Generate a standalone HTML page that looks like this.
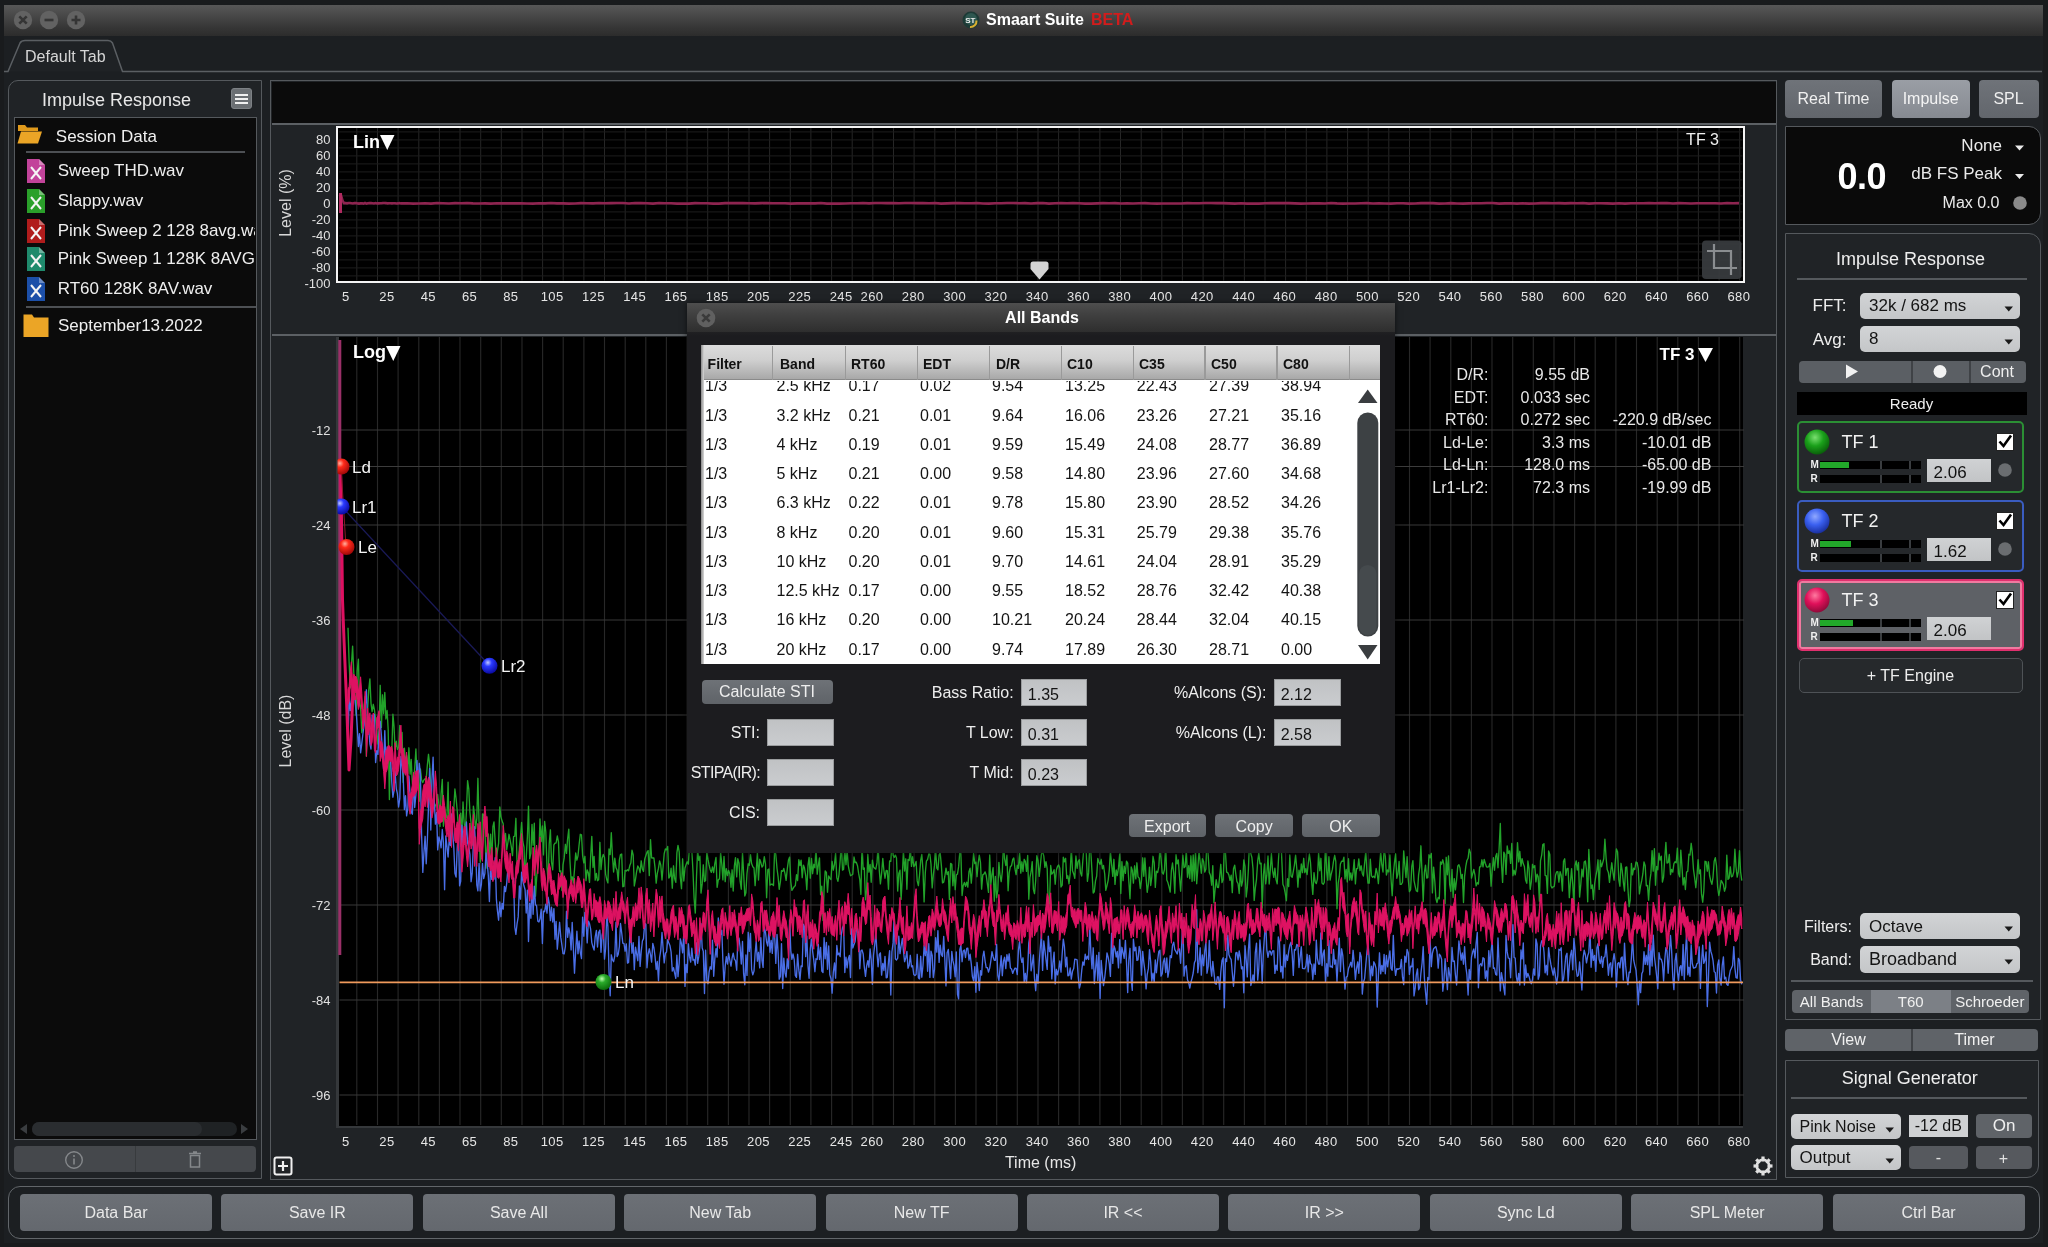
<!DOCTYPE html><html><head><meta charset="utf-8"><style>
html,body{margin:0;padding:0;width:2048px;height:1247px;overflow:hidden;background:#191b1d;font-family:"Liberation Sans",sans-serif;}
div{box-sizing:border-box;}
</style></head><body><div style="position:relative;width:2048px;height:1247px;overflow:hidden;will-change:transform;">
<div style="position:absolute;left:4px;top:35px;width:2039px;height:1208px;background:#1c1f22;"></div>
<div style="position:absolute;left:4px;top:5px;width:2039px;height:31px;background:linear-gradient(#575757 0%,#4a4a4a 30%,#353535 75%,#2c2c2c 100%);"></div>
<svg style="position:absolute;left:12.600000000000001px;top:10px" width="20" height="20" viewBox="0 0 20 20"><circle cx="10" cy="10" r="9.2" fill="#626262"/><path d="M6.3 6.3L13.7 13.7M13.7 6.3L6.3 13.7" stroke="#353535" stroke-width="2.6"/></svg>
<svg style="position:absolute;left:39.4px;top:10px" width="20" height="20" viewBox="0 0 20 20"><circle cx="10" cy="10" r="9.2" fill="#626262"/><path d="M5.5 10H14.5" stroke="#353535" stroke-width="2.6"/></svg>
<svg style="position:absolute;left:66px;top:10px" width="20" height="20" viewBox="0 0 20 20"><circle cx="10" cy="10" r="9.2" fill="#626262"/><path d="M5.5 10H14.5M10 5.5V14.5" stroke="#353535" stroke-width="2.6"/></svg>
<svg style="position:absolute;left:962px;top:11px" width="18" height="18" viewBox="0 0 18 18"><circle cx="9" cy="9" r="8.5" fill="#1d3a36"/><circle cx="9" cy="8" r="6" fill="#3a6a62" opacity="0.6"/><path d="M14.5 9.5 A6 6 0 0 1 8 16" stroke="#d8b030" stroke-width="2" fill="none"/><text x="3.2" y="11.5" font-size="8" font-weight="bold" fill="#eee" font-family="Liberation Sans">ST</text></svg>
<div style="position:absolute;left:986.0px;top:12.0px;font-size:16px;line-height:16px;color:#ffffff;font-weight:bold;white-space:pre;">Smaart Suite</div>
<div style="position:absolute;left:1091.0px;top:12.0px;font-size:16px;line-height:16px;color:#d21c1c;font-weight:bold;white-space:pre;">BETA</div>
<div style="position:absolute;left:4px;top:36px;width:2039px;height:36px;background:#1c1f22;"></div>
<svg style="position:absolute;left:0;top:36px" width="2048" height="40" viewBox="0 36 2048 40"><path d="M4 71.5 L8 71.5 L20 43 Q21.5 40.5 25 40.5 L108 40.5 Q111 40.5 112.5 43 L122.5 71.5 L2042 71.5" fill="#1f2225" stroke="#5b5f63" stroke-width="1.5"/></svg>
<div style="position:absolute;left:25.0px;top:48.7px;font-size:16px;line-height:16px;color:#d6d6d6;font-weight:normal;white-space:pre;">Default Tab</div>
<div style="position:absolute;left:7.5px;top:1186px;width:2032px;height:53px;border:1.5px solid #62666a;border-radius:12px;background:#1c1f22;"></div>
<div style="position:absolute;left:20.0px;top:1194px;width:192px;height:37px;background:linear-gradient(#6c7076,#64686e);border-radius:4px;"></div>
<div style="position:absolute;left:-484.0px;width:1200px;text-align:center;top:1204.5px;font-size:16px;line-height:16px;color:#e8e8e8;font-weight:normal;white-space:pre;">Data Bar</div>
<div style="position:absolute;left:221.4px;top:1194px;width:192px;height:37px;background:linear-gradient(#6c7076,#64686e);border-radius:4px;"></div>
<div style="position:absolute;left:-282.6px;width:1200px;text-align:center;top:1204.5px;font-size:16px;line-height:16px;color:#e8e8e8;font-weight:normal;white-space:pre;">Save IR</div>
<div style="position:absolute;left:422.8px;top:1194px;width:192px;height:37px;background:linear-gradient(#6c7076,#64686e);border-radius:4px;"></div>
<div style="position:absolute;left:-81.2px;width:1200px;text-align:center;top:1204.5px;font-size:16px;line-height:16px;color:#e8e8e8;font-weight:normal;white-space:pre;">Save All</div>
<div style="position:absolute;left:624.2px;top:1194px;width:192px;height:37px;background:linear-gradient(#6c7076,#64686e);border-radius:4px;"></div>
<div style="position:absolute;left:120.2px;width:1200px;text-align:center;top:1204.5px;font-size:16px;line-height:16px;color:#e8e8e8;font-weight:normal;white-space:pre;">New Tab</div>
<div style="position:absolute;left:825.6px;top:1194px;width:192px;height:37px;background:linear-gradient(#6c7076,#64686e);border-radius:4px;"></div>
<div style="position:absolute;left:321.6px;width:1200px;text-align:center;top:1204.5px;font-size:16px;line-height:16px;color:#e8e8e8;font-weight:normal;white-space:pre;">New TF</div>
<div style="position:absolute;left:1027.0px;top:1194px;width:192px;height:37px;background:linear-gradient(#6c7076,#64686e);border-radius:4px;"></div>
<div style="position:absolute;left:523.0px;width:1200px;text-align:center;top:1204.5px;font-size:16px;line-height:16px;color:#e8e8e8;font-weight:normal;white-space:pre;">IR &lt;&lt;</div>
<div style="position:absolute;left:1228.4px;top:1194px;width:192px;height:37px;background:linear-gradient(#6c7076,#64686e);border-radius:4px;"></div>
<div style="position:absolute;left:724.4px;width:1200px;text-align:center;top:1204.5px;font-size:16px;line-height:16px;color:#e8e8e8;font-weight:normal;white-space:pre;">IR &gt;&gt;</div>
<div style="position:absolute;left:1429.8px;top:1194px;width:192px;height:37px;background:linear-gradient(#6c7076,#64686e);border-radius:4px;"></div>
<div style="position:absolute;left:925.8px;width:1200px;text-align:center;top:1204.5px;font-size:16px;line-height:16px;color:#e8e8e8;font-weight:normal;white-space:pre;">Sync Ld</div>
<div style="position:absolute;left:1631.2px;top:1194px;width:192px;height:37px;background:linear-gradient(#6c7076,#64686e);border-radius:4px;"></div>
<div style="position:absolute;left:1127.2px;width:1200px;text-align:center;top:1204.5px;font-size:16px;line-height:16px;color:#e8e8e8;font-weight:normal;white-space:pre;">SPL Meter</div>
<div style="position:absolute;left:1832.6px;top:1194px;width:192px;height:37px;background:linear-gradient(#6c7076,#64686e);border-radius:4px;"></div>
<div style="position:absolute;left:1328.6px;width:1200px;text-align:center;top:1204.5px;font-size:16px;line-height:16px;color:#e8e8e8;font-weight:normal;white-space:pre;">Ctrl Bar</div>
<div style="position:absolute;left:8px;top:80px;width:254px;height:1099px;border:1.5px solid #55595d;border-radius:10px 0 0 10px;background:#202326;"></div>
<div style="position:absolute;left:42.0px;top:90.8px;font-size:18px;line-height:18px;color:#e8e8e8;font-weight:normal;white-space:pre;">Impulse Response</div>
<div style="position:absolute;left:231px;top:88px;width:21px;height:21px;background:#6b6f73;border-radius:3px;border:1px solid #7d8185;"></div>
<div style="position:absolute;left:235px;top:94.2px;width:13px;height:1.6px;background:#f0f0f0;"></div>
<div style="position:absolute;left:235px;top:98.2px;width:13px;height:1.6px;background:#f0f0f0;"></div>
<div style="position:absolute;left:235px;top:102.2px;width:13px;height:1.6px;background:#f0f0f0;"></div>
<div style="position:absolute;left:13.5px;top:117px;width:243px;height:1022.5px;border:1.5px solid #55595d;background:#0b0b0b;"></div>
<svg style="position:absolute;left:16px;top:122px" width="28" height="24" viewBox="0 0 28 24"><path d="M2 3 H9 L11 5.5 H22 V9 H2 Z" fill="#e09a1c"/><path d="M5 9.5 H26 L22 21.5 H1.5 Z" fill="#eba526"/></svg>
<div style="position:absolute;left:55.8px;top:128.4px;font-size:17px;line-height:17px;color:#f0f0f0;font-weight:normal;white-space:pre;">Session Data</div>
<div style="position:absolute;left:26px;top:151px;width:219px;height:2.2px;background:#4d5054;"></div>
<div style="position:absolute;left:15px;top:150px;width:240px;height:160px;overflow:hidden;">
<svg style="position:absolute;left:11px;top:8.9px" width="20" height="24" viewBox="0 0 20 24"><path d="M1 0 H13 L19 6 V24 H1 Z" fill="#c2439a"/><path d="M13 0 L19 6 H13 Z" fill="#ffffff" opacity="0.35"/><path d="M5 8 L15 20 M15 8 L5 20" stroke="#f4f4f4" stroke-width="2.0"/></svg>
<div style="position:absolute;left:42.7px;top:12.0px;font-size:17px;line-height:17px;color:#eeeeee;font-weight:normal;white-space:pre;">Sweep THD.wav</div>
<svg style="position:absolute;left:11px;top:38.5px" width="20" height="24" viewBox="0 0 20 24"><path d="M1 0 H13 L19 6 V24 H1 Z" fill="#2aa02a"/><path d="M13 0 L19 6 H13 Z" fill="#ffffff" opacity="0.35"/><path d="M5 8 L15 20 M15 8 L5 20" stroke="#f4f4f4" stroke-width="2.0"/></svg>
<div style="position:absolute;left:42.7px;top:41.6px;font-size:17px;line-height:17px;color:#eeeeee;font-weight:normal;white-space:pre;">Slappy.wav</div>
<svg style="position:absolute;left:11px;top:68.5px" width="20" height="24" viewBox="0 0 20 24"><path d="M1 0 H13 L19 6 V24 H1 Z" fill="#b01c1c"/><path d="M13 0 L19 6 H13 Z" fill="#ffffff" opacity="0.35"/><path d="M5 8 L15 20 M15 8 L5 20" stroke="#f4f4f4" stroke-width="2.0"/></svg>
<div style="position:absolute;left:42.7px;top:71.6px;font-size:17px;line-height:17px;color:#eeeeee;font-weight:normal;white-space:pre;">Pink Sweep 2 128 8avg.wav</div>
<svg style="position:absolute;left:11px;top:97.3px" width="20" height="24" viewBox="0 0 20 24"><path d="M1 0 H13 L19 6 V24 H1 Z" fill="#1f8a6c"/><path d="M13 0 L19 6 H13 Z" fill="#ffffff" opacity="0.35"/><path d="M5 8 L15 20 M15 8 L5 20" stroke="#f4f4f4" stroke-width="2.0"/></svg>
<div style="position:absolute;left:42.7px;top:100.4px;font-size:17px;line-height:17px;color:#eeeeee;font-weight:normal;white-space:pre;">Pink Sweep 1 128K 8AVG.wav</div>
<svg style="position:absolute;left:11px;top:127.1px" width="20" height="24" viewBox="0 0 20 24"><path d="M1 0 H13 L19 6 V24 H1 Z" fill="#1c4fa8"/><path d="M13 0 L19 6 H13 Z" fill="#ffffff" opacity="0.35"/><path d="M5 8 L15 20 M15 8 L5 20" stroke="#f4f4f4" stroke-width="2.0"/></svg>
<div style="position:absolute;left:42.7px;top:130.2px;font-size:17px;line-height:17px;color:#eeeeee;font-weight:normal;white-space:pre;">RT60 128K 8AV.wav</div>
</div>
<div style="position:absolute;left:26px;top:305.5px;width:230px;height:2.2px;background:#4d5054;"></div>
<svg style="position:absolute;left:22px;top:313px" width="28" height="25" viewBox="0 0 28 25"><path d="M1.5 1.5 H10 L12 4.5 H26.5 V24 H1.5 Z" fill="#eba526"/></svg>
<div style="position:absolute;left:58.0px;top:316.6px;font-size:17px;line-height:17px;color:#eeeeee;font-weight:normal;white-space:pre;">September13.2022</div>
<div style="position:absolute;left:32px;top:1122px;width:205px;height:14px;background:#1f2224;border-radius:7px;"></div>
<div style="position:absolute;left:32px;top:1122px;width:170px;height:14px;background:#2a2d30;border-radius:7px;"></div>
<svg style="position:absolute;left:16px;top:1122px" width="236" height="14"><path d="M4 7 L11 2 V12 Z" fill="#3a3d40"/><path d="M232 7 L225 2 V12 Z" fill="#3a3d40"/></svg>
<div style="position:absolute;left:14px;top:1146px;width:242px;height:26px;background:#45484c;border-radius:4px;"></div>
<div style="position:absolute;left:134.5px;top:1146px;width:1.5px;height:26px;background:#383b3e;"></div>
<svg style="position:absolute;left:64px;top:1150px" width="20" height="20" viewBox="0 0 20 20"><circle cx="10" cy="10" r="8.3" fill="none" stroke="#85888b" stroke-width="1.4"/><rect x="9.2" y="8.5" width="1.6" height="6" fill="#85888b"/><circle cx="10" cy="6" r="1" fill="#85888b"/></svg>
<svg style="position:absolute;left:186px;top:1150px" width="18" height="20" viewBox="0 0 18 20"><path d="M3 3.5 H15 M7 2 H11" stroke="#85888b" stroke-width="1.5"/><rect x="4.5" y="5.5" width="9" height="11.5" fill="none" stroke="#85888b" stroke-width="1.5"/></svg>
<div style="position:absolute;left:270px;top:80px;width:1507px;height:1100px;border:1.5px solid #55595d;background:#202326;"></div>
<div style="position:absolute;left:271.5px;top:81.5px;width:1504px;height:41.5px;background:#0b0b0b;"></div>
<div style="position:absolute;left:271.5px;top:123px;width:1504px;height:2.2px;background:#5c6064;"></div>
<div style="position:absolute;left:271.5px;top:333.8px;width:1504px;height:2.4px;background:#5c6064;"></div>
<div style="position:absolute;left:336px;top:125.5px;width:1409px;height:157.5px;background:#000;border:2.5px solid #f4f4f4;"></div>
<svg style="position:absolute;left:0;top:0" width="2048" height="1247"><line x1="356.8" y1="128" x2="356.8" y2="280.5" stroke="#262626" stroke-width="1"/><line x1="377.5" y1="128" x2="377.5" y2="280.5" stroke="#262626" stroke-width="1"/><line x1="398.1" y1="128" x2="398.1" y2="280.5" stroke="#262626" stroke-width="1"/><line x1="418.8" y1="128" x2="418.8" y2="280.5" stroke="#262626" stroke-width="1"/><line x1="439.4" y1="128" x2="439.4" y2="280.5" stroke="#262626" stroke-width="1"/><line x1="460.0" y1="128" x2="460.0" y2="280.5" stroke="#262626" stroke-width="1"/><line x1="480.7" y1="128" x2="480.7" y2="280.5" stroke="#262626" stroke-width="1"/><line x1="501.3" y1="128" x2="501.3" y2="280.5" stroke="#262626" stroke-width="1"/><line x1="522.0" y1="128" x2="522.0" y2="280.5" stroke="#262626" stroke-width="1"/><line x1="542.6" y1="128" x2="542.6" y2="280.5" stroke="#262626" stroke-width="1"/><line x1="563.2" y1="128" x2="563.2" y2="280.5" stroke="#262626" stroke-width="1"/><line x1="583.9" y1="128" x2="583.9" y2="280.5" stroke="#262626" stroke-width="1"/><line x1="604.5" y1="128" x2="604.5" y2="280.5" stroke="#262626" stroke-width="1"/><line x1="625.2" y1="128" x2="625.2" y2="280.5" stroke="#262626" stroke-width="1"/><line x1="645.8" y1="128" x2="645.8" y2="280.5" stroke="#262626" stroke-width="1"/><line x1="666.4" y1="128" x2="666.4" y2="280.5" stroke="#262626" stroke-width="1"/><line x1="687.1" y1="128" x2="687.1" y2="280.5" stroke="#262626" stroke-width="1"/><line x1="707.7" y1="128" x2="707.7" y2="280.5" stroke="#262626" stroke-width="1"/><line x1="728.4" y1="128" x2="728.4" y2="280.5" stroke="#262626" stroke-width="1"/><line x1="749.0" y1="128" x2="749.0" y2="280.5" stroke="#262626" stroke-width="1"/><line x1="769.6" y1="128" x2="769.6" y2="280.5" stroke="#262626" stroke-width="1"/><line x1="790.3" y1="128" x2="790.3" y2="280.5" stroke="#262626" stroke-width="1"/><line x1="810.9" y1="128" x2="810.9" y2="280.5" stroke="#262626" stroke-width="1"/><line x1="831.6" y1="128" x2="831.6" y2="280.5" stroke="#262626" stroke-width="1"/><line x1="852.2" y1="128" x2="852.2" y2="280.5" stroke="#262626" stroke-width="1"/><line x1="872.8" y1="128" x2="872.8" y2="280.5" stroke="#262626" stroke-width="1"/><line x1="893.5" y1="128" x2="893.5" y2="280.5" stroke="#262626" stroke-width="1"/><line x1="914.1" y1="128" x2="914.1" y2="280.5" stroke="#262626" stroke-width="1"/><line x1="934.8" y1="128" x2="934.8" y2="280.5" stroke="#262626" stroke-width="1"/><line x1="955.4" y1="128" x2="955.4" y2="280.5" stroke="#262626" stroke-width="1"/><line x1="976.0" y1="128" x2="976.0" y2="280.5" stroke="#262626" stroke-width="1"/><line x1="996.7" y1="128" x2="996.7" y2="280.5" stroke="#262626" stroke-width="1"/><line x1="1017.3" y1="128" x2="1017.3" y2="280.5" stroke="#262626" stroke-width="1"/><line x1="1038.0" y1="128" x2="1038.0" y2="280.5" stroke="#262626" stroke-width="1"/><line x1="1058.6" y1="128" x2="1058.6" y2="280.5" stroke="#262626" stroke-width="1"/><line x1="1079.2" y1="128" x2="1079.2" y2="280.5" stroke="#262626" stroke-width="1"/><line x1="1099.9" y1="128" x2="1099.9" y2="280.5" stroke="#262626" stroke-width="1"/><line x1="1120.5" y1="128" x2="1120.5" y2="280.5" stroke="#262626" stroke-width="1"/><line x1="1141.2" y1="128" x2="1141.2" y2="280.5" stroke="#262626" stroke-width="1"/><line x1="1161.8" y1="128" x2="1161.8" y2="280.5" stroke="#262626" stroke-width="1"/><line x1="1182.4" y1="128" x2="1182.4" y2="280.5" stroke="#262626" stroke-width="1"/><line x1="1203.1" y1="128" x2="1203.1" y2="280.5" stroke="#262626" stroke-width="1"/><line x1="1223.7" y1="128" x2="1223.7" y2="280.5" stroke="#262626" stroke-width="1"/><line x1="1244.4" y1="128" x2="1244.4" y2="280.5" stroke="#262626" stroke-width="1"/><line x1="1265.0" y1="128" x2="1265.0" y2="280.5" stroke="#262626" stroke-width="1"/><line x1="1285.6" y1="128" x2="1285.6" y2="280.5" stroke="#262626" stroke-width="1"/><line x1="1306.3" y1="128" x2="1306.3" y2="280.5" stroke="#262626" stroke-width="1"/><line x1="1326.9" y1="128" x2="1326.9" y2="280.5" stroke="#262626" stroke-width="1"/><line x1="1347.6" y1="128" x2="1347.6" y2="280.5" stroke="#262626" stroke-width="1"/><line x1="1368.2" y1="128" x2="1368.2" y2="280.5" stroke="#262626" stroke-width="1"/><line x1="1388.8" y1="128" x2="1388.8" y2="280.5" stroke="#262626" stroke-width="1"/><line x1="1409.5" y1="128" x2="1409.5" y2="280.5" stroke="#262626" stroke-width="1"/><line x1="1430.1" y1="128" x2="1430.1" y2="280.5" stroke="#262626" stroke-width="1"/><line x1="1450.8" y1="128" x2="1450.8" y2="280.5" stroke="#262626" stroke-width="1"/><line x1="1471.4" y1="128" x2="1471.4" y2="280.5" stroke="#262626" stroke-width="1"/><line x1="1492.0" y1="128" x2="1492.0" y2="280.5" stroke="#262626" stroke-width="1"/><line x1="1512.7" y1="128" x2="1512.7" y2="280.5" stroke="#262626" stroke-width="1"/><line x1="1533.3" y1="128" x2="1533.3" y2="280.5" stroke="#262626" stroke-width="1"/><line x1="1554.0" y1="128" x2="1554.0" y2="280.5" stroke="#262626" stroke-width="1"/><line x1="1574.6" y1="128" x2="1574.6" y2="280.5" stroke="#262626" stroke-width="1"/><line x1="1595.2" y1="128" x2="1595.2" y2="280.5" stroke="#262626" stroke-width="1"/><line x1="1615.9" y1="128" x2="1615.9" y2="280.5" stroke="#262626" stroke-width="1"/><line x1="1636.5" y1="128" x2="1636.5" y2="280.5" stroke="#262626" stroke-width="1"/><line x1="1657.2" y1="128" x2="1657.2" y2="280.5" stroke="#262626" stroke-width="1"/><line x1="1677.8" y1="128" x2="1677.8" y2="280.5" stroke="#262626" stroke-width="1"/><line x1="1698.4" y1="128" x2="1698.4" y2="280.5" stroke="#262626" stroke-width="1"/><line x1="1719.1" y1="128" x2="1719.1" y2="280.5" stroke="#262626" stroke-width="1"/><line x1="1739.7" y1="128" x2="1739.7" y2="280.5" stroke="#262626" stroke-width="1"/><line x1="339" y1="131.9" x2="1742.5" y2="131.9" stroke="#1c1c1c" stroke-width="1"/><line x1="339" y1="139.9" x2="1742.5" y2="139.9" stroke="#1c1c1c" stroke-width="1"/><line x1="339" y1="147.9" x2="1742.5" y2="147.9" stroke="#1c1c1c" stroke-width="1"/><line x1="339" y1="155.9" x2="1742.5" y2="155.9" stroke="#1c1c1c" stroke-width="1"/><line x1="339" y1="163.9" x2="1742.5" y2="163.9" stroke="#1c1c1c" stroke-width="1"/><line x1="339" y1="171.9" x2="1742.5" y2="171.9" stroke="#1c1c1c" stroke-width="1"/><line x1="339" y1="179.9" x2="1742.5" y2="179.9" stroke="#1c1c1c" stroke-width="1"/><line x1="339" y1="187.9" x2="1742.5" y2="187.9" stroke="#1c1c1c" stroke-width="1"/><line x1="339" y1="195.9" x2="1742.5" y2="195.9" stroke="#1c1c1c" stroke-width="1"/><line x1="339" y1="203.9" x2="1742.5" y2="203.9" stroke="#1c1c1c" stroke-width="1"/><line x1="339" y1="211.9" x2="1742.5" y2="211.9" stroke="#1c1c1c" stroke-width="1"/><line x1="339" y1="219.9" x2="1742.5" y2="219.9" stroke="#1c1c1c" stroke-width="1"/><line x1="339" y1="227.9" x2="1742.5" y2="227.9" stroke="#1c1c1c" stroke-width="1"/><line x1="339" y1="235.9" x2="1742.5" y2="235.9" stroke="#1c1c1c" stroke-width="1"/><line x1="339" y1="243.9" x2="1742.5" y2="243.9" stroke="#1c1c1c" stroke-width="1"/><line x1="339" y1="251.9" x2="1742.5" y2="251.9" stroke="#1c1c1c" stroke-width="1"/><line x1="339" y1="259.9" x2="1742.5" y2="259.9" stroke="#1c1c1c" stroke-width="1"/><line x1="339" y1="267.9" x2="1742.5" y2="267.9" stroke="#1c1c1c" stroke-width="1"/><line x1="339" y1="275.9" x2="1742.5" y2="275.9" stroke="#1c1c1c" stroke-width="1"/><polyline points="339.5,196.7 341.0,195.3 342.5,200.6 344.0,203.1 345.5,203.0 347.0,203.3 348.5,203.0 350.0,203.0 351.5,203.2 353.0,203.5 354.5,203.0 356.0,203.1 357.5,203.4 359.0,203.6 360.5,203.4 362.0,203.2 363.5,203.6 365.0,203.0 366.5,203.6 368.0,203.2 369.5,203.1 371.0,203.0 372.5,203.2 374.0,203.5 375.5,203.1 377.0,203.4 378.5,203.4 380.0,203.2 381.5,203.3 383.0,203.0 384.5,203.0 386.0,203.1 387.5,203.4 389.0,203.2 390.5,203.2 392.0,203.4 393.5,203.3 395.0,203.2 396.5,203.5 398.0,203.4 399.5,203.1 401.0,203.4 407.0,203.3 413.0,203.6 419.0,203.5 425.0,203.2 431.0,203.6 437.0,203.0 443.0,203.2 449.0,203.5 455.0,203.1 461.0,203.3 467.0,203.0 473.0,203.4 479.0,203.5 485.0,203.4 491.0,203.6 497.0,203.2 503.0,203.4 509.0,203.4 515.0,203.4 521.0,203.3 527.0,203.5 533.0,203.6 539.0,203.3 545.0,203.4 551.0,203.0 557.0,203.4 563.0,203.4 569.0,203.6 575.0,203.5 581.0,203.1 587.0,203.2 593.0,203.4 599.0,203.0 605.0,203.3 611.0,203.1 617.0,203.0 623.0,203.0 629.0,203.5 635.0,203.0 641.0,203.1 647.0,203.2 653.0,203.6 659.0,203.0 665.0,203.3 671.0,203.3 677.0,203.6 683.0,203.5 689.0,203.6 695.0,203.1 701.0,203.2 707.0,203.2 713.0,203.6 719.0,203.6 725.0,203.1 731.0,203.1 737.0,203.1 743.0,203.1 749.0,203.3 755.0,203.4 761.0,203.1 767.0,203.0 773.0,203.2 779.0,203.2 785.0,203.3 791.0,203.6 797.0,203.4 803.0,203.3 809.0,203.4 815.0,203.4 821.0,203.0 827.0,203.6 833.0,203.5 839.0,203.6 845.0,203.5 851.0,203.2 857.0,203.2 863.0,203.0 869.0,203.4 875.0,203.0 881.0,203.0 887.0,203.1 893.0,203.1 899.0,203.2 905.0,203.0 911.0,203.0 917.0,203.1 923.0,203.0 929.0,203.2 935.0,203.0 941.0,203.6 947.0,203.4 953.0,203.1 959.0,203.1 965.0,203.2 971.0,203.2 977.0,203.0 983.0,203.5 989.0,203.6 995.0,203.3 1001.0,203.3 1007.0,203.0 1013.0,203.0 1019.0,203.2 1025.0,203.1 1031.0,203.5 1037.0,203.1 1043.0,203.0 1049.0,203.6 1055.0,203.3 1061.0,203.1 1067.0,203.3 1073.0,203.0 1079.0,203.3 1085.0,203.6 1091.0,203.6 1097.0,203.4 1103.0,203.1 1109.0,203.2 1115.0,203.1 1121.0,203.5 1127.0,203.3 1133.0,203.5 1139.0,203.2 1145.0,203.1 1151.0,203.5 1157.0,203.6 1163.0,203.5 1169.0,203.5 1175.0,203.5 1181.0,203.5 1187.0,203.1 1193.0,203.3 1199.0,203.2 1205.0,203.0 1211.0,203.0 1217.0,203.1 1223.0,203.1 1229.0,203.4 1235.0,203.6 1241.0,203.3 1247.0,203.6 1253.0,203.6 1259.0,203.6 1265.0,203.2 1271.0,203.1 1277.0,203.1 1283.0,203.1 1289.0,203.1 1295.0,203.4 1301.0,203.6 1307.0,203.5 1313.0,203.3 1319.0,203.4 1325.0,203.5 1331.0,203.0 1337.0,203.4 1343.0,203.6 1349.0,203.5 1355.0,203.5 1361.0,203.3 1367.0,203.1 1373.0,203.5 1379.0,203.2 1385.0,203.5 1391.0,203.6 1397.0,203.2 1403.0,203.2 1409.0,203.6 1415.0,203.5 1421.0,203.1 1427.0,203.0 1433.0,203.1 1439.0,203.6 1445.0,203.5 1451.0,203.1 1457.0,203.5 1463.0,203.6 1469.0,203.4 1475.0,203.2 1481.0,203.3 1487.0,203.0 1493.0,203.0 1499.0,203.6 1505.0,203.4 1511.0,203.3 1517.0,203.6 1523.0,203.3 1529.0,203.6 1535.0,203.5 1541.0,203.1 1547.0,203.1 1553.0,203.2 1559.0,203.1 1565.0,203.4 1571.0,203.1 1577.0,203.2 1583.0,203.0 1589.0,203.6 1595.0,203.2 1601.0,203.3 1607.0,203.4 1613.0,203.6 1619.0,203.2 1625.0,203.6 1631.0,203.3 1637.0,203.3 1643.0,203.3 1649.0,203.0 1655.0,203.3 1661.0,203.1 1667.0,203.0 1673.0,203.5 1679.0,203.1 1685.0,203.3 1691.0,203.5 1697.0,203.3 1703.0,203.2 1709.0,203.3 1715.0,203.3 1721.0,203.5 1727.0,203.0 1733.0,203.3 1739.0,203.1" fill="none" stroke="#8e2450" stroke-width="2.6"/><rect x="339" y="193" width="3" height="20" fill="#b02a60"/><path d="M1030.5 264 Q1030.5 261.5 1033 261.5 H1046 Q1048.5 261.5 1048.5 264 V269 L1039.5 279.5 L1030.5 269 Z" fill="#d4d4d4"/><rect x="1702" y="240.5" width="39.5" height="38.5" rx="4" fill="#3a3d40" opacity="0.9"/><path d="M1714 244 V268 H1737 M1707 251 H1731 V275" fill="none" stroke="#8a8d90" stroke-width="2.2"/></svg>
<div style="position:absolute;left:353.0px;top:132.8px;font-size:18px;line-height:18px;color:#ffffff;font-weight:bold;white-space:pre;">Lin</div>
<svg style="position:absolute;left:379px;top:134px" width="17" height="17"><path d="M1 1 H15.5 L8.25 16 Z" fill="#fff"/></svg>
<div style="position:absolute;left:519.0px;width:1200px;text-align:right;top:132.0px;font-size:16px;line-height:16px;color:#f0f0f0;font-weight:normal;white-space:pre;">TF 3</div>
<div style="position:absolute;left:-869.5px;width:1200px;text-align:right;top:132.8px;font-size:13px;line-height:13px;color:#e0e0e0;font-weight:normal;white-space:pre;">80</div>
<div style="position:absolute;left:-869.5px;width:1200px;text-align:right;top:148.8px;font-size:13px;line-height:13px;color:#e0e0e0;font-weight:normal;white-space:pre;">60</div>
<div style="position:absolute;left:-869.5px;width:1200px;text-align:right;top:164.7px;font-size:13px;line-height:13px;color:#e0e0e0;font-weight:normal;white-space:pre;">40</div>
<div style="position:absolute;left:-869.5px;width:1200px;text-align:right;top:180.7px;font-size:13px;line-height:13px;color:#e0e0e0;font-weight:normal;white-space:pre;">20</div>
<div style="position:absolute;left:-869.5px;width:1200px;text-align:right;top:196.7px;font-size:13px;line-height:13px;color:#e0e0e0;font-weight:normal;white-space:pre;">0</div>
<div style="position:absolute;left:-869.5px;width:1200px;text-align:right;top:212.6px;font-size:13px;line-height:13px;color:#e0e0e0;font-weight:normal;white-space:pre;">-20</div>
<div style="position:absolute;left:-869.5px;width:1200px;text-align:right;top:228.6px;font-size:13px;line-height:13px;color:#e0e0e0;font-weight:normal;white-space:pre;">-40</div>
<div style="position:absolute;left:-869.5px;width:1200px;text-align:right;top:244.6px;font-size:13px;line-height:13px;color:#e0e0e0;font-weight:normal;white-space:pre;">-60</div>
<div style="position:absolute;left:-869.5px;width:1200px;text-align:right;top:260.6px;font-size:13px;line-height:13px;color:#e0e0e0;font-weight:normal;white-space:pre;">-80</div>
<div style="position:absolute;left:-869.5px;width:1200px;text-align:right;top:276.5px;font-size:13px;line-height:13px;color:#e0e0e0;font-weight:normal;white-space:pre;">-100</div>
<div style="position:absolute;left:236px;top:194px;width:100px;height:18px;transform:rotate(-90deg);transform-origin:50px 9px;text-align:center;font-size:16px;line-height:18px;color:#d8d8d8;">Level (%)</div>
<div style="position:absolute;left:-254.3px;width:1200px;text-align:center;top:290.0px;font-size:13px;line-height:13px;color:#e6e6e6;font-weight:normal;white-space:pre;letter-spacing:0.4px;">5</div>
<div style="position:absolute;left:-213.0px;width:1200px;text-align:center;top:290.0px;font-size:13px;line-height:13px;color:#e6e6e6;font-weight:normal;white-space:pre;letter-spacing:0.4px;">25</div>
<div style="position:absolute;left:-171.7px;width:1200px;text-align:center;top:290.0px;font-size:13px;line-height:13px;color:#e6e6e6;font-weight:normal;white-space:pre;letter-spacing:0.4px;">45</div>
<div style="position:absolute;left:-130.4px;width:1200px;text-align:center;top:290.0px;font-size:13px;line-height:13px;color:#e6e6e6;font-weight:normal;white-space:pre;letter-spacing:0.4px;">65</div>
<div style="position:absolute;left:-89.2px;width:1200px;text-align:center;top:290.0px;font-size:13px;line-height:13px;color:#e6e6e6;font-weight:normal;white-space:pre;letter-spacing:0.4px;">85</div>
<div style="position:absolute;left:-47.9px;width:1200px;text-align:center;top:290.0px;font-size:13px;line-height:13px;color:#e6e6e6;font-weight:normal;white-space:pre;letter-spacing:0.4px;">105</div>
<div style="position:absolute;left:-6.6px;width:1200px;text-align:center;top:290.0px;font-size:13px;line-height:13px;color:#e6e6e6;font-weight:normal;white-space:pre;letter-spacing:0.4px;">125</div>
<div style="position:absolute;left:34.7px;width:1200px;text-align:center;top:290.0px;font-size:13px;line-height:13px;color:#e6e6e6;font-weight:normal;white-space:pre;letter-spacing:0.4px;">145</div>
<div style="position:absolute;left:76.0px;width:1200px;text-align:center;top:290.0px;font-size:13px;line-height:13px;color:#e6e6e6;font-weight:normal;white-space:pre;letter-spacing:0.4px;">165</div>
<div style="position:absolute;left:117.2px;width:1200px;text-align:center;top:290.0px;font-size:13px;line-height:13px;color:#e6e6e6;font-weight:normal;white-space:pre;letter-spacing:0.4px;">185</div>
<div style="position:absolute;left:158.5px;width:1200px;text-align:center;top:290.0px;font-size:13px;line-height:13px;color:#e6e6e6;font-weight:normal;white-space:pre;letter-spacing:0.4px;">205</div>
<div style="position:absolute;left:199.8px;width:1200px;text-align:center;top:290.0px;font-size:13px;line-height:13px;color:#e6e6e6;font-weight:normal;white-space:pre;letter-spacing:0.4px;">225</div>
<div style="position:absolute;left:241.1px;width:1200px;text-align:center;top:290.0px;font-size:13px;line-height:13px;color:#e6e6e6;font-weight:normal;white-space:pre;letter-spacing:0.4px;">245</div>
<div style="position:absolute;left:272.0px;width:1200px;text-align:center;top:290.0px;font-size:13px;line-height:13px;color:#e6e6e6;font-weight:normal;white-space:pre;letter-spacing:0.4px;">260</div>
<div style="position:absolute;left:313.3px;width:1200px;text-align:center;top:290.0px;font-size:13px;line-height:13px;color:#e6e6e6;font-weight:normal;white-space:pre;letter-spacing:0.4px;">280</div>
<div style="position:absolute;left:354.6px;width:1200px;text-align:center;top:290.0px;font-size:13px;line-height:13px;color:#e6e6e6;font-weight:normal;white-space:pre;letter-spacing:0.4px;">300</div>
<div style="position:absolute;left:395.9px;width:1200px;text-align:center;top:290.0px;font-size:13px;line-height:13px;color:#e6e6e6;font-weight:normal;white-space:pre;letter-spacing:0.4px;">320</div>
<div style="position:absolute;left:437.2px;width:1200px;text-align:center;top:290.0px;font-size:13px;line-height:13px;color:#e6e6e6;font-weight:normal;white-space:pre;letter-spacing:0.4px;">340</div>
<div style="position:absolute;left:478.4px;width:1200px;text-align:center;top:290.0px;font-size:13px;line-height:13px;color:#e6e6e6;font-weight:normal;white-space:pre;letter-spacing:0.4px;">360</div>
<div style="position:absolute;left:519.7px;width:1200px;text-align:center;top:290.0px;font-size:13px;line-height:13px;color:#e6e6e6;font-weight:normal;white-space:pre;letter-spacing:0.4px;">380</div>
<div style="position:absolute;left:561.0px;width:1200px;text-align:center;top:290.0px;font-size:13px;line-height:13px;color:#e6e6e6;font-weight:normal;white-space:pre;letter-spacing:0.4px;">400</div>
<div style="position:absolute;left:602.3px;width:1200px;text-align:center;top:290.0px;font-size:13px;line-height:13px;color:#e6e6e6;font-weight:normal;white-space:pre;letter-spacing:0.4px;">420</div>
<div style="position:absolute;left:643.6px;width:1200px;text-align:center;top:290.0px;font-size:13px;line-height:13px;color:#e6e6e6;font-weight:normal;white-space:pre;letter-spacing:0.4px;">440</div>
<div style="position:absolute;left:684.8px;width:1200px;text-align:center;top:290.0px;font-size:13px;line-height:13px;color:#e6e6e6;font-weight:normal;white-space:pre;letter-spacing:0.4px;">460</div>
<div style="position:absolute;left:726.1px;width:1200px;text-align:center;top:290.0px;font-size:13px;line-height:13px;color:#e6e6e6;font-weight:normal;white-space:pre;letter-spacing:0.4px;">480</div>
<div style="position:absolute;left:767.4px;width:1200px;text-align:center;top:290.0px;font-size:13px;line-height:13px;color:#e6e6e6;font-weight:normal;white-space:pre;letter-spacing:0.4px;">500</div>
<div style="position:absolute;left:808.7px;width:1200px;text-align:center;top:290.0px;font-size:13px;line-height:13px;color:#e6e6e6;font-weight:normal;white-space:pre;letter-spacing:0.4px;">520</div>
<div style="position:absolute;left:850.0px;width:1200px;text-align:center;top:290.0px;font-size:13px;line-height:13px;color:#e6e6e6;font-weight:normal;white-space:pre;letter-spacing:0.4px;">540</div>
<div style="position:absolute;left:891.2px;width:1200px;text-align:center;top:290.0px;font-size:13px;line-height:13px;color:#e6e6e6;font-weight:normal;white-space:pre;letter-spacing:0.4px;">560</div>
<div style="position:absolute;left:932.5px;width:1200px;text-align:center;top:290.0px;font-size:13px;line-height:13px;color:#e6e6e6;font-weight:normal;white-space:pre;letter-spacing:0.4px;">580</div>
<div style="position:absolute;left:973.8px;width:1200px;text-align:center;top:290.0px;font-size:13px;line-height:13px;color:#e6e6e6;font-weight:normal;white-space:pre;letter-spacing:0.4px;">600</div>
<div style="position:absolute;left:1015.1px;width:1200px;text-align:center;top:290.0px;font-size:13px;line-height:13px;color:#e6e6e6;font-weight:normal;white-space:pre;letter-spacing:0.4px;">620</div>
<div style="position:absolute;left:1056.4px;width:1200px;text-align:center;top:290.0px;font-size:13px;line-height:13px;color:#e6e6e6;font-weight:normal;white-space:pre;letter-spacing:0.4px;">640</div>
<div style="position:absolute;left:1097.6px;width:1200px;text-align:center;top:290.0px;font-size:13px;line-height:13px;color:#e6e6e6;font-weight:normal;white-space:pre;letter-spacing:0.4px;">660</div>
<div style="position:absolute;left:1138.9px;width:1200px;text-align:center;top:290.0px;font-size:13px;line-height:13px;color:#e6e6e6;font-weight:normal;white-space:pre;letter-spacing:0.4px;">680</div>
<div style="position:absolute;left:336px;top:337px;width:1406.8px;height:790.5px;background:#000;border-left:3.5px solid #35383b;border-bottom:2.5px solid #35383b;"></div>
<svg style="position:absolute;left:0;top:0" width="2048" height="1247"><defs><radialGradient id="gr" cx="40%" cy="30%" r="70%"><stop offset="0" stop-color="#ffb0a0"/><stop offset="0.35" stop-color="#ff2a1a"/><stop offset="1" stop-color="#a00808"/></radialGradient><radialGradient id="gb" cx="40%" cy="30%" r="70%"><stop offset="0" stop-color="#c0c8ff"/><stop offset="0.35" stop-color="#2a3aff"/><stop offset="1" stop-color="#0a0aa0"/></radialGradient><radialGradient id="gg" cx="40%" cy="30%" r="70%"><stop offset="0" stop-color="#c0ffb0"/><stop offset="0.35" stop-color="#2aaa2a"/><stop offset="1" stop-color="#0a6a0a"/></radialGradient><clipPath id="plotclip"><rect x="337.5" y="337" width="1410" height="790"/></clipPath></defs><line x1="356.8" y1="337" x2="356.8" y2="1125" stroke="#282828" stroke-width="1.1"/><line x1="377.5" y1="337" x2="377.5" y2="1125" stroke="#282828" stroke-width="1.1"/><line x1="398.1" y1="337" x2="398.1" y2="1125" stroke="#282828" stroke-width="1.1"/><line x1="418.8" y1="337" x2="418.8" y2="1125" stroke="#282828" stroke-width="1.1"/><line x1="439.4" y1="337" x2="439.4" y2="1125" stroke="#282828" stroke-width="1.1"/><line x1="460.0" y1="337" x2="460.0" y2="1125" stroke="#282828" stroke-width="1.1"/><line x1="480.7" y1="337" x2="480.7" y2="1125" stroke="#282828" stroke-width="1.1"/><line x1="501.3" y1="337" x2="501.3" y2="1125" stroke="#282828" stroke-width="1.1"/><line x1="522.0" y1="337" x2="522.0" y2="1125" stroke="#282828" stroke-width="1.1"/><line x1="542.6" y1="337" x2="542.6" y2="1125" stroke="#282828" stroke-width="1.1"/><line x1="563.2" y1="337" x2="563.2" y2="1125" stroke="#282828" stroke-width="1.1"/><line x1="583.9" y1="337" x2="583.9" y2="1125" stroke="#282828" stroke-width="1.1"/><line x1="604.5" y1="337" x2="604.5" y2="1125" stroke="#282828" stroke-width="1.1"/><line x1="625.2" y1="337" x2="625.2" y2="1125" stroke="#282828" stroke-width="1.1"/><line x1="645.8" y1="337" x2="645.8" y2="1125" stroke="#282828" stroke-width="1.1"/><line x1="666.4" y1="337" x2="666.4" y2="1125" stroke="#282828" stroke-width="1.1"/><line x1="687.1" y1="337" x2="687.1" y2="1125" stroke="#282828" stroke-width="1.1"/><line x1="707.7" y1="337" x2="707.7" y2="1125" stroke="#282828" stroke-width="1.1"/><line x1="728.4" y1="337" x2="728.4" y2="1125" stroke="#282828" stroke-width="1.1"/><line x1="749.0" y1="337" x2="749.0" y2="1125" stroke="#282828" stroke-width="1.1"/><line x1="769.6" y1="337" x2="769.6" y2="1125" stroke="#282828" stroke-width="1.1"/><line x1="790.3" y1="337" x2="790.3" y2="1125" stroke="#282828" stroke-width="1.1"/><line x1="810.9" y1="337" x2="810.9" y2="1125" stroke="#282828" stroke-width="1.1"/><line x1="831.6" y1="337" x2="831.6" y2="1125" stroke="#282828" stroke-width="1.1"/><line x1="852.2" y1="337" x2="852.2" y2="1125" stroke="#282828" stroke-width="1.1"/><line x1="872.8" y1="337" x2="872.8" y2="1125" stroke="#282828" stroke-width="1.1"/><line x1="893.5" y1="337" x2="893.5" y2="1125" stroke="#282828" stroke-width="1.1"/><line x1="914.1" y1="337" x2="914.1" y2="1125" stroke="#282828" stroke-width="1.1"/><line x1="934.8" y1="337" x2="934.8" y2="1125" stroke="#282828" stroke-width="1.1"/><line x1="955.4" y1="337" x2="955.4" y2="1125" stroke="#282828" stroke-width="1.1"/><line x1="976.0" y1="337" x2="976.0" y2="1125" stroke="#282828" stroke-width="1.1"/><line x1="996.7" y1="337" x2="996.7" y2="1125" stroke="#282828" stroke-width="1.1"/><line x1="1017.3" y1="337" x2="1017.3" y2="1125" stroke="#282828" stroke-width="1.1"/><line x1="1038.0" y1="337" x2="1038.0" y2="1125" stroke="#282828" stroke-width="1.1"/><line x1="1058.6" y1="337" x2="1058.6" y2="1125" stroke="#282828" stroke-width="1.1"/><line x1="1079.2" y1="337" x2="1079.2" y2="1125" stroke="#282828" stroke-width="1.1"/><line x1="1099.9" y1="337" x2="1099.9" y2="1125" stroke="#282828" stroke-width="1.1"/><line x1="1120.5" y1="337" x2="1120.5" y2="1125" stroke="#282828" stroke-width="1.1"/><line x1="1141.2" y1="337" x2="1141.2" y2="1125" stroke="#282828" stroke-width="1.1"/><line x1="1161.8" y1="337" x2="1161.8" y2="1125" stroke="#282828" stroke-width="1.1"/><line x1="1182.4" y1="337" x2="1182.4" y2="1125" stroke="#282828" stroke-width="1.1"/><line x1="1203.1" y1="337" x2="1203.1" y2="1125" stroke="#282828" stroke-width="1.1"/><line x1="1223.7" y1="337" x2="1223.7" y2="1125" stroke="#282828" stroke-width="1.1"/><line x1="1244.4" y1="337" x2="1244.4" y2="1125" stroke="#282828" stroke-width="1.1"/><line x1="1265.0" y1="337" x2="1265.0" y2="1125" stroke="#282828" stroke-width="1.1"/><line x1="1285.6" y1="337" x2="1285.6" y2="1125" stroke="#282828" stroke-width="1.1"/><line x1="1306.3" y1="337" x2="1306.3" y2="1125" stroke="#282828" stroke-width="1.1"/><line x1="1326.9" y1="337" x2="1326.9" y2="1125" stroke="#282828" stroke-width="1.1"/><line x1="1347.6" y1="337" x2="1347.6" y2="1125" stroke="#282828" stroke-width="1.1"/><line x1="1368.2" y1="337" x2="1368.2" y2="1125" stroke="#282828" stroke-width="1.1"/><line x1="1388.8" y1="337" x2="1388.8" y2="1125" stroke="#282828" stroke-width="1.1"/><line x1="1409.5" y1="337" x2="1409.5" y2="1125" stroke="#282828" stroke-width="1.1"/><line x1="1430.1" y1="337" x2="1430.1" y2="1125" stroke="#282828" stroke-width="1.1"/><line x1="1450.8" y1="337" x2="1450.8" y2="1125" stroke="#282828" stroke-width="1.1"/><line x1="1471.4" y1="337" x2="1471.4" y2="1125" stroke="#282828" stroke-width="1.1"/><line x1="1492.0" y1="337" x2="1492.0" y2="1125" stroke="#282828" stroke-width="1.1"/><line x1="1512.7" y1="337" x2="1512.7" y2="1125" stroke="#282828" stroke-width="1.1"/><line x1="1533.3" y1="337" x2="1533.3" y2="1125" stroke="#282828" stroke-width="1.1"/><line x1="1554.0" y1="337" x2="1554.0" y2="1125" stroke="#282828" stroke-width="1.1"/><line x1="1574.6" y1="337" x2="1574.6" y2="1125" stroke="#282828" stroke-width="1.1"/><line x1="1595.2" y1="337" x2="1595.2" y2="1125" stroke="#282828" stroke-width="1.1"/><line x1="1615.9" y1="337" x2="1615.9" y2="1125" stroke="#282828" stroke-width="1.1"/><line x1="1636.5" y1="337" x2="1636.5" y2="1125" stroke="#282828" stroke-width="1.1"/><line x1="1657.2" y1="337" x2="1657.2" y2="1125" stroke="#282828" stroke-width="1.1"/><line x1="1677.8" y1="337" x2="1677.8" y2="1125" stroke="#282828" stroke-width="1.1"/><line x1="1698.4" y1="337" x2="1698.4" y2="1125" stroke="#282828" stroke-width="1.1"/><line x1="1719.1" y1="337" x2="1719.1" y2="1125" stroke="#282828" stroke-width="1.1"/><line x1="1739.7" y1="337" x2="1739.7" y2="1125" stroke="#282828" stroke-width="1.1"/><line x1="339.5" y1="430.0" x2="1744" y2="430.0" stroke="#383838" stroke-width="1.2"/><line x1="339.5" y1="525.0" x2="1744" y2="525.0" stroke="#383838" stroke-width="1.2"/><line x1="339.5" y1="620.0" x2="1744" y2="620.0" stroke="#383838" stroke-width="1.2"/><line x1="339.5" y1="715.0" x2="1744" y2="715.0" stroke="#383838" stroke-width="1.2"/><line x1="339.5" y1="810.0" x2="1744" y2="810.0" stroke="#383838" stroke-width="1.2"/><line x1="339.5" y1="905.0" x2="1744" y2="905.0" stroke="#383838" stroke-width="1.2"/><line x1="339.5" y1="1000.0" x2="1744" y2="1000.0" stroke="#383838" stroke-width="1.2"/><line x1="339.5" y1="1095.0" x2="1744" y2="1095.0" stroke="#383838" stroke-width="1.2"/><line x1="339.5" y1="466.5" x2="1744" y2="466.5" stroke="#3c3c3c" stroke-width="1.2"/><polyline points="348.0,627.8 349.1,661.8 350.3,687.9 351.4,665.4 352.6,646.1 353.8,673.0 354.9,695.7 356.1,715.3 357.2,670.8 358.4,659.2 359.5,700.7 360.6,707.2 361.8,732.7 362.9,728.2 364.1,704.9 365.2,696.4 366.4,756.3 367.6,711.2 368.7,690.4 369.9,678.9 371.0,703.3 372.1,711.6 373.3,704.3 374.4,709.6 375.6,719.1 376.8,731.4 377.9,744.0 379.1,729.6 380.2,685.3 381.4,727.4 382.5,694.8 383.6,713.7 384.8,692.5 385.9,719.0 387.1,710.5 388.2,730.0 389.4,799.5 390.6,749.0 391.7,755.7 392.9,714.2 394.0,726.1 395.1,749.5 396.3,741.1 397.4,749.5 398.6,747.2 399.8,725.4 400.9,752.5 402.1,732.5 403.2,782.4 404.4,748.1 405.5,764.4 406.6,755.7 407.8,773.4 408.9,747.8 410.1,774.2 411.2,759.4 412.4,784.1 413.6,778.6 414.7,768.6 415.9,749.0 417.0,775.4 418.1,777.0 419.3,801.3 420.4,768.9 421.6,779.9 422.8,782.6 423.9,779.9 425.1,778.7 426.2,778.9 427.4,764.8 428.5,754.3 429.6,764.5 430.8,786.9 431.9,810.9 433.1,807.7 434.2,809.2 435.4,805.3 436.6,803.7 437.7,794.5 438.9,804.3 440.0,826.4 441.1,793.5 442.3,779.4 443.4,826.3 444.6,807.0 445.8,816.6 446.9,818.1 448.1,782.2 449.2,840.1 450.4,843.1 451.5,815.0 452.6,819.1 453.8,809.3 454.9,789.0 456.1,798.6 457.2,810.5 458.4,827.4 459.6,824.9 460.7,813.1 461.9,834.0 463.0,801.9 464.1,822.3 465.3,833.7 466.4,812.0 467.6,780.6 468.8,789.2 469.9,812.1 471.1,823.6 472.2,845.0 473.4,806.1 474.5,814.6 475.6,828.7 476.8,818.7 477.9,778.3 479.1,824.1 480.2,862.1 481.4,849.5 482.5,813.9 483.7,814.3 484.9,825.9 486.0,868.1 487.1,847.2 488.3,834.0 489.4,855.9 490.6,834.1 491.8,862.1 492.9,826.7 494.0,822.0 495.2,841.5 496.4,858.7 497.5,850.7 498.6,843.4 499.8,806.9 500.9,816.6 502.1,821.1 503.2,823.8 504.4,843.3 505.5,833.4 506.7,849.6 507.9,842.5 509.0,834.3 510.1,839.9 511.3,846.7 512.5,855.6 513.6,836.6 514.8,836.2 515.9,818.3 517.0,861.7 518.2,870.4 519.4,846.9 520.5,836.7 521.6,822.5 522.8,841.5 524.0,847.2 525.1,879.9 526.2,858.1 527.4,836.9 528.5,806.1 529.7,858.7 530.9,853.2 532.0,824.4 533.1,845.2 534.3,823.2 535.5,896.2 536.6,878.5 537.8,866.0 538.9,851.9 540.0,818.9 541.2,841.6 542.4,826.0 543.5,854.9 544.6,821.4 545.8,831.9 547.0,866.6 548.1,881.9 549.2,844.1 550.4,829.8 551.5,862.0 552.7,869.8 553.9,844.9 555.0,843.2 556.1,843.0 557.3,836.0 558.5,841.9 559.6,871.5 560.8,870.9 561.9,890.5 563.0,864.8 564.2,857.9 565.4,844.3 566.5,853.4 567.6,839.0 568.8,829.1 570.0,861.7 571.1,880.4 572.2,876.8 573.4,883.0 574.5,869.6 575.7,853.0 576.9,860.2 578.0,855.8 579.1,844.8 580.3,834.3 581.5,834.8 582.6,855.3 583.8,862.8 584.9,856.3 586.0,880.6 587.2,870.0 588.4,873.0 589.5,882.4 590.6,857.7 591.8,836.4 593.0,867.5 594.1,856.4 595.2,880.1 596.4,873.4 597.5,880.7 598.7,879.5 599.9,842.3 601.0,869.5 602.1,858.2 603.3,854.4 604.5,857.6 605.6,874.1 606.8,879.8 607.9,882.9 609.0,849.0 610.2,854.5 611.3,832.7 612.5,856.8 613.6,872.0 614.8,858.1 616.0,867.8 617.1,870.1 618.2,880.8 619.4,859.8 620.5,854.5 621.7,854.0 622.8,886.7 624.0,886.3 625.1,870.4 626.3,871.0 627.5,869.8 628.6,870.7 629.8,865.6 630.9,862.7 632.0,850.1 633.2,854.9 634.3,886.0 635.5,879.3 636.6,871.6 637.8,866.0 639.0,868.3 640.1,872.7 641.2,860.8 642.4,868.9 643.5,871.5 644.7,859.3 645.8,855.8 647.0,852.2 648.1,850.6 649.3,875.6 650.5,839.6 651.6,857.9 652.8,858.0 653.9,858.0 655.0,867.3 656.2,883.1 657.3,873.4 658.5,868.2 659.6,860.9 660.8,865.3 662.0,880.0 663.1,866.8 664.2,853.7 665.4,849.0 666.5,849.9 667.7,846.4 668.8,878.0 670.0,876.3 671.1,868.2 672.3,888.2 673.5,865.8 674.6,878.5 675.8,882.4 676.9,852.9 678.0,845.4 679.2,851.8 680.3,877.3 681.5,888.7 682.6,858.8 683.8,881.0 685.0,868.0 686.1,864.6 687.2,861.8 688.4,864.1 689.5,845.2 690.7,851.2 691.8,849.7 693.0,871.8 694.1,898.2 695.3,913.1 696.5,877.0 697.6,850.1 698.8,860.4 699.9,856.2 701.0,893.1 702.2,883.9 703.3,864.8 704.5,881.6 705.6,880.6 706.8,852.3 708.0,859.4 709.1,865.0 710.2,869.7 711.4,872.4 712.5,866.9 713.7,872.5 714.8,863.7 716.0,857.5 717.1,887.3 718.3,879.8 719.5,878.9 720.6,852.2 721.8,864.1 722.9,879.9 724.0,856.4 725.2,881.6 726.3,868.6 727.5,875.6 728.6,870.4 729.8,873.7 731.0,887.3 732.1,869.8 733.2,891.0 734.4,865.8 735.5,857.6 736.7,876.9 737.8,858.6 739.0,863.1 740.1,880.8 741.3,889.2 742.5,852.5 743.6,872.9 744.8,896.0 745.9,892.8 747.0,873.3 748.2,863.8 749.3,865.3 750.5,854.6 751.6,863.5 752.8,866.7 754.0,868.0 755.1,885.6 756.2,871.7 757.4,852.2 758.5,880.0 759.7,859.3 760.8,862.3 762.0,867.1 763.1,865.5 764.3,856.6 765.5,864.2 766.6,897.7 767.8,869.8 768.9,868.9 770.0,885.1 771.2,884.2 772.3,884.2 773.5,885.5 774.6,849.0 775.8,854.3 777.0,868.5 778.1,876.9 779.2,889.3 780.4,881.7 781.5,870.6 782.7,871.4 783.8,868.4 785.0,873.6 786.1,880.4 787.3,868.9 788.5,859.9 789.6,857.1 790.8,881.8 791.9,890.4 793.0,888.7 794.2,886.6 795.3,885.7 796.5,874.7 797.6,880.5 798.8,859.7 800.0,865.5 801.1,860.1 802.2,877.7 803.4,865.1 804.5,868.1 805.7,875.5 806.8,889.7 808.0,865.4 809.1,857.4 810.3,878.2 811.5,858.4 812.6,873.7 813.8,864.3 814.9,867.9 816.0,846.6 817.2,874.2 818.3,865.3 819.5,857.9 820.6,894.7 821.8,886.2 823.0,920.4 824.1,888.7 825.2,870.9 826.4,872.4 827.5,892.2 828.7,876.0 829.8,878.1 831.0,879.5 832.1,861.3 833.3,870.2 834.5,864.3 835.6,853.1 836.8,877.9 837.9,881.4 839.0,874.6 840.2,860.1 841.3,842.2 842.5,870.1 843.6,869.5 844.8,848.7 846.0,864.7 847.1,849.6 848.2,865.3 849.4,871.4 850.5,875.7 851.7,875.0 852.8,874.2 854.0,857.0 855.1,862.5 856.3,862.2 857.5,865.7 858.6,873.2 859.8,879.6 860.9,894.4 862.0,843.5 863.2,869.3 864.3,868.0 865.5,899.8 866.6,890.3 867.8,854.3 868.9,872.1 870.1,864.5 871.2,882.3 872.4,860.1 873.5,867.0 874.7,868.3 875.8,869.1 877.0,862.9 878.1,845.1 879.3,870.5 880.4,883.9 881.6,873.3 882.8,858.4 883.9,870.5 885.0,878.2 886.2,870.5 887.3,870.7 888.5,889.2 889.6,861.0 890.8,861.3 891.9,843.8 893.1,855.1 894.2,857.4 895.4,855.1 896.5,858.0 897.7,891.1 898.8,873.5 900.0,870.1 901.1,899.4 902.3,877.3 903.4,850.0 904.6,871.0 905.8,858.8 906.9,889.3 908.0,859.4 909.2,860.5 910.3,847.5 911.5,866.4 912.6,856.6 913.8,866.6 914.9,865.0 916.1,861.5 917.2,880.9 918.4,885.6 919.5,875.5 920.7,860.4 921.8,854.4 923.0,870.4 924.1,901.9 925.3,872.8 926.4,861.2 927.6,859.5 928.8,853.9 929.9,854.1 931.0,864.1 932.2,887.9 933.3,875.2 934.5,865.4 935.6,848.6 936.8,868.2 937.9,869.9 939.1,854.8 940.2,852.8 941.4,865.9 942.5,882.9 943.7,882.1 944.8,876.5 946.0,868.2 947.1,874.5 948.3,871.7 949.4,899.4 950.6,863.4 951.8,864.3 952.9,885.8 954.0,871.2 955.2,889.6 956.3,875.1 957.5,873.9 958.6,866.9 959.8,852.0 960.9,853.6 962.1,895.5 963.2,885.5 964.4,882.5 965.5,886.3 966.7,882.2 967.8,887.1 969.0,871.6 970.1,868.2 971.3,883.1 972.4,869.4 973.6,853.3 974.8,863.6 975.9,862.1 977.0,876.7 978.2,863.1 979.3,855.2 980.5,862.7 981.6,889.1 982.8,874.9 983.9,874.1 985.1,871.9 986.2,875.1 987.4,884.1 988.5,892.4 989.7,855.0 990.8,884.7 992.0,874.4 993.1,867.7 994.3,901.3 995.4,876.4 996.6,897.6 997.8,890.2 998.9,862.4 1000.0,875.2 1001.2,881.6 1002.3,872.0 1003.5,841.0 1004.6,859.0 1005.8,865.5 1006.9,855.2 1008.1,890.8 1009.2,872.8 1010.4,866.3 1011.5,865.9 1012.7,859.5 1013.8,858.0 1015.0,869.0 1016.1,874.6 1017.3,865.3 1018.4,868.4 1019.6,852.3 1020.8,873.1 1021.9,861.8 1023.0,871.5 1024.2,859.3 1025.3,861.4 1026.5,871.4 1027.7,855.4 1028.8,899.2 1029.9,877.6 1031.1,871.7 1032.2,861.6 1033.4,889.4 1034.5,893.6 1035.7,880.5 1036.8,855.6 1038.0,860.6 1039.2,876.4 1040.3,865.7 1041.4,854.3 1042.6,851.4 1043.8,856.1 1044.9,867.4 1046.0,861.7 1047.2,868.9 1048.3,906.8 1049.5,903.0 1050.7,865.5 1051.8,874.1 1052.9,872.9 1054.1,869.7 1055.2,884.2 1056.4,870.0 1057.5,866.5 1058.7,865.0 1059.8,868.2 1061.0,887.0 1062.2,885.1 1063.3,857.1 1064.4,861.8 1065.6,858.3 1066.8,878.4 1067.9,875.8 1069.0,883.8 1070.2,873.4 1071.3,846.8 1072.5,870.8 1073.7,873.9 1074.8,878.3 1075.9,855.9 1077.1,868.3 1078.2,861.4 1079.4,859.7 1080.5,872.8 1081.7,876.0 1082.8,860.7 1084.0,846.2 1085.2,832.6 1086.3,853.9 1087.4,881.3 1088.6,872.9 1089.8,842.2 1090.9,852.6 1092.0,871.9 1093.2,893.0 1094.3,891.7 1095.5,880.9 1096.7,876.0 1097.8,858.5 1098.9,862.0 1100.1,864.4 1101.2,859.3 1102.4,868.9 1103.5,865.4 1104.7,874.0 1105.8,890.4 1107.0,885.5 1108.2,880.1 1109.3,870.1 1110.4,851.0 1111.6,864.5 1112.8,876.4 1113.9,859.3 1115.0,884.4 1116.2,870.0 1117.3,875.6 1118.5,867.9 1119.7,853.9 1120.8,893.6 1121.9,861.6 1123.1,880.6 1124.2,866.2 1125.4,873.4 1126.5,861.1 1127.7,863.1 1128.8,881.0 1130.0,898.8 1131.2,866.9 1132.3,870.1 1133.4,883.1 1134.6,865.8 1135.8,878.9 1136.9,862.8 1138.0,876.8 1139.2,878.1 1140.3,888.5 1141.5,880.1 1142.7,857.8 1143.8,876.3 1144.9,858.0 1146.1,877.5 1147.2,892.3 1148.4,884.1 1149.5,867.1 1150.7,885.5 1151.8,876.8 1153.0,856.3 1154.2,862.7 1155.3,887.4 1156.4,871.1 1157.6,872.6 1158.8,866.9 1159.9,848.1 1161.0,858.6 1162.2,872.5 1163.3,874.1 1164.5,869.5 1165.7,842.9 1166.8,879.9 1167.9,882.6 1169.1,887.2 1170.2,892.0 1171.4,870.5 1172.5,863.0 1173.7,873.1 1174.8,893.3 1176.0,854.7 1177.2,863.9 1178.3,859.9 1179.4,875.5 1180.6,891.2 1181.8,872.2 1182.9,855.2 1184.0,867.7 1185.2,866.5 1186.3,849.8 1187.5,877.2 1188.7,865.7 1189.8,878.6 1190.9,855.8 1192.1,881.4 1193.2,854.9 1194.4,880.7 1195.5,849.9 1196.7,883.7 1197.8,869.3 1199.0,850.3 1200.2,862.8 1201.3,873.3 1202.4,858.7 1203.6,861.5 1204.8,872.1 1205.9,869.1 1207.0,830.7 1208.2,855.3 1209.3,872.6 1210.5,875.3 1211.7,885.2 1212.8,865.6 1213.9,902.8 1215.1,889.4 1216.2,879.6 1217.4,887.3 1218.5,887.5 1219.7,876.4 1220.8,864.3 1222.0,882.6 1223.2,879.4 1224.3,848.5 1225.4,851.0 1226.6,872.1 1227.8,872.7 1228.9,875.1 1230.0,880.4 1231.2,875.2 1232.3,892.6 1233.5,868.7 1234.7,865.2 1235.8,873.8 1236.9,881.4 1238.1,883.8 1239.2,893.5 1240.4,870.4 1241.5,886.0 1242.7,880.8 1243.8,859.9 1245.0,866.4 1246.2,897.0 1247.3,887.7 1248.4,869.1 1249.6,839.3 1250.8,853.5 1251.9,857.5 1253.0,868.6 1254.2,900.4 1255.3,888.1 1256.5,879.3 1257.7,860.9 1258.8,853.1 1259.9,863.8 1261.1,863.1 1262.2,908.1 1263.4,875.0 1264.5,864.0 1265.7,883.9 1266.8,875.2 1268.0,856.0 1269.2,884.0 1270.3,870.2 1271.4,853.5 1272.6,870.8 1273.8,877.3 1274.9,868.2 1276.0,879.4 1277.2,883.8 1278.3,862.7 1279.5,842.2 1280.7,832.7 1281.8,859.8 1282.9,884.2 1284.1,887.3 1285.2,893.2 1286.4,900.7 1287.5,878.6 1288.7,886.6 1289.8,855.0 1291.0,876.0 1292.2,877.3 1293.3,871.4 1294.4,865.3 1295.6,855.1 1296.8,868.8 1297.9,887.1 1299.0,870.2 1300.2,877.7 1301.3,864.0 1302.5,872.6 1303.7,858.3 1304.8,872.7 1305.9,868.6 1307.1,874.5 1308.2,864.0 1309.4,854.0 1310.5,862.5 1311.7,882.3 1312.8,894.4 1314.0,872.6 1315.2,881.8 1316.3,883.6 1317.4,879.2 1318.6,852.9 1319.8,870.7 1320.9,858.3 1322.0,883.1 1323.2,884.3 1324.3,882.3 1325.5,840.9 1326.7,871.5 1327.8,880.2 1328.9,856.7 1330.1,880.0 1331.2,874.2 1332.4,869.4 1333.5,861.3 1334.7,855.3 1335.8,861.4 1337.0,908.7 1338.2,883.1 1339.3,876.7 1340.4,864.0 1341.6,861.2 1342.8,861.4 1343.9,857.1 1345.0,878.9 1346.2,869.5 1347.3,881.9 1348.5,858.7 1349.7,880.0 1350.8,872.9 1351.9,880.2 1353.1,871.9 1354.2,859.7 1355.4,883.9 1356.5,868.6 1357.7,868.5 1358.8,858.9 1360.0,870.6 1361.2,865.8 1362.3,873.4 1363.4,876.1 1364.6,863.3 1365.8,850.7 1366.9,871.6 1368.0,883.1 1369.2,883.1 1370.3,859.1 1371.5,875.9 1372.6,877.2 1373.8,876.2 1374.9,877.9 1376.1,868.5 1377.2,873.2 1378.4,883.6 1379.5,867.6 1380.7,851.4 1381.8,864.7 1383.0,872.0 1384.1,847.3 1385.3,856.3 1386.4,875.0 1387.6,870.0 1388.8,872.0 1389.9,854.9 1391.0,878.8 1392.2,895.7 1393.3,874.6 1394.5,862.4 1395.6,853.8 1396.8,878.3 1397.9,874.2 1399.1,861.5 1400.2,884.4 1401.4,884.3 1402.5,882.2 1403.7,850.9 1404.8,864.6 1406.0,877.5 1407.1,856.7 1408.3,879.5 1409.4,891.7 1410.6,889.6 1411.8,866.3 1412.9,860.6 1414.0,880.6 1415.2,886.3 1416.3,890.8 1417.5,891.6 1418.6,874.8 1419.8,866.6 1420.9,845.8 1422.1,874.9 1423.2,901.6 1424.4,872.6 1425.5,865.2 1426.7,878.0 1427.8,877.6 1429.0,854.8 1430.1,857.7 1431.3,853.4 1432.4,892.9 1433.6,867.1 1434.8,881.1 1435.9,898.5 1437.0,902.5 1438.2,897.4 1439.3,898.8 1440.5,861.9 1441.6,864.2 1442.8,859.8 1443.9,864.4 1445.1,903.4 1446.2,857.3 1447.4,874.8 1448.5,855.9 1449.7,884.6 1450.8,891.3 1452.0,869.4 1453.1,897.5 1454.3,878.6 1455.4,889.8 1456.6,879.8 1457.8,865.9 1458.9,864.8 1460.0,867.9 1461.2,878.3 1462.3,874.5 1463.5,902.5 1464.6,876.4 1465.8,866.3 1466.9,860.5 1468.1,858.3 1469.2,849.1 1470.4,852.7 1471.5,878.2 1472.7,873.6 1473.8,869.4 1475.0,875.2 1476.1,885.9 1477.3,882.7 1478.4,884.0 1479.6,867.0 1480.8,866.6 1481.9,859.8 1483.0,866.9 1484.2,859.4 1485.3,863.2 1486.5,866.8 1487.6,867.1 1488.8,866.6 1489.9,863.5 1491.1,886.2 1492.2,870.3 1493.4,857.7 1494.5,870.2 1495.7,856.6 1496.8,853.5 1498.0,867.7 1499.1,848.5 1500.3,823.5 1501.4,862.9 1502.6,882.4 1503.8,852.1 1504.9,854.6 1506.0,874.4 1507.2,846.0 1508.3,853.4 1509.5,850.9 1510.6,863.4 1511.8,843.5 1512.9,875.7 1514.1,870.3 1515.2,874.8 1516.4,867.7 1517.5,842.6 1518.7,861.9 1519.8,851.3 1521.0,866.2 1522.1,858.7 1523.3,863.8 1524.4,866.5 1525.6,879.9 1526.8,883.2 1527.9,861.0 1529.0,868.3 1530.2,889.3 1531.3,882.0 1532.5,864.3 1533.6,867.7 1534.8,865.7 1535.9,881.9 1537.1,874.2 1538.2,876.7 1539.4,901.2 1540.5,860.6 1541.7,855.2 1542.8,844.5 1544.0,843.7 1545.1,875.3 1546.3,875.9 1547.4,893.4 1548.6,850.9 1549.8,854.5 1550.9,885.7 1552.0,888.0 1553.2,886.8 1554.3,886.3 1555.5,875.2 1556.6,871.9 1557.8,871.6 1558.9,882.1 1560.1,871.7 1561.2,875.3 1562.4,891.0 1563.5,861.4 1564.7,858.8 1565.8,875.3 1567.0,868.7 1568.1,868.4 1569.3,897.6 1570.4,883.1 1571.6,868.6 1572.8,884.7 1573.9,907.1 1575.0,865.6 1576.2,860.9 1577.3,870.0 1578.5,862.5 1579.6,897.1 1580.8,884.4 1581.9,869.2 1583.1,876.9 1584.2,862.1 1585.4,860.9 1586.5,869.9 1587.7,901.8 1588.8,849.4 1590.0,871.1 1591.1,888.6 1592.3,885.0 1593.4,899.5 1594.6,884.0 1595.8,876.1 1596.9,870.6 1598.0,859.8 1599.2,889.4 1600.3,860.2 1601.5,866.7 1602.6,863.1 1603.8,858.8 1604.9,839.1 1606.1,858.1 1607.2,869.5 1608.4,872.5 1609.5,882.4 1610.7,871.7 1611.8,862.8 1613.0,873.0 1614.1,880.1 1615.3,861.5 1616.4,848.9 1617.6,852.1 1618.8,880.0 1619.9,886.2 1621.0,863.3 1622.2,870.5 1623.3,881.8 1624.5,891.0 1625.6,867.4 1626.8,867.0 1627.9,888.3 1629.1,906.7 1630.2,899.8 1631.4,863.4 1632.5,874.9 1633.7,868.1 1634.8,869.5 1636.0,862.0 1637.1,862.5 1638.3,868.7 1639.4,893.9 1640.6,885.8 1641.8,880.2 1642.9,873.7 1644.0,861.9 1645.2,865.7 1646.3,885.8 1647.5,885.5 1648.6,900.2 1649.8,881.7 1650.9,873.4 1652.1,850.6 1653.2,871.1 1654.4,848.6 1655.5,885.2 1656.7,866.4 1657.8,869.8 1659.0,853.1 1660.1,860.1 1661.3,856.2 1662.4,882.0 1663.6,877.0 1664.8,857.2 1665.9,842.4 1667.0,863.0 1668.2,862.7 1669.3,854.5 1670.5,874.5 1671.6,869.5 1672.8,872.1 1673.9,863.6 1675.1,861.7 1676.2,862.7 1677.4,848.1 1678.5,873.5 1679.7,876.9 1680.8,850.1 1682.0,867.1 1683.1,885.0 1684.3,877.6 1685.4,889.5 1686.6,872.1 1687.8,871.3 1688.9,854.2 1690.0,855.0 1691.2,843.3 1692.3,852.4 1693.5,869.5 1694.6,877.4 1695.8,887.7 1696.9,876.9 1698.1,859.6 1699.2,873.8 1700.4,869.8 1701.5,893.9 1702.7,902.2 1703.8,891.3 1705.0,861.3 1706.1,861.7 1707.3,871.2 1708.4,861.8 1709.6,875.5 1710.8,881.0 1711.9,884.4 1713.0,877.3 1714.2,861.1 1715.3,857.6 1716.5,866.0 1717.6,887.0 1718.8,895.5 1719.9,889.8 1721.1,880.4 1722.2,882.1 1723.4,884.5 1724.5,891.2 1725.7,887.2 1726.8,855.1 1728.0,879.4 1729.1,878.1 1730.3,866.8 1731.4,876.8 1732.6,876.2 1733.8,871.6 1734.9,849.2 1736.0,867.0 1737.2,877.2 1738.3,871.9 1739.5,850.6 1740.6,871.8 1741.8,880.6" fill="none" stroke="#22a22a" stroke-width="1.35" stroke-linejoin="round"/><polyline points="348.0,754.0 349.1,690.5 350.3,710.6 351.4,703.2 352.6,688.2 353.8,693.4 354.9,697.6 356.1,710.1 357.2,726.2 358.4,746.5 359.5,733.7 360.6,752.8 361.8,743.3 362.9,734.0 364.1,725.5 365.2,707.2 366.4,689.8 367.6,721.9 368.7,729.2 369.9,743.8 371.0,749.1 372.1,715.2 373.3,720.8 374.4,714.3 375.6,762.6 376.8,750.6 377.9,754.4 379.1,733.4 380.2,721.3 381.4,735.3 382.5,751.1 383.6,769.2 384.8,730.6 385.9,763.9 387.1,747.0 388.2,751.8 389.4,758.7 390.6,759.7 391.7,781.2 392.9,797.2 394.0,790.7 395.1,771.1 396.3,788.8 397.4,793.7 398.6,807.0 399.8,798.7 400.9,756.5 402.1,765.7 403.2,776.8 404.4,809.5 405.5,795.7 406.6,815.9 407.8,808.6 408.9,775.9 410.1,795.4 411.2,812.2 412.4,814.2 413.6,775.3 414.7,807.5 415.9,794.9 417.0,760.5 418.1,785.7 419.3,763.3 420.4,773.6 421.6,834.6 422.8,872.4 423.9,853.2 425.1,836.3 426.2,863.8 427.4,839.0 428.5,806.3 429.6,768.5 430.8,830.1 431.9,780.8 433.1,757.1 434.2,798.0 435.4,824.1 436.6,812.5 437.7,849.9 438.9,837.0 440.0,841.0 441.1,847.8 442.3,829.5 443.4,842.2 444.6,889.7 445.8,836.0 446.9,846.1 448.1,857.0 449.2,839.1 450.4,845.5 451.5,814.0 452.6,832.5 453.8,847.4 454.9,873.3 456.1,877.0 457.2,848.0 458.4,830.8 459.6,885.8 460.7,881.3 461.9,825.2 463.0,843.0 464.1,836.9 465.3,841.9 466.4,821.9 467.6,843.1 468.8,847.1 469.9,854.3 471.1,881.7 472.2,873.2 473.4,843.5 474.5,826.7 475.6,846.6 476.8,884.8 477.9,890.8 479.1,863.4 480.2,890.9 481.4,884.3 482.5,863.4 483.7,878.6 484.9,873.3 486.0,852.9 487.1,861.4 488.3,875.4 489.4,901.5 490.6,864.0 491.8,879.4 492.9,879.7 494.0,879.1 495.2,857.6 496.4,899.4 497.5,911.1 498.6,920.2 499.8,902.0 500.9,916.7 502.1,903.4 503.2,909.1 504.4,886.4 505.5,891.6 506.7,883.3 507.9,868.4 509.0,876.6 510.1,866.6 511.3,864.8 512.5,878.1 513.6,878.1 514.8,927.0 515.9,934.4 517.0,924.2 518.2,916.9 519.4,886.0 520.5,899.1 521.6,872.2 522.8,880.6 524.0,885.8 525.1,889.7 526.2,913.0 527.4,890.1 528.5,941.5 529.7,903.2 530.9,918.2 532.0,879.7 533.1,914.3 534.3,886.1 535.5,904.5 536.6,906.0 537.8,921.3 538.9,922.0 540.0,918.8 541.2,909.2 542.4,943.6 543.5,911.1 544.6,911.7 545.8,904.1 547.0,913.1 548.1,897.2 549.2,903.1 550.4,920.6 551.5,907.2 552.7,922.0 553.9,908.6 555.0,939.3 556.1,921.5 557.3,949.1 558.5,935.6 559.6,922.3 560.8,937.4 561.9,945.2 563.0,953.6 564.2,953.9 565.4,946.3 566.5,911.3 567.6,937.3 568.8,927.8 570.0,933.9 571.1,949.9 572.2,922.4 573.4,949.0 574.5,973.2 575.7,950.2 576.9,931.2 578.0,953.8 579.1,941.0 580.3,952.1 581.5,958.6 582.6,917.1 583.8,936.2 584.9,912.5 586.0,920.0 587.2,942.9 588.4,921.1 589.5,923.6 590.6,928.8 591.8,942.6 593.0,947.1 594.1,950.1 595.2,936.9 596.4,930.4 597.5,947.0 598.7,932.3 599.9,930.0 601.0,952.3 602.1,935.4 603.3,929.7 604.5,959.1 605.6,948.8 606.8,913.3 607.9,926.9 609.0,971.2 610.2,995.8 611.3,954.8 612.5,959.8 613.6,961.7 614.8,955.9 616.0,922.3 617.1,956.6 618.2,954.4 619.4,946.3 620.5,923.5 621.7,932.8 622.8,943.1 624.0,943.7 625.1,951.2 626.3,943.9 627.5,963.1 628.6,962.4 629.8,935.5 630.9,937.2 632.0,953.2 633.2,942.7 634.3,969.6 635.5,947.2 636.6,953.6 637.8,960.7 639.0,936.4 640.1,966.4 641.2,952.0 642.4,941.0 643.5,938.6 644.7,923.1 645.8,924.3 647.0,967.8 648.1,954.3 649.3,948.8 650.5,954.7 651.6,962.1 652.8,943.4 653.9,947.6 655.0,956.1 656.2,969.5 657.3,961.5 658.5,980.8 659.6,957.6 660.8,950.1 662.0,932.5 663.1,948.5 664.2,962.9 665.4,953.3 666.5,952.1 667.7,939.8 668.8,942.8 670.0,945.8 671.1,952.0 672.3,971.1 673.5,967.6 674.6,972.9 675.8,978.3 676.9,955.1 678.0,976.6 679.2,962.6 680.3,938.8 681.5,943.6 682.6,952.8 683.8,933.4 685.0,986.4 686.1,964.4 687.2,972.6 688.4,943.8 689.5,956.4 690.7,962.0 691.8,948.2 693.0,960.2 694.1,959.4 695.3,965.0 696.5,942.8 697.6,963.3 698.8,956.4 699.9,946.3 701.0,923.6 702.2,948.0 703.3,951.4 704.5,993.5 705.6,950.2 706.8,979.9 708.0,983.8 709.1,972.1 710.2,966.8 711.4,969.2 712.5,940.1 713.7,976.3 714.8,959.2 716.0,948.7 717.1,957.1 718.3,918.0 719.5,929.6 720.6,934.7 721.8,930.1 722.9,961.2 724.0,984.2 725.2,966.2 726.3,956.6 727.5,964.0 728.6,953.4 729.8,960.2 731.0,966.1 732.1,958.0 733.2,953.2 734.4,959.3 735.5,960.6 736.7,970.2 737.8,939.8 739.0,938.1 740.1,947.1 741.3,964.0 742.5,941.5 743.6,973.4 744.8,984.8 745.9,955.0 747.0,975.4 748.2,932.3 749.3,951.4 750.5,933.5 751.6,969.3 752.8,974.8 754.0,971.1 755.1,953.8 756.2,941.2 757.4,961.2 758.5,952.3 759.7,967.9 760.8,937.7 762.0,960.4 763.1,967.4 764.3,927.3 765.5,932.3 766.6,942.0 767.8,946.0 768.9,930.1 770.0,952.3 771.2,940.5 772.3,953.4 773.5,930.3 774.6,934.2 775.8,963.4 777.0,934.5 778.1,952.5 779.2,979.2 780.4,976.3 781.5,943.6 782.7,988.6 783.8,958.2 785.0,972.9 786.1,977.0 787.3,958.8 788.5,968.6 789.6,920.1 790.8,950.8 791.9,959.4 793.0,954.0 794.2,959.7 795.3,975.3 796.5,977.3 797.6,954.3 798.8,969.7 800.0,979.4 801.1,965.9 802.2,966.6 803.4,924.2 804.5,926.8 805.7,956.6 806.8,936.0 808.0,966.0 809.1,978.3 810.3,949.0 811.5,939.1 812.6,951.1 813.8,960.4 814.9,971.7 816.0,958.8 817.2,959.5 818.3,944.2 819.5,959.5 820.6,947.5 821.8,971.1 823.0,972.5 824.1,937.7 825.2,958.8 826.4,942.4 827.5,969.3 828.7,946.0 829.8,974.6 831.0,978.8 832.1,993.2 833.3,972.4 834.5,963.0 835.6,978.2 836.8,945.4 837.9,954.9 839.0,953.1 840.2,956.6 841.3,934.6 842.5,927.6 843.6,925.4 844.8,972.5 846.0,957.2 847.1,967.8 848.2,959.2 849.4,955.4 850.5,977.5 851.7,928.8 852.8,948.0 854.0,944.4 855.1,941.4 856.3,930.3 857.5,928.7 858.6,933.3 859.8,968.8 860.9,951.0 862.0,949.9 863.2,954.0 864.3,966.9 865.5,976.4 866.6,966.1 867.8,960.7 868.9,967.2 870.1,949.0 871.2,959.6 872.4,984.4 873.5,955.5 874.7,945.2 875.8,932.4 877.0,953.1 878.1,966.8 879.3,954.5 880.4,952.9 881.6,975.1 882.8,963.4 883.9,970.5 885.0,956.4 886.2,977.8 887.3,977.3 888.5,961.4 889.6,950.7 890.8,995.0 891.9,952.0 893.1,942.9 894.2,917.8 895.4,959.1 896.5,960.0 897.7,958.1 898.8,936.1 900.0,953.6 901.1,946.0 902.3,938.5 903.4,950.4 904.6,961.7 905.8,957.7 906.9,951.4 908.0,968.3 909.2,965.2 910.3,955.3 911.5,966.9 912.6,965.7 913.8,974.6 914.9,975.5 916.1,974.4 917.2,954.3 918.4,977.8 919.5,978.9 920.7,956.3 921.8,977.2 923.0,965.3 924.1,946.0 925.3,955.6 926.4,939.4 927.6,971.3 928.8,943.7 929.9,977.4 931.0,951.1 932.2,955.5 933.3,977.5 934.5,969.3 935.6,937.6 936.8,952.1 937.9,930.6 939.1,962.4 940.2,945.2 941.4,954.7 942.5,956.5 943.7,936.5 944.8,958.8 946.0,985.9 947.1,952.7 948.3,949.4 949.4,962.7 950.6,978.5 951.8,951.5 952.9,960.7 954.0,965.3 955.2,976.8 956.3,951.9 957.5,994.4 958.6,998.8 959.8,949.4 960.9,945.5 962.1,961.7 963.2,950.9 964.4,949.9 965.5,957.5 966.7,948.5 967.8,948.1 969.0,960.2 970.1,954.2 971.3,964.0 972.4,976.6 973.6,980.8 974.8,966.7 975.9,992.3 977.0,962.4 978.2,974.0 979.3,990.5 980.5,970.7 981.6,975.0 982.8,957.0 983.9,951.1 985.1,961.1 986.2,967.7 987.4,967.6 988.5,972.1 989.7,968.1 990.8,961.1 992.0,951.6 993.1,956.7 994.3,960.3 995.4,960.3 996.6,944.5 997.8,975.3 998.9,980.4 1000.0,969.0 1001.2,955.7 1002.3,975.7 1003.5,961.1 1004.6,957.3 1005.8,968.6 1006.9,954.7 1008.1,961.2 1009.2,953.8 1010.4,968.0 1011.5,968.9 1012.7,973.4 1013.8,970.5 1015.0,968.1 1016.1,968.4 1017.3,974.5 1018.4,950.3 1019.6,941.2 1020.8,957.1 1021.9,962.4 1023.0,957.8 1024.2,982.2 1025.3,973.3 1026.5,982.6 1027.7,967.9 1028.8,942.8 1029.9,936.5 1031.1,970.8 1032.2,964.2 1033.4,954.9 1034.5,978.4 1035.7,990.7 1036.8,974.3 1038.0,983.3 1039.2,962.3 1040.3,947.7 1041.4,933.8 1042.6,970.4 1043.8,941.0 1044.9,950.3 1046.0,959.6 1047.2,969.4 1048.3,936.1 1049.5,951.6 1050.7,947.0 1051.8,978.9 1052.9,963.0 1054.1,952.2 1055.2,983.9 1056.4,969.3 1057.5,974.8 1058.7,969.4 1059.8,961.0 1061.0,972.1 1062.2,953.5 1063.3,939.2 1064.4,946.3 1065.6,966.8 1066.8,957.2 1067.9,975.8 1069.0,975.4 1070.2,968.0 1071.3,979.1 1072.5,971.3 1073.7,968.6 1074.8,959.2 1075.9,959.4 1077.1,959.9 1078.2,976.3 1079.4,988.1 1080.5,983.9 1081.7,970.7 1082.8,962.0 1084.0,965.3 1085.2,954.2 1086.3,959.4 1087.4,956.2 1088.6,959.6 1089.8,926.7 1090.9,952.8 1092.0,968.8 1093.2,947.8 1094.3,983.6 1095.5,969.2 1096.7,955.3 1097.8,980.5 1098.9,952.5 1100.1,998.5 1101.2,960.5 1102.4,974.9 1103.5,985.6 1104.7,977.7 1105.8,967.6 1107.0,952.9 1108.2,957.4 1109.3,963.8 1110.4,976.4 1111.6,933.3 1112.8,963.4 1113.9,945.8 1115.0,948.8 1116.2,957.0 1117.3,951.4 1118.5,967.9 1119.7,939.6 1120.8,963.0 1121.9,947.3 1123.1,952.8 1124.2,958.3 1125.4,940.4 1126.5,962.3 1127.7,992.6 1128.8,960.0 1130.0,948.3 1131.2,980.1 1132.3,990.4 1133.4,939.2 1134.6,950.8 1135.8,947.2 1136.9,960.4 1138.0,959.9 1139.2,946.5 1140.3,951.5 1141.5,975.1 1142.7,951.4 1143.8,962.3 1144.9,970.9 1146.1,988.9 1147.2,974.6 1148.4,968.4 1149.5,949.6 1150.7,962.3 1151.8,981.2 1153.0,973.2 1154.2,982.3 1155.3,960.0 1156.4,972.7 1157.6,960.8 1158.8,951.4 1159.9,950.1 1161.0,976.1 1162.2,973.8 1163.3,962.1 1164.5,958.1 1165.7,972.5 1166.8,958.0 1167.9,977.2 1169.1,970.1 1170.2,955.7 1171.4,957.6 1172.5,945.5 1173.7,942.2 1174.8,949.6 1176.0,951.6 1177.2,954.0 1178.3,948.9 1179.4,948.9 1180.6,963.3 1181.8,942.9 1182.9,920.5 1184.0,976.1 1185.2,966.9 1186.3,965.8 1187.5,979.7 1188.7,982.8 1189.8,988.0 1190.9,982.2 1192.1,978.1 1193.2,973.0 1194.4,962.8 1195.5,960.4 1196.7,909.6 1197.8,972.7 1199.0,962.9 1200.2,947.8 1201.3,975.1 1202.4,955.0 1203.6,965.7 1204.8,950.5 1205.9,942.3 1207.0,973.2 1208.2,966.7 1209.3,940.5 1210.5,966.2 1211.7,976.1 1212.8,961.4 1213.9,972.1 1215.1,983.4 1216.2,984.3 1217.4,976.8 1218.5,977.0 1219.7,989.4 1220.8,972.0 1222.0,960.6 1223.2,957.7 1224.3,1007.8 1225.4,958.8 1226.6,961.6 1227.8,935.1 1228.9,954.8 1230.0,957.6 1231.2,959.7 1232.3,972.7 1233.5,986.3 1234.7,971.4 1235.8,952.8 1236.9,952.4 1238.1,959.9 1239.2,950.9 1240.4,958.2 1241.5,968.8 1242.7,966.8 1243.8,992.8 1245.0,945.7 1246.2,959.9 1247.3,976.9 1248.4,949.7 1249.6,934.1 1250.8,985.5 1251.9,981.9 1253.0,974.9 1254.2,982.7 1255.3,952.6 1256.5,943.1 1257.7,980.1 1258.8,968.2 1259.9,940.0 1261.1,954.6 1262.2,983.1 1263.4,951.7 1264.5,936.1 1265.7,921.6 1266.8,949.6 1268.0,957.4 1269.2,951.2 1270.3,951.1 1271.4,955.1 1272.6,950.9 1273.8,950.8 1274.9,973.4 1276.0,965.2 1277.2,970.3 1278.3,937.0 1279.5,942.2 1280.7,971.8 1281.8,966.5 1282.9,978.1 1284.1,944.6 1285.2,967.0 1286.4,954.9 1287.5,960.3 1288.7,951.4 1289.8,945.3 1291.0,942.3 1292.2,955.0 1293.3,975.4 1294.4,949.7 1295.6,950.1 1296.8,944.5 1297.9,945.3 1299.0,967.5 1300.2,957.0 1301.3,946.8 1302.5,968.3 1303.7,968.6 1304.8,968.7 1305.9,965.8 1307.1,954.3 1308.2,971.9 1309.4,955.4 1310.5,963.6 1311.7,964.7 1312.8,979.5 1314.0,964.0 1315.2,974.4 1316.3,940.2 1317.4,958.5 1318.6,964.0 1319.8,964.0 1320.9,933.0 1322.0,965.6 1323.2,953.8 1324.3,950.0 1325.5,981.9 1326.7,963.7 1327.8,976.2 1328.9,940.5 1330.1,966.8 1331.2,966.2 1332.4,967.5 1333.5,949.5 1334.7,964.2 1335.8,959.8 1337.0,981.4 1338.2,959.5 1339.3,938.1 1340.4,971.6 1341.6,948.8 1342.8,955.7 1343.9,971.6 1345.0,989.1 1346.2,977.1 1347.3,976.5 1348.5,968.6 1349.7,965.7 1350.8,962.3 1351.9,967.0 1353.1,950.3 1354.2,962.4 1355.4,979.4 1356.5,968.9 1357.7,961.9 1358.8,973.3 1360.0,952.4 1361.2,956.8 1362.3,994.1 1363.4,982.3 1364.6,978.6 1365.8,964.9 1366.9,952.7 1368.0,943.6 1369.2,958.3 1370.3,980.4 1371.5,966.1 1372.6,975.7 1373.8,961.8 1374.9,964.0 1376.1,968.6 1377.2,1007.1 1378.4,975.7 1379.5,952.8 1380.7,973.8 1381.8,965.4 1383.0,971.4 1384.1,954.4 1385.3,973.8 1386.4,955.5 1387.6,966.8 1388.8,958.1 1389.9,950.9 1391.0,968.5 1392.2,970.3 1393.3,935.4 1394.5,966.2 1395.6,975.4 1396.8,968.7 1397.9,969.3 1399.1,968.6 1400.2,968.7 1401.4,959.4 1402.5,977.2 1403.7,984.6 1404.8,956.1 1406.0,962.2 1407.1,949.4 1408.3,952.9 1409.4,974.4 1410.6,966.2 1411.8,966.8 1412.9,958.5 1414.0,995.9 1415.2,988.1 1416.3,974.9 1417.5,968.9 1418.6,989.8 1419.8,987.2 1420.9,973.3 1422.1,963.0 1423.2,946.6 1424.4,978.5 1425.5,991.6 1426.7,1004.3 1427.8,977.5 1429.0,979.6 1430.1,938.9 1431.3,966.6 1432.4,953.2 1433.6,948.8 1434.8,947.5 1435.9,946.6 1437.0,951.5 1438.2,968.1 1439.3,954.2 1440.5,955.7 1441.6,959.2 1442.8,991.2 1443.9,981.4 1445.1,958.7 1446.2,973.4 1447.4,989.6 1448.5,967.6 1449.7,974.8 1450.8,981.6 1452.0,947.5 1453.1,961.4 1454.3,961.0 1455.4,974.6 1456.6,985.0 1457.8,961.8 1458.9,941.0 1460.0,950.4 1461.2,960.1 1462.3,953.0 1463.5,964.2 1464.6,946.6 1465.8,966.7 1466.9,974.7 1468.1,995.0 1469.2,969.5 1470.4,979.3 1471.5,957.2 1472.7,951.8 1473.8,949.0 1475.0,957.9 1476.1,943.4 1477.3,932.4 1478.4,987.8 1479.6,965.1 1480.8,963.7 1481.9,966.0 1483.0,957.7 1484.2,958.8 1485.3,978.3 1486.5,970.9 1487.6,981.1 1488.8,950.6 1489.9,966.9 1491.1,951.0 1492.2,941.6 1493.4,968.3 1494.5,968.0 1495.7,974.5 1496.8,975.1 1498.0,938.0 1499.1,964.8 1500.3,990.9 1501.4,972.6 1502.6,979.4 1503.8,987.8 1504.9,994.9 1506.0,935.5 1507.2,951.9 1508.3,958.1 1509.5,958.3 1510.6,977.7 1511.8,948.9 1512.9,924.6 1514.1,957.5 1515.2,958.1 1516.4,977.1 1517.5,982.5 1518.7,973.4 1519.8,985.0 1521.0,950.0 1522.1,958.9 1523.3,943.0 1524.4,985.0 1525.6,965.0 1526.8,977.4 1527.9,973.4 1529.0,976.4 1530.2,981.0 1531.3,983.7 1532.5,979.6 1533.6,968.9 1534.8,975.2 1535.9,939.0 1537.1,944.2 1538.2,979.3 1539.4,975.4 1540.5,946.2 1541.7,940.9 1542.8,940.5 1544.0,952.0 1545.1,972.8 1546.3,965.3 1547.4,974.8 1548.6,947.7 1549.8,957.9 1550.9,964.4 1552.0,969.6 1553.2,975.2 1554.3,968.0 1555.5,976.2 1556.6,984.0 1557.8,975.6 1558.9,949.3 1560.1,950.2 1561.2,947.8 1562.4,981.8 1563.5,979.3 1564.7,968.3 1565.8,956.2 1567.0,953.3 1568.1,982.0 1569.3,965.7 1570.4,955.4 1571.6,950.3 1572.8,969.8 1573.9,938.5 1575.0,949.4 1576.2,968.8 1577.3,976.4 1578.5,975.0 1579.6,962.0 1580.8,974.9 1581.9,990.0 1583.1,958.0 1584.2,950.2 1585.4,955.0 1586.5,962.8 1587.7,955.9 1588.8,952.5 1590.0,928.6 1591.1,967.3 1592.3,949.5 1593.4,960.4 1594.6,955.4 1595.8,971.4 1596.9,948.0 1598.0,943.6 1599.2,959.6 1600.3,963.5 1601.5,956.5 1602.6,967.3 1603.8,957.3 1604.9,956.9 1606.1,944.9 1607.2,958.5 1608.4,975.3 1609.5,964.3 1610.7,962.8 1611.8,977.0 1613.0,961.0 1614.1,953.6 1615.3,962.4 1616.4,986.9 1617.6,963.8 1618.8,962.6 1619.9,967.8 1621.0,958.3 1622.2,956.9 1623.3,980.0 1624.5,943.1 1625.6,965.4 1626.8,977.2 1627.9,984.6 1629.1,972.1 1630.2,972.5 1631.4,957.7 1632.5,937.6 1633.7,960.2 1634.8,965.3 1636.0,970.1 1637.1,984.0 1638.3,1004.8 1639.4,981.2 1640.6,992.6 1641.8,973.8 1642.9,971.2 1644.0,951.7 1645.2,964.4 1646.3,955.3 1647.5,964.7 1648.6,944.6 1649.8,974.8 1650.9,945.1 1652.1,966.0 1653.2,935.1 1654.4,956.5 1655.5,965.7 1656.7,976.1 1657.8,988.7 1659.0,952.6 1660.1,959.0 1661.3,959.2 1662.4,963.2 1663.6,981.0 1664.8,959.4 1665.9,947.6 1667.0,950.8 1668.2,973.2 1669.3,954.9 1670.5,935.5 1671.6,950.2 1672.8,977.1 1673.9,989.6 1675.1,960.7 1676.2,953.5 1677.4,972.0 1678.5,980.4 1679.7,967.7 1680.8,965.7 1682.0,975.5 1683.1,944.5 1684.3,979.6 1685.4,952.8 1686.6,933.5 1687.8,974.8 1688.9,967.3 1690.0,976.3 1691.2,944.8 1692.3,963.5 1693.5,968.0 1694.6,967.9 1695.8,967.2 1696.9,963.6 1698.1,963.0 1699.2,946.8 1700.4,988.4 1701.5,962.6 1702.7,945.2 1703.8,963.4 1705.0,960.0 1706.1,951.9 1707.3,1006.6 1708.4,980.2 1709.6,942.1 1710.8,951.2 1711.9,954.9 1713.0,960.3 1714.2,971.8 1715.3,972.5 1716.5,993.0 1717.6,965.2 1718.8,959.9 1719.9,978.7 1721.1,985.1 1722.2,965.7 1723.4,956.9 1724.5,979.0 1725.7,977.2 1726.8,984.3 1728.0,985.4 1729.1,977.2 1730.3,970.5 1731.4,968.3 1732.6,965.6 1733.8,946.6 1734.9,967.8 1736.0,977.7 1737.2,978.2 1738.3,958.3 1739.5,960.1 1740.6,980.0 1741.8,984.4" fill="none" stroke="#4a6ee6" stroke-width="1.35" stroke-linejoin="round"/><polygon points="348.0,689.6 349.1,686.4 350.3,671.3 351.4,661.7 352.6,682.0 353.8,674.2 354.9,676.7 356.1,676.5 357.2,679.8 358.4,689.8 359.5,689.1 360.6,676.8 361.8,693.4 362.9,713.6 364.1,708.6 365.2,691.3 366.4,734.4 367.6,708.0 368.7,719.2 369.9,712.8 371.0,727.9 372.1,720.4 373.3,713.0 374.4,733.5 375.6,740.5 376.8,717.5 377.9,715.6 379.1,710.6 380.2,741.4 381.4,741.2 382.5,744.9 383.6,756.9 384.8,765.9 385.9,750.2 387.1,749.4 388.2,745.5 389.4,745.8 390.6,748.3 391.7,746.2 392.9,752.6 394.0,770.7 395.1,742.6 396.3,763.9 397.4,757.2 398.6,756.1 399.8,737.1 400.9,725.2 402.1,750.3 403.2,748.4 404.4,757.4 405.5,760.8 406.6,752.1 407.8,769.0 408.9,792.9 410.1,796.1 411.2,791.7 412.4,784.5 413.6,772.3 414.7,779.8 415.9,770.7 417.0,774.6 418.1,770.0 419.3,828.5 420.4,812.5 421.6,806.6 422.8,791.0 423.9,784.5 425.1,784.4 426.2,775.9 427.4,783.4 428.5,777.3 429.6,781.1 430.8,787.7 431.9,804.4 433.1,797.3 434.2,788.2 435.4,770.9 436.6,786.5 437.7,810.9 438.9,809.6 440.0,804.7 441.1,807.9 442.3,805.4 443.4,795.2 444.6,805.8 445.8,818.1 446.9,820.7 448.1,815.4 449.2,824.9 450.4,801.1 451.5,829.4 452.6,806.5 453.8,808.6 454.9,829.5 456.1,827.4 457.2,821.8 458.4,827.3 459.6,814.5 460.7,832.7 461.9,857.5 463.0,836.5 464.1,826.1 465.3,826.9 466.4,844.8 467.6,853.2 468.8,839.7 469.9,823.0 471.1,834.3 472.2,829.1 473.4,814.5 474.5,849.9 475.6,836.7 476.8,853.8 477.9,823.4 479.1,834.4 480.2,821.8 481.4,845.5 482.5,848.3 483.7,818.7 484.9,806.0 486.0,817.3 487.1,816.4 488.3,849.0 489.4,854.9 490.6,855.9 491.8,847.4 492.9,866.3 494.0,860.5 495.2,867.4 496.4,847.7 497.5,865.8 498.6,863.1 499.8,859.0 500.9,869.5 502.1,847.8 503.2,825.5 504.4,839.6 505.5,857.4 506.7,850.7 507.9,855.1 509.0,869.7 510.1,853.2 511.3,866.8 512.5,861.1 513.6,885.4 514.8,883.7 515.9,866.3 517.0,861.7 518.2,859.7 519.4,850.8 520.5,843.7 521.6,833.5 522.8,857.6 524.0,870.1 525.1,865.0 526.2,865.5 527.4,862.7 528.5,881.0 529.7,887.8 530.9,883.4 532.0,880.1 533.1,847.3 534.3,864.8 535.5,852.3 536.6,845.0 537.8,855.8 538.9,847.9 540.0,837.0 541.2,860.2 542.4,876.5 543.5,868.2 544.6,872.3 545.8,881.7 547.0,894.4 548.1,869.2 549.2,863.5 550.4,868.0 551.5,878.7 552.7,882.4 553.9,880.2 555.0,888.2 556.1,894.1 557.3,895.2 558.5,873.3 559.6,879.8 560.8,875.7 561.9,872.6 563.0,879.6 564.2,875.7 565.4,878.9 566.5,881.0 567.6,907.1 568.8,889.2 570.0,886.0 571.1,879.6 572.2,884.8 573.4,890.0 574.5,878.3 575.7,895.9 576.9,881.5 578.0,876.0 579.1,878.0 580.3,881.8 581.5,885.7 582.6,894.4 583.8,878.7 584.9,891.7 586.0,906.9 587.2,916.7 588.4,899.8 589.5,889.2 590.6,888.7 591.8,909.1 593.0,909.7 594.1,893.5 595.2,900.5 596.4,900.5 597.5,902.8 598.7,902.5 599.9,896.6 601.0,902.8 602.1,916.2 603.3,924.0 604.5,900.4 605.6,906.3 606.8,910.8 607.9,900.7 609.0,901.6 610.2,905.5 611.3,910.2 612.5,916.0 613.6,898.2 614.8,914.2 616.0,891.4 617.1,911.6 618.2,910.2 619.4,905.3 620.5,901.5 621.7,891.8 622.8,900.0 624.0,903.5 625.1,915.3 626.3,903.7 627.5,897.2 628.6,915.2 629.8,922.1 630.9,919.2 632.0,918.0 633.2,906.5 634.3,914.2 635.5,902.8 636.6,907.9 637.8,904.4 639.0,887.8 640.1,905.9 641.2,886.9 642.4,897.2 643.5,921.3 644.7,919.6 645.8,894.6 647.0,888.1 648.1,907.8 649.3,899.5 650.5,917.9 651.6,914.1 652.8,903.0 653.9,926.2 655.0,904.6 656.2,889.2 657.3,894.8 658.5,916.9 659.6,896.2 660.8,904.7 662.0,895.9 663.1,912.2 664.2,918.9 665.4,923.8 666.5,918.8 667.7,919.0 668.8,931.5 670.0,922.9 671.1,911.9 672.3,907.7 673.5,905.0 674.6,922.4 675.8,916.3 676.9,922.0 678.0,930.3 679.2,907.5 680.3,913.4 681.5,907.2 682.6,913.7 683.8,915.7 685.0,929.3 686.1,925.1 687.2,926.8 688.4,906.5 689.5,904.7 690.7,914.7 691.8,921.9 693.0,924.8 694.1,920.2 695.3,936.2 696.5,917.7 697.6,943.0 698.8,938.1 699.9,917.6 701.0,928.9 702.2,923.1 703.3,912.0 704.5,913.1 705.6,923.7 706.8,900.2 708.0,889.8 709.1,914.5 710.2,938.4 711.4,917.3 712.5,910.7 713.7,926.6 714.8,926.0 716.0,933.3 717.1,936.2 718.3,921.3 719.5,930.4 720.6,917.4 721.8,909.5 722.9,907.8 724.0,929.1 725.2,912.4 726.3,919.2 727.5,922.9 728.6,922.1 729.8,905.5 731.0,928.6 732.1,912.0 733.2,917.6 734.4,909.7 735.5,918.6 736.7,926.3 737.8,927.0 739.0,912.8 740.1,917.6 741.3,906.8 742.5,917.7 743.6,915.1 744.8,915.2 745.9,912.3 747.0,908.5 748.2,909.1 749.3,907.6 750.5,915.9 751.6,893.9 752.8,900.7 754.0,915.5 755.1,922.6 756.2,932.5 757.4,919.9 758.5,926.1 759.7,925.2 760.8,903.1 762.0,901.3 763.1,918.6 764.3,910.1 765.5,910.8 766.6,910.1 767.8,919.4 768.9,925.9 770.0,927.1 771.2,917.3 772.3,915.3 773.5,911.6 774.6,919.9 775.8,920.7 777.0,897.5 778.1,912.9 779.2,905.2 780.4,926.8 781.5,926.4 782.7,918.3 783.8,910.6 785.0,918.0 786.1,920.4 787.3,929.0 788.5,949.9 789.6,921.7 790.8,909.5 791.9,915.0 793.0,924.1 794.2,899.5 795.3,907.9 796.5,907.4 797.6,916.8 798.8,915.6 800.0,916.4 801.1,919.4 802.2,924.9 803.4,901.0 804.5,899.7 805.7,927.7 806.8,913.6 808.0,904.6 809.1,930.2 810.3,921.9 811.5,926.4 812.6,919.6 813.8,933.9 814.9,923.6 816.0,928.2 817.2,932.6 818.3,935.4 819.5,913.1 820.6,909.3 821.8,891.5 823.0,896.4 824.1,914.0 825.2,912.6 826.4,924.0 827.5,911.0 828.7,914.6 829.8,908.4 831.0,923.2 832.1,916.4 833.3,927.5 834.5,922.2 835.6,915.5 836.8,929.2 837.9,911.8 839.0,900.2 840.2,923.4 841.3,908.9 842.5,905.9 843.6,922.4 844.8,901.7 846.0,906.1 847.1,905.8 848.2,893.3 849.4,906.9 850.5,923.8 851.7,908.3 852.8,926.2 854.0,934.4 855.1,915.6 856.3,913.0 857.5,922.5 858.6,943.0 859.8,916.8 860.9,932.3 862.0,902.6 863.2,897.1 864.3,903.2 865.5,910.5 866.6,909.3 867.8,882.6 868.9,900.7 870.1,895.0 871.2,916.5 872.4,929.5 873.5,932.5 874.7,904.9 875.8,931.3 877.0,908.4 878.1,911.1 879.3,912.4 880.4,923.7 881.6,923.1 882.8,900.3 883.9,897.3 885.0,896.0 886.2,915.1 887.3,923.1 888.5,930.1 889.6,914.1 890.8,919.5 891.9,907.5 893.1,912.1 894.2,913.6 895.4,928.0 896.5,925.4 897.7,923.2 898.8,912.7 900.0,897.4 901.1,914.8 902.3,919.6 903.4,916.7 904.6,945.7 905.8,927.1 906.9,905.8 908.0,927.5 909.2,926.2 910.3,930.0 911.5,922.6 912.6,928.5 913.8,910.6 914.9,895.8 916.1,888.7 917.2,915.6 918.4,927.8 919.5,930.2 920.7,926.4 921.8,921.9 923.0,922.5 924.1,924.9 925.3,921.6 926.4,940.5 927.6,926.6 928.8,916.1 929.9,915.5 931.0,926.6 932.2,908.9 933.3,912.9 934.5,919.2 935.6,907.8 936.8,896.0 937.9,908.8 939.1,918.5 940.2,913.5 941.4,915.1 942.5,898.6 943.7,909.0 944.8,910.8 946.0,915.0 947.1,924.8 948.3,928.5 949.4,913.7 950.6,898.4 951.8,911.5 952.9,896.6 954.0,906.3 955.2,903.6 956.3,915.6 957.5,917.6 958.6,928.3 959.8,933.0 960.9,928.4 962.1,927.9 963.2,929.6 964.4,911.2 965.5,896.2 966.7,898.5 967.8,903.0 969.0,912.2 970.1,926.7 971.3,929.8 972.4,924.8 973.6,914.3 974.8,920.0 975.9,938.8 977.0,931.6 978.2,923.3 979.3,915.6 980.5,926.6 981.6,910.7 982.8,909.7 983.9,899.6 985.1,910.1 986.2,911.2 987.4,924.8 988.5,908.0 989.7,903.7 990.8,884.6 992.0,903.5 993.1,911.7 994.3,912.5 995.4,932.0 996.6,910.1 997.8,910.9 998.9,894.4 1000.0,908.4 1001.2,918.6 1002.3,923.9 1003.5,914.6 1004.6,927.7 1005.8,912.7 1006.9,913.5 1008.1,904.8 1009.2,921.8 1010.4,924.6 1011.5,925.3 1012.7,933.6 1013.8,922.7 1015.0,924.4 1016.1,930.0 1017.3,920.5 1018.4,924.5 1019.6,928.9 1020.8,907.4 1021.9,929.3 1023.0,923.9 1024.2,927.0 1025.3,919.5 1026.5,905.9 1027.7,919.2 1028.8,907.4 1029.9,937.9 1031.1,922.0 1032.2,927.6 1033.4,904.5 1034.5,918.6 1035.7,918.4 1036.8,916.4 1038.0,915.3 1039.2,915.8 1040.3,910.2 1041.4,925.7 1042.6,913.0 1043.8,916.6 1044.9,914.4 1046.0,906.2 1047.2,893.6 1048.3,896.6 1049.5,912.8 1050.7,892.8 1051.8,912.8 1052.9,924.2 1054.1,910.4 1055.2,910.9 1056.4,911.4 1057.5,917.8 1058.7,901.5 1059.8,931.3 1061.0,915.4 1062.2,920.3 1063.3,916.6 1064.4,919.4 1065.6,916.6 1066.8,911.4 1067.9,894.5 1069.0,893.7 1070.2,885.1 1071.3,908.7 1072.5,906.9 1073.7,912.2 1074.8,908.6 1075.9,915.6 1077.1,909.8 1078.2,908.0 1079.4,910.7 1080.5,910.3 1081.7,910.4 1082.8,933.4 1084.0,915.6 1085.2,902.3 1086.3,907.8 1087.4,921.6 1088.6,914.6 1089.8,914.5 1090.9,921.7 1092.0,911.4 1093.2,918.0 1094.3,923.8 1095.5,915.6 1096.7,920.8 1097.8,920.2 1098.9,909.9 1100.1,893.3 1101.2,897.3 1102.4,907.6 1103.5,914.8 1104.7,917.8 1105.8,901.9 1107.0,907.8 1108.2,913.3 1109.3,924.2 1110.4,897.6 1111.6,906.5 1112.8,934.3 1113.9,919.3 1115.0,918.5 1116.2,918.0 1117.3,916.8 1118.5,923.4 1119.7,924.5 1120.8,909.8 1121.9,909.9 1123.1,927.6 1124.2,905.5 1125.4,921.4 1126.5,911.1 1127.7,907.2 1128.8,912.8 1130.0,923.8 1131.2,925.7 1132.3,921.7 1133.4,922.1 1134.6,904.8 1135.8,914.7 1136.9,919.7 1138.0,911.2 1139.2,918.3 1140.3,915.3 1141.5,912.7 1142.7,916.5 1143.8,923.8 1144.9,915.5 1146.1,914.9 1147.2,919.3 1148.4,930.2 1149.5,910.2 1150.7,920.5 1151.8,933.0 1153.0,935.6 1154.2,944.2 1155.3,924.9 1156.4,915.1 1157.6,923.1 1158.8,936.0 1159.9,909.0 1161.0,905.6 1162.2,923.7 1163.3,931.2 1164.5,936.8 1165.7,921.1 1166.8,925.6 1167.9,918.2 1169.1,906.3 1170.2,921.6 1171.4,929.5 1172.5,912.9 1173.7,920.2 1174.8,917.7 1176.0,905.6 1177.2,924.3 1178.3,927.1 1179.4,903.2 1180.6,920.1 1181.8,913.1 1182.9,929.0 1184.0,916.9 1185.2,927.4 1186.3,913.2 1187.5,932.3 1188.7,925.6 1189.8,932.3 1190.9,928.3 1192.1,904.3 1193.2,911.7 1194.4,909.5 1195.5,894.6 1196.7,931.5 1197.8,928.0 1199.0,932.2 1200.2,918.6 1201.3,922.6 1202.4,932.4 1203.6,910.3 1204.8,916.9 1205.9,932.4 1207.0,922.0 1208.2,914.7 1209.3,915.3 1210.5,912.0 1211.7,904.1 1212.8,929.5 1213.9,918.1 1215.1,901.9 1216.2,917.6 1217.4,936.1 1218.5,920.3 1219.7,911.7 1220.8,911.6 1222.0,916.6 1223.2,924.8 1224.3,915.1 1225.4,940.6 1226.6,917.4 1227.8,916.3 1228.9,921.6 1230.0,931.6 1231.2,939.1 1232.3,919.5 1233.5,924.1 1234.7,910.4 1235.8,917.8 1236.9,929.0 1238.1,917.8 1239.2,911.5 1240.4,927.4 1241.5,924.5 1242.7,926.9 1243.8,923.4 1245.0,926.3 1246.2,921.3 1247.3,905.1 1248.4,903.0 1249.6,915.7 1250.8,908.7 1251.9,924.6 1253.0,919.4 1254.2,923.3 1255.3,923.4 1256.5,908.3 1257.7,908.5 1258.8,920.6 1259.9,924.3 1261.1,902.2 1262.2,910.5 1263.4,915.7 1264.5,914.1 1265.7,921.4 1266.8,915.3 1268.0,922.7 1269.2,912.8 1270.3,923.3 1271.4,939.5 1272.6,908.6 1273.8,918.9 1274.9,908.8 1276.0,909.6 1277.2,909.6 1278.3,906.9 1279.5,908.7 1280.7,930.5 1281.8,912.2 1282.9,913.2 1284.1,917.5 1285.2,919.9 1286.4,924.3 1287.5,920.1 1288.7,917.0 1289.8,911.1 1291.0,925.8 1292.2,935.2 1293.3,919.0 1294.4,905.4 1295.6,910.8 1296.8,914.4 1297.9,915.3 1299.0,928.9 1300.2,915.1 1301.3,920.8 1302.5,914.7 1303.7,925.9 1304.8,918.8 1305.9,906.9 1307.1,912.6 1308.2,921.2 1309.4,926.5 1310.5,932.3 1311.7,907.1 1312.8,918.8 1314.0,932.0 1315.2,899.0 1316.3,908.3 1317.4,904.8 1318.6,899.4 1319.8,911.1 1320.9,907.3 1322.0,925.9 1323.2,907.4 1324.3,918.9 1325.5,907.5 1326.7,909.9 1327.8,933.2 1328.9,921.8 1330.1,925.1 1331.2,938.0 1332.4,929.2 1333.5,927.2 1334.7,922.6 1335.8,935.4 1337.0,928.6 1338.2,917.4 1339.3,923.2 1340.4,880.7 1341.6,877.5 1342.8,897.3 1343.9,892.3 1345.0,904.7 1346.2,917.1 1347.3,914.7 1348.5,913.6 1349.7,946.9 1350.8,921.2 1351.9,905.9 1353.1,900.7 1354.2,897.4 1355.4,904.3 1356.5,900.9 1357.7,915.3 1358.8,922.1 1360.0,889.7 1361.2,892.7 1362.3,908.4 1363.4,910.4 1364.6,917.3 1365.8,910.9 1366.9,934.5 1368.0,937.9 1369.2,912.5 1370.3,923.0 1371.5,925.5 1372.6,924.8 1373.8,938.1 1374.9,911.3 1376.1,912.8 1377.2,893.1 1378.4,926.7 1379.5,908.8 1380.7,911.4 1381.8,916.8 1383.0,907.1 1384.1,912.0 1385.3,902.8 1386.4,911.4 1387.6,917.4 1388.8,931.4 1389.9,920.6 1391.0,920.4 1392.2,915.1 1393.3,908.0 1394.5,905.8 1395.6,896.5 1396.8,907.0 1397.9,903.9 1399.1,910.4 1400.2,914.9 1401.4,925.6 1402.5,923.0 1403.7,928.1 1404.8,918.3 1406.0,915.3 1407.1,918.0 1408.3,921.6 1409.4,909.6 1410.6,915.5 1411.8,910.4 1412.9,937.4 1414.0,921.3 1415.2,905.8 1416.3,922.5 1417.5,914.6 1418.6,914.8 1419.8,912.8 1420.9,907.4 1422.1,901.6 1423.2,911.7 1424.4,909.3 1425.5,908.1 1426.7,912.7 1427.8,927.6 1429.0,942.4 1430.1,933.3 1431.3,912.5 1432.4,929.9 1433.6,925.6 1434.8,916.3 1435.9,916.8 1437.0,922.2 1438.2,911.9 1439.3,912.7 1440.5,927.9 1441.6,921.3 1442.8,915.9 1443.9,899.5 1445.1,926.2 1446.2,938.1 1447.4,943.9 1448.5,924.9 1449.7,910.7 1450.8,905.6 1452.0,906.8 1453.1,906.4 1454.3,901.5 1455.4,893.9 1456.6,923.1 1457.8,923.2 1458.9,920.1 1460.0,926.0 1461.2,930.4 1462.3,923.2 1463.5,923.7 1464.6,925.3 1465.8,910.4 1466.9,911.2 1468.1,922.6 1469.2,923.9 1470.4,926.8 1471.5,920.9 1472.7,907.4 1473.8,888.0 1475.0,907.7 1476.1,914.7 1477.3,894.4 1478.4,914.5 1479.6,903.2 1480.8,919.3 1481.9,906.6 1483.0,908.7 1484.2,912.0 1485.3,920.2 1486.5,929.4 1487.6,912.9 1488.8,917.0 1489.9,921.3 1491.1,927.0 1492.2,932.5 1493.4,917.9 1494.5,900.6 1495.7,906.5 1496.8,908.5 1498.0,914.0 1499.1,921.0 1500.3,916.3 1501.4,908.4 1502.6,913.0 1503.8,914.3 1504.9,903.2 1506.0,904.0 1507.2,910.8 1508.3,930.1 1509.5,921.1 1510.6,925.2 1511.8,896.5 1512.9,895.2 1514.1,900.0 1515.2,915.5 1516.4,900.4 1517.5,911.3 1518.7,918.4 1519.8,929.3 1521.0,920.0 1522.1,922.8 1523.3,924.8 1524.4,893.6 1525.6,907.2 1526.8,902.9 1527.9,894.4 1529.0,916.9 1530.2,917.7 1531.3,912.5 1532.5,919.6 1533.6,894.8 1534.8,901.7 1535.9,920.4 1537.1,916.6 1538.2,921.0 1539.4,908.4 1540.5,894.1 1541.7,894.3 1542.8,939.1 1544.0,935.7 1545.1,929.6 1546.3,917.4 1547.4,913.3 1548.6,926.4 1549.8,923.8 1550.9,929.0 1552.0,933.6 1553.2,924.3 1554.3,931.6 1555.5,927.4 1556.6,911.0 1557.8,923.2 1558.9,913.4 1560.1,935.1 1561.2,902.7 1562.4,927.4 1563.5,932.8 1564.7,912.6 1565.8,910.3 1567.0,910.6 1568.1,926.3 1569.3,910.6 1570.4,925.9 1571.6,898.5 1572.8,898.4 1573.9,900.2 1575.0,914.4 1576.2,922.4 1577.3,911.6 1578.5,902.3 1579.6,918.0 1580.8,940.4 1581.9,910.3 1583.1,929.0 1584.2,924.1 1585.4,925.3 1586.5,921.1 1587.7,923.2 1588.8,923.2 1590.0,929.3 1591.1,911.4 1592.3,914.2 1593.4,931.6 1594.6,924.5 1595.8,912.0 1596.9,918.2 1598.0,925.6 1599.2,926.0 1600.3,913.3 1601.5,931.9 1602.6,927.2 1603.8,915.6 1604.9,910.0 1606.1,918.4 1607.2,902.7 1608.4,919.0 1609.5,895.6 1610.7,920.5 1611.8,939.0 1613.0,923.7 1614.1,902.5 1615.3,909.5 1616.4,912.0 1617.6,914.0 1618.8,919.3 1619.9,929.8 1621.0,916.9 1622.2,924.9 1623.3,919.2 1624.5,903.6 1625.6,901.5 1626.8,913.7 1627.9,913.3 1629.1,916.1 1630.2,935.7 1631.4,930.9 1632.5,927.5 1633.7,920.1 1634.8,912.4 1636.0,918.5 1637.1,916.9 1638.3,914.9 1639.4,919.0 1640.6,915.5 1641.8,925.7 1642.9,924.4 1644.0,919.7 1645.2,923.2 1646.3,921.8 1647.5,902.0 1648.6,919.9 1649.8,938.0 1650.9,934.1 1652.1,919.8 1653.2,902.1 1654.4,906.2 1655.5,910.7 1656.7,915.8 1657.8,915.0 1659.0,894.9 1660.1,920.4 1661.3,921.6 1662.4,922.6 1663.6,908.5 1664.8,902.5 1665.9,921.6 1667.0,938.5 1668.2,928.3 1669.3,921.8 1670.5,918.6 1671.6,912.3 1672.8,917.3 1673.9,906.8 1675.1,905.8 1676.2,935.6 1677.4,932.4 1678.5,910.5 1679.7,899.6 1680.8,912.9 1682.0,913.1 1683.1,906.6 1684.3,910.3 1685.4,915.9 1686.6,917.8 1687.8,915.9 1688.9,926.3 1690.0,921.8 1691.2,929.7 1692.3,919.9 1693.5,926.0 1694.6,925.8 1695.8,947.2 1696.9,935.8 1698.1,920.9 1699.2,924.9 1700.4,925.0 1701.5,918.4 1702.7,911.1 1703.8,914.3 1705.0,927.1 1706.1,934.6 1707.3,906.6 1708.4,915.6 1709.6,918.9 1710.8,913.7 1711.9,909.5 1713.0,910.7 1714.2,910.2 1715.3,912.8 1716.5,915.1 1717.6,925.6 1718.8,924.4 1719.9,921.1 1721.1,920.7 1722.2,906.1 1723.4,913.4 1724.5,919.3 1725.7,924.4 1726.8,928.1 1728.0,914.1 1729.1,909.4 1730.3,918.4 1731.4,907.9 1732.6,918.3 1733.8,912.6 1734.9,926.5 1736.0,925.1 1737.2,919.0 1738.3,914.6 1739.5,916.0 1740.6,907.0 1741.8,918.3 1741.8,929.0 1740.6,923.5 1739.5,926.3 1738.3,934.6 1737.2,939.2 1736.0,941.5 1734.9,941.1 1733.8,922.8 1732.6,929.1 1731.4,921.2 1730.3,934.8 1729.1,923.8 1728.0,932.1 1726.8,939.9 1725.7,945.9 1724.5,928.4 1723.4,924.2 1722.2,921.1 1721.1,930.6 1719.9,934.7 1718.8,934.7 1717.6,935.6 1716.5,926.4 1715.3,919.6 1714.2,919.8 1713.0,923.9 1711.9,929.0 1710.8,929.7 1709.6,932.0 1708.4,935.7 1707.3,922.5 1706.1,949.4 1705.0,936.3 1703.8,929.8 1702.7,926.6 1701.5,933.1 1700.4,935.6 1699.2,938.3 1698.1,943.1 1696.9,949.8 1695.8,954.9 1694.6,934.1 1693.5,935.7 1692.3,935.7 1691.2,944.0 1690.0,940.8 1688.9,941.1 1687.8,933.7 1686.6,939.5 1685.4,928.0 1684.3,926.6 1683.1,922.7 1682.0,922.6 1680.8,935.0 1679.7,918.7 1678.5,928.5 1677.4,941.5 1676.2,948.7 1675.1,918.0 1673.9,922.9 1672.8,929.9 1671.6,922.7 1670.5,927.4 1669.3,932.3 1668.2,944.2 1667.0,949.5 1665.9,932.6 1664.8,916.6 1663.6,924.2 1662.4,932.0 1661.3,933.1 1660.1,931.2 1659.0,905.3 1657.8,930.6 1656.7,925.8 1655.5,923.9 1654.4,918.0 1653.2,913.6 1652.1,937.9 1650.9,944.6 1649.8,950.8 1648.6,931.5 1647.5,914.9 1646.3,929.0 1645.2,947.2 1644.0,931.8 1642.9,938.5 1641.8,936.9 1640.6,927.5 1639.4,928.8 1638.3,929.0 1637.1,933.6 1636.0,927.6 1634.8,928.9 1633.7,930.7 1632.5,943.9 1631.4,943.8 1630.2,942.6 1629.1,940.2 1627.9,920.8 1626.8,929.4 1625.6,908.3 1624.5,927.0 1623.3,931.6 1622.2,935.9 1621.0,936.6 1619.9,943.4 1618.8,938.6 1617.6,926.1 1616.4,919.8 1615.3,928.3 1614.1,921.1 1613.0,936.5 1611.8,950.6 1610.7,931.2 1609.5,911.3 1608.4,930.1 1607.2,919.1 1606.1,933.6 1604.9,921.1 1603.8,923.9 1602.6,938.0 1601.5,940.0 1600.3,929.6 1599.2,946.1 1598.0,938.2 1596.9,927.7 1595.8,933.7 1594.6,934.3 1593.4,938.7 1592.3,927.2 1591.1,936.8 1590.0,939.4 1588.8,931.6 1587.7,936.7 1586.5,932.5 1585.4,940.9 1584.2,936.2 1583.1,947.4 1581.9,923.0 1580.8,951.1 1579.6,933.5 1578.5,923.6 1577.3,927.2 1576.2,935.5 1575.0,926.1 1573.9,908.6 1572.8,912.7 1571.6,911.2 1570.4,935.9 1569.3,927.8 1568.1,941.5 1567.0,921.3 1565.8,925.9 1564.7,931.3 1563.5,945.0 1562.4,940.5 1561.2,928.0 1560.1,944.8 1558.9,928.0 1557.8,933.5 1556.6,934.0 1555.5,948.8 1554.3,941.8 1553.2,932.0 1552.0,947.1 1550.9,938.5 1549.8,939.4 1548.6,940.9 1547.4,925.4 1546.3,934.7 1545.1,938.6 1544.0,945.8 1542.8,946.9 1541.7,903.6 1540.5,901.5 1539.4,914.9 1538.2,932.2 1537.1,922.9 1535.9,933.5 1534.8,918.1 1533.6,905.5 1532.5,932.3 1531.3,919.5 1530.2,927.7 1529.0,924.1 1527.9,913.0 1526.8,916.7 1525.6,923.1 1524.4,918.0 1523.3,933.8 1522.1,931.4 1521.0,929.1 1519.8,945.7 1518.7,930.0 1517.5,923.7 1516.4,911.9 1515.2,932.9 1514.1,914.4 1512.9,910.3 1511.8,906.7 1510.6,940.6 1509.5,929.3 1508.3,940.4 1507.2,920.3 1506.0,918.1 1504.9,912.8 1503.8,921.7 1502.6,922.7 1501.4,932.6 1500.3,928.8 1499.1,932.8 1498.0,927.9 1496.8,925.3 1495.7,913.0 1494.5,914.7 1493.4,929.2 1492.2,944.9 1491.1,940.6 1489.9,929.1 1488.8,929.4 1487.6,921.5 1486.5,942.0 1485.3,928.5 1484.2,923.1 1483.0,926.9 1481.9,923.6 1480.8,931.3 1479.6,914.5 1478.4,924.2 1477.3,904.4 1476.1,931.2 1475.0,916.1 1473.8,909.8 1472.7,924.4 1471.5,933.2 1470.4,944.0 1469.2,933.4 1468.1,938.0 1466.9,918.6 1465.8,920.3 1464.6,942.6 1463.5,933.3 1462.3,937.0 1461.2,944.7 1460.0,933.6 1458.9,932.8 1457.8,932.8 1456.6,937.8 1455.4,915.4 1454.3,914.4 1453.1,920.0 1452.0,927.8 1450.8,919.7 1449.7,919.8 1448.5,934.2 1447.4,962.0 1446.2,951.1 1445.1,938.1 1443.9,916.0 1442.8,930.7 1441.6,929.8 1440.5,938.0 1439.3,923.0 1438.2,923.1 1437.0,932.3 1435.9,930.7 1434.8,935.8 1433.6,934.7 1432.4,938.5 1431.3,928.7 1430.1,942.8 1429.0,953.8 1427.8,943.0 1426.7,929.0 1425.5,926.1 1424.4,922.5 1423.2,924.2 1422.1,911.0 1420.9,918.9 1419.8,921.3 1418.6,934.1 1417.5,927.3 1416.3,929.2 1415.2,913.6 1414.0,927.2 1412.9,948.7 1411.8,922.6 1410.6,925.1 1409.4,930.2 1408.3,933.1 1407.1,936.2 1406.0,925.6 1404.8,928.3 1403.7,935.1 1402.5,933.3 1401.4,941.7 1400.2,925.2 1399.1,918.3 1397.9,917.2 1396.8,919.6 1395.6,908.0 1394.5,919.4 1393.3,916.3 1392.2,924.6 1391.0,932.4 1389.9,934.1 1388.8,944.1 1387.6,934.8 1386.4,920.7 1385.3,918.4 1384.1,930.3 1383.0,925.8 1381.8,926.0 1380.7,925.7 1379.5,919.0 1378.4,933.0 1377.2,903.6 1376.1,925.1 1374.9,921.8 1373.8,946.9 1372.6,938.9 1371.5,945.4 1370.3,935.8 1369.2,924.2 1368.0,955.0 1366.9,943.0 1365.8,927.9 1364.6,932.3 1363.4,923.6 1362.3,914.7 1361.2,905.8 1360.0,901.2 1358.8,935.1 1357.7,932.5 1356.5,918.0 1355.4,913.4 1354.2,909.6 1353.1,916.9 1351.9,919.2 1350.8,929.8 1349.7,954.0 1348.5,926.4 1347.3,936.9 1346.2,932.2 1345.0,914.3 1343.9,911.1 1342.8,907.8 1341.6,892.2 1340.4,897.7 1339.3,930.8 1338.2,925.2 1337.0,945.3 1335.8,942.5 1334.7,936.9 1333.5,938.8 1332.4,941.8 1331.2,953.7 1330.1,932.2 1328.9,936.5 1327.8,946.0 1326.7,923.6 1325.5,922.7 1324.3,932.0 1323.2,924.8 1322.0,939.5 1320.9,928.6 1319.8,922.8 1318.6,909.7 1317.4,915.6 1316.3,927.9 1315.2,915.8 1314.0,941.1 1312.8,932.3 1311.7,919.7 1310.5,941.5 1309.4,945.2 1308.2,929.2 1307.1,923.7 1305.9,917.2 1304.8,928.5 1303.7,945.6 1302.5,928.8 1301.3,931.4 1300.2,930.0 1299.0,947.0 1297.9,923.2 1296.8,924.2 1295.6,922.8 1294.4,923.4 1293.3,925.7 1292.2,944.9 1291.0,933.3 1289.8,927.9 1288.7,928.9 1287.5,939.9 1286.4,937.9 1285.2,935.3 1284.1,932.4 1282.9,924.7 1281.8,928.8 1280.7,941.3 1279.5,923.4 1278.3,924.1 1277.2,921.7 1276.0,925.7 1274.9,915.8 1273.8,931.9 1272.6,916.3 1271.4,949.4 1270.3,936.6 1269.2,921.8 1268.0,930.7 1266.8,927.3 1265.7,932.7 1264.5,931.4 1263.4,925.5 1262.2,926.1 1261.1,911.6 1259.9,937.0 1258.8,930.5 1257.7,927.4 1256.5,920.6 1255.3,931.6 1254.2,932.6 1253.0,933.5 1251.9,934.9 1250.8,923.7 1249.6,928.3 1248.4,913.3 1247.3,923.5 1246.2,935.3 1245.0,940.3 1243.8,941.6 1242.7,935.3 1241.5,938.1 1240.4,938.0 1239.2,924.0 1238.1,939.5 1236.9,938.6 1235.8,925.3 1234.7,921.6 1233.5,939.9 1232.3,929.8 1231.2,952.7 1230.0,946.2 1228.9,932.8 1227.8,928.4 1226.6,937.4 1225.4,951.0 1224.3,930.4 1223.2,933.3 1222.0,928.0 1220.8,925.2 1219.7,924.1 1218.5,930.0 1217.4,949.3 1216.2,929.9 1215.1,917.1 1213.9,929.9 1212.8,940.6 1211.7,914.3 1210.5,926.3 1209.3,930.6 1208.2,923.6 1207.0,936.8 1205.9,943.3 1204.8,923.4 1203.6,920.5 1202.4,940.8 1201.3,941.0 1200.2,926.0 1199.0,944.8 1197.8,937.3 1196.7,941.7 1195.5,906.4 1194.4,928.7 1193.2,926.8 1192.1,916.2 1190.9,940.1 1189.8,945.5 1188.7,953.3 1187.5,943.6 1186.3,923.3 1185.2,937.9 1184.0,931.8 1182.9,943.9 1181.8,930.0 1180.6,928.0 1179.4,912.3 1178.3,950.2 1177.2,930.1 1176.0,920.4 1174.8,930.3 1173.7,932.6 1172.5,921.7 1171.4,943.3 1170.2,932.1 1169.1,913.5 1167.9,929.2 1166.8,933.9 1165.7,939.8 1164.5,952.8 1163.3,955.3 1162.2,938.8 1161.0,919.0 1159.9,929.2 1158.8,946.1 1157.6,932.5 1156.4,927.2 1155.3,934.5 1154.2,952.5 1153.0,948.6 1151.8,941.4 1150.7,928.8 1149.5,921.7 1148.4,944.7 1147.2,937.1 1146.1,926.0 1144.9,924.2 1143.8,930.5 1142.7,932.6 1141.5,923.3 1140.3,928.5 1139.2,929.8 1138.0,925.2 1136.9,938.1 1135.8,923.5 1134.6,921.8 1133.4,936.9 1132.3,931.5 1131.2,938.1 1130.0,931.1 1128.8,927.7 1127.7,920.2 1126.5,922.7 1125.4,929.7 1124.2,914.3 1123.1,939.5 1121.9,923.8 1120.8,917.4 1119.7,933.6 1118.5,933.9 1117.3,928.3 1116.2,932.6 1115.0,938.0 1113.9,930.4 1112.8,947.7 1111.6,919.7 1110.4,914.7 1109.3,933.7 1108.2,924.5 1107.0,919.9 1105.8,915.1 1104.7,927.5 1103.5,930.3 1102.4,920.6 1101.2,911.9 1100.1,907.5 1098.9,917.4 1097.8,941.2 1096.7,939.3 1095.5,926.2 1094.3,933.3 1093.2,931.5 1092.0,921.7 1090.9,928.4 1089.8,930.0 1088.6,924.0 1087.4,936.7 1086.3,925.4 1085.2,921.7 1084.0,923.3 1082.8,941.5 1081.7,919.4 1080.5,921.6 1079.4,916.5 1078.2,923.9 1077.1,923.2 1075.9,928.1 1074.8,924.5 1073.7,921.8 1072.5,918.3 1071.3,916.0 1070.2,899.3 1069.0,904.5 1067.9,904.4 1066.8,925.5 1065.6,929.4 1064.4,935.2 1063.3,928.9 1062.2,933.2 1061.0,929.2 1059.8,940.3 1058.7,914.0 1057.5,930.9 1056.4,923.8 1055.2,923.1 1054.1,924.9 1052.9,933.4 1051.8,932.7 1050.7,904.0 1049.5,927.2 1048.3,915.5 1047.2,907.0 1046.0,922.6 1044.9,930.1 1043.8,933.1 1042.6,925.3 1041.4,938.9 1040.3,924.3 1039.2,924.7 1038.0,926.4 1036.8,932.1 1035.7,931.4 1034.5,935.9 1033.4,915.8 1032.2,937.5 1031.1,931.1 1029.9,953.8 1028.8,924.6 1027.7,932.0 1026.5,923.5 1025.3,936.7 1024.2,937.6 1023.0,932.1 1021.9,943.4 1020.8,920.6 1019.6,941.7 1018.4,940.0 1017.3,931.8 1016.1,939.6 1015.0,937.7 1013.8,931.4 1012.7,949.5 1011.5,937.6 1010.4,935.6 1009.2,933.3 1008.1,926.2 1006.9,920.5 1005.8,927.2 1004.6,939.7 1003.5,926.0 1002.3,932.0 1001.2,929.4 1000.0,914.7 998.9,911.3 997.8,921.2 996.6,922.6 995.4,945.2 994.3,927.3 993.1,925.9 992.0,918.0 990.8,896.8 989.7,912.9 988.5,920.1 987.4,936.7 986.2,924.7 985.1,927.5 983.9,911.4 982.8,918.7 981.6,918.8 980.5,936.7 979.3,928.2 978.2,938.3 977.0,947.4 975.9,957.6 974.8,935.1 973.6,923.6 972.4,934.9 971.3,949.4 970.1,935.3 969.0,929.7 967.8,911.3 966.7,909.9 965.5,910.0 964.4,920.7 963.2,943.2 962.1,943.4 960.9,945.6 959.8,944.4 958.6,944.4 957.5,933.7 956.3,925.1 955.2,913.0 954.0,920.6 952.9,905.1 951.8,923.0 950.6,912.0 949.4,919.7 948.3,941.6 947.1,936.2 946.0,929.4 944.8,923.2 943.7,920.7 942.5,907.9 941.4,924.5 940.2,926.7 939.1,926.3 937.9,920.8 936.8,913.1 935.6,923.7 934.5,930.3 933.3,926.0 932.2,926.9 931.0,936.2 929.9,924.0 928.8,933.1 927.6,938.4 926.4,950.6 925.3,936.5 924.1,946.3 923.0,933.0 921.8,931.2 920.7,935.6 919.5,939.8 918.4,942.0 917.2,930.6 916.1,895.3 914.9,911.8 913.8,919.5 912.6,938.6 911.5,937.3 910.3,939.1 909.2,939.4 908.0,940.7 906.9,924.1 905.8,946.3 904.6,954.0 903.4,934.8 902.3,934.0 901.1,926.9 900.0,909.2 898.8,927.2 897.7,931.4 896.5,944.4 895.4,940.0 894.2,922.2 893.1,920.2 891.9,914.5 890.8,931.7 889.6,922.8 888.5,944.3 887.3,935.5 886.2,924.6 885.0,906.9 883.9,912.5 882.8,918.2 881.6,932.7 880.4,931.2 879.3,921.3 878.1,927.1 877.0,925.7 875.8,939.3 874.7,912.6 873.5,940.2 872.4,945.0 871.2,940.3 870.1,909.8 868.9,910.0 867.8,905.2 866.6,922.8 865.5,924.7 864.3,915.7 863.2,916.3 862.0,915.4 860.9,941.5 859.8,940.0 858.6,952.1 857.5,933.3 856.3,927.2 855.1,932.6 854.0,943.0 852.8,935.4 851.7,918.1 850.5,934.5 849.4,914.3 848.2,914.6 847.1,913.2 846.0,924.1 844.8,919.6 843.6,936.1 842.5,915.5 841.3,915.3 840.2,934.7 839.0,913.7 837.9,921.4 836.8,940.4 835.6,924.1 834.5,936.6 833.3,935.5 832.1,934.9 831.0,933.4 829.8,920.0 828.7,931.6 827.5,921.0 826.4,935.3 825.2,922.7 824.1,933.0 823.0,914.3 821.8,911.7 820.6,917.9 819.5,925.2 818.3,942.1 817.2,946.4 816.0,939.3 814.9,933.3 813.8,949.3 812.6,939.3 811.5,936.1 810.3,937.8 809.1,939.2 808.0,911.1 806.8,932.7 805.7,942.9 804.5,910.5 803.4,913.3 802.2,937.7 801.1,926.4 800.0,935.0 798.8,925.4 797.6,932.0 796.5,917.0 795.3,916.6 794.2,914.3 793.0,936.3 791.9,923.9 790.8,918.9 789.6,932.8 788.5,960.2 787.3,937.4 786.1,937.6 785.0,929.6 783.8,923.7 782.7,930.5 781.5,941.1 780.4,937.8 779.2,914.0 778.1,926.7 777.0,910.7 775.8,931.1 774.6,937.6 773.5,936.8 772.3,932.5 771.2,928.4 770.0,936.3 768.9,933.7 767.8,929.0 766.6,931.1 765.5,921.1 764.3,929.4 763.1,931.5 762.0,908.9 760.8,913.5 759.7,939.2 758.5,941.4 757.4,929.3 756.2,941.6 755.1,933.8 754.0,930.2 752.8,909.4 751.6,908.2 750.5,925.8 749.3,916.8 748.2,920.9 747.0,920.5 745.9,921.9 744.8,926.9 743.6,930.8 742.5,934.1 741.3,920.4 740.1,926.0 739.0,923.1 737.8,951.3 736.7,938.1 735.5,928.8 734.4,924.6 733.2,926.8 732.1,929.0 731.0,935.7 729.8,924.3 728.6,931.7 727.5,939.2 726.3,929.3 725.2,919.5 724.0,936.1 722.9,924.2 721.8,919.8 720.6,934.7 719.5,948.5 718.3,942.2 717.1,943.5 716.0,946.2 714.8,942.3 713.7,938.7 712.5,926.1 711.4,924.7 710.2,954.4 709.1,932.4 708.0,911.2 706.8,908.0 705.6,931.8 704.5,928.6 703.3,925.0 702.2,933.2 701.0,940.2 699.9,929.0 698.8,948.1 697.6,955.1 696.5,930.3 695.3,953.8 694.1,933.6 693.0,933.0 691.8,936.9 690.7,926.3 689.5,915.4 688.4,914.6 687.2,937.9 686.1,944.1 685.0,937.1 683.8,938.7 682.6,924.0 681.5,921.9 680.3,926.9 679.2,919.3 678.0,939.8 676.9,931.8 675.8,930.2 674.6,937.5 673.5,925.8 672.3,917.1 671.1,924.6 670.0,935.4 668.8,940.4 667.7,931.5 666.5,932.1 665.4,938.8 664.2,931.9 663.1,927.9 662.0,909.7 660.8,922.4 659.6,916.6 658.5,927.4 657.3,906.2 656.2,900.4 655.0,918.2 653.9,936.9 652.8,918.4 651.6,922.7 650.5,931.8 649.3,908.5 648.1,923.7 647.0,898.1 645.8,913.6 644.7,927.5 643.5,929.0 642.4,913.9 641.2,903.4 640.1,918.5 639.0,901.1 637.8,918.6 636.6,921.0 635.5,914.0 634.3,926.8 633.2,918.9 632.0,927.9 630.9,942.9 629.8,936.3 628.6,925.3 627.5,911.3 626.3,912.0 625.1,923.8 624.0,913.1 622.8,910.6 621.7,901.9 620.5,919.2 619.4,918.0 618.2,924.9 617.1,927.6 616.0,911.3 614.8,920.7 613.6,911.8 612.5,930.7 611.3,924.1 610.2,923.3 609.0,920.1 607.9,913.0 606.8,918.6 605.6,918.7 604.5,919.8 603.3,939.3 602.1,925.1 601.0,916.6 599.9,922.7 598.7,922.4 597.5,918.6 596.4,915.5 595.2,917.0 594.1,901.5 593.0,916.9 591.8,920.3 590.6,903.7 589.5,898.1 588.4,910.2 587.2,926.8 586.0,923.0 584.9,902.8 583.8,895.8 582.6,907.4 581.5,907.6 580.3,894.9 579.1,884.6 578.0,893.2 576.9,892.2 575.7,903.4 574.5,892.6 573.4,902.0 572.2,897.3 571.1,892.9 570.0,893.9 568.8,901.0 567.6,919.1 566.5,893.4 565.4,894.5 564.2,888.5 563.0,897.6 561.9,884.0 560.8,886.2 559.6,888.0 558.5,890.5 557.3,906.4 556.1,905.4 555.0,902.4 553.9,894.9 552.7,893.3 551.5,894.9 550.4,884.3 549.2,875.2 548.1,879.8 547.0,904.4 545.8,892.6 544.6,890.1 543.5,881.7 542.4,890.9 541.2,881.5 540.0,849.7 538.9,857.0 537.8,873.7 536.6,858.8 535.5,865.9 534.3,875.6 533.1,859.6 532.0,899.5 530.9,892.1 529.7,901.4 528.5,892.0 527.4,873.3 526.2,879.1 525.1,882.8 524.0,883.0 522.8,874.9 521.6,849.6 520.5,859.2 519.4,859.9 518.2,872.7 517.0,874.7 515.9,879.4 514.8,898.0 513.6,897.9 512.5,880.6 511.3,877.7 510.1,866.5 509.0,882.9 507.9,873.5 506.7,870.5 505.5,867.7 504.4,857.6 503.2,837.3 502.1,858.2 500.9,882.0 499.8,875.4 498.6,878.4 497.5,877.3 496.4,864.4 495.2,877.4 494.0,875.0 492.9,881.6 491.8,867.8 490.6,870.8 489.4,865.6 488.3,866.6 487.1,833.6 486.0,836.9 484.9,823.1 483.7,830.7 482.5,861.4 481.4,857.6 480.2,841.0 479.1,851.7 477.9,834.4 476.8,866.5 475.6,846.5 474.5,866.4 473.4,829.1 472.2,845.0 471.1,849.1 469.9,835.6 468.8,852.5 467.6,866.9 466.4,855.7 465.3,842.6 464.1,845.2 463.0,859.3 461.9,872.2 460.7,847.9 459.6,827.6 458.4,851.1 457.2,840.2 456.1,843.0 454.9,841.0 453.8,821.1 452.6,823.6 451.5,847.5 450.4,817.4 449.2,841.8 448.1,829.8 446.9,837.1 445.8,829.3 444.6,818.0 443.4,814.9 442.3,821.7 441.1,822.2 440.0,822.9 438.9,824.3 437.7,822.6 436.6,804.3 435.4,780.2 434.2,800.3 433.1,812.2 431.9,818.1 430.8,807.1 429.6,799.0 428.5,795.0 427.4,807.5 426.2,794.3 425.1,806.9 423.9,800.4 422.8,818.9 421.6,823.9 420.4,830.3 419.3,844.3 418.1,783.9 417.0,790.7 415.9,792.8 414.7,794.7 413.6,796.8 412.4,795.8 411.2,805.0 410.1,814.3 408.9,806.1 407.8,790.4 406.6,770.8 405.5,775.3 404.4,772.2 403.2,772.4 402.1,762.8 400.9,741.4 399.8,758.5 398.6,769.7 397.4,774.2 396.3,775.9 395.1,764.2 394.0,791.3 392.9,772.5 391.7,760.3 390.6,762.0 389.4,759.1 388.2,761.9 387.1,769.8 385.9,772.8 384.8,788.9 383.6,771.4 382.5,759.7 381.4,755.2 380.2,761.4 379.1,728.1 377.9,726.3 376.8,730.2 375.6,753.1 374.4,749.5 373.3,724.9 372.1,742.5 371.0,745.5 369.9,726.7 368.7,733.9 367.6,735.6 366.4,756.4 365.2,707.5 364.1,722.1 362.9,728.9 361.8,709.6 360.6,694.2 359.5,705.2 358.4,709.5 357.2,699.9 356.1,693.1 354.9,691.6 353.8,689.7 352.6,705.4 351.4,681.9 350.3,685.5 349.1,701.6 348.0,704.4" fill="#de1262" stroke="#de1262" stroke-width="1" stroke-linejoin="round"/><polyline points="339.8,340 339.8,955" fill="none" stroke="#9a3068" stroke-width="3"/><polyline points="340.5,466 341.5,520 342.5,600 344,640 346.5,700 349,770 351,740 353,690 355,700" fill="none" stroke="#dd1060" stroke-width="3" stroke-linejoin="round"/><line x1="339.5" y1="982.3" x2="1743" y2="982.3" stroke="#f09a5c" stroke-width="1.8"/><line x1="342" y1="507" x2="489" y2="665" stroke="#1a1a58" stroke-width="1.3"/><line x1="341" y1="467" x2="346" y2="547" stroke="#8a1a2a" stroke-width="1"/><circle cx="341.5" cy="466.6" r="8" fill="url(#gr)" clip-path="url(#plotclip)"/><circle cx="341.5" cy="506.5" r="8" fill="url(#gb)" clip-path="url(#plotclip)"/><circle cx="346.5" cy="547" r="8" fill="url(#gr)" clip-path="url(#plotclip)"/><circle cx="489.5" cy="665.8" r="8" fill="url(#gb)" clip-path="url(#plotclip)"/><circle cx="603.5" cy="982" r="8" fill="url(#gg)" clip-path="url(#plotclip)"/></svg>
<div style="position:absolute;left:352.0px;top:458.6px;font-size:17px;line-height:17px;color:#f4f4f4;font-weight:normal;white-space:pre;">Ld</div>
<div style="position:absolute;left:352.0px;top:498.6px;font-size:17px;line-height:17px;color:#f4f4f4;font-weight:normal;white-space:pre;">Lr1</div>
<div style="position:absolute;left:358.0px;top:539.1px;font-size:17px;line-height:17px;color:#f4f4f4;font-weight:normal;white-space:pre;">Le</div>
<div style="position:absolute;left:501.0px;top:657.6px;font-size:17px;line-height:17px;color:#f4f4f4;font-weight:normal;white-space:pre;">Lr2</div>
<div style="position:absolute;left:615.0px;top:974.1px;font-size:17px;line-height:17px;color:#f4f4f4;font-weight:normal;white-space:pre;">Ln</div>
<div style="position:absolute;left:353.0px;top:343.4px;font-size:18px;line-height:18px;color:#ffffff;font-weight:bold;white-space:pre;">Log</div>
<svg style="position:absolute;left:384.5px;top:345px" width="17" height="17"><path d="M1 1 H15.5 L8.25 16 Z" fill="#fff"/></svg>
<div style="position:absolute;left:494.5px;width:1200px;text-align:right;top:345.6px;font-size:17px;line-height:17px;color:#ffffff;font-weight:bold;white-space:pre;">TF 3</div>
<svg style="position:absolute;left:1696.5px;top:346.5px" width="17" height="17"><path d="M1 1 H16 L8.5 15 Z" fill="#fff"/></svg>
<div style="position:absolute;left:-869.5px;width:1200px;text-align:right;top:423.8px;font-size:13px;line-height:13px;color:#e0e0e0;font-weight:normal;white-space:pre;">-12</div>
<div style="position:absolute;left:-869.5px;width:1200px;text-align:right;top:518.8px;font-size:13px;line-height:13px;color:#e0e0e0;font-weight:normal;white-space:pre;">-24</div>
<div style="position:absolute;left:-869.5px;width:1200px;text-align:right;top:613.8px;font-size:13px;line-height:13px;color:#e0e0e0;font-weight:normal;white-space:pre;">-36</div>
<div style="position:absolute;left:-869.5px;width:1200px;text-align:right;top:708.8px;font-size:13px;line-height:13px;color:#e0e0e0;font-weight:normal;white-space:pre;">-48</div>
<div style="position:absolute;left:-869.5px;width:1200px;text-align:right;top:803.8px;font-size:13px;line-height:13px;color:#e0e0e0;font-weight:normal;white-space:pre;">-60</div>
<div style="position:absolute;left:-869.5px;width:1200px;text-align:right;top:898.8px;font-size:13px;line-height:13px;color:#e0e0e0;font-weight:normal;white-space:pre;">-72</div>
<div style="position:absolute;left:-869.5px;width:1200px;text-align:right;top:993.8px;font-size:13px;line-height:13px;color:#e0e0e0;font-weight:normal;white-space:pre;">-84</div>
<div style="position:absolute;left:-869.5px;width:1200px;text-align:right;top:1088.8px;font-size:13px;line-height:13px;color:#e0e0e0;font-weight:normal;white-space:pre;">-96</div>
<div style="position:absolute;left:236px;top:722px;width:100px;height:18px;transform:rotate(-90deg);transform-origin:50px 9px;text-align:center;font-size:16px;line-height:18px;color:#d8d8d8;">Level (dB)</div>
<div style="position:absolute;left:-254.3px;width:1200px;text-align:center;top:1134.6px;font-size:13px;line-height:13px;color:#e6e6e6;font-weight:normal;white-space:pre;letter-spacing:0.4px;">5</div>
<div style="position:absolute;left:-213.0px;width:1200px;text-align:center;top:1134.6px;font-size:13px;line-height:13px;color:#e6e6e6;font-weight:normal;white-space:pre;letter-spacing:0.4px;">25</div>
<div style="position:absolute;left:-171.7px;width:1200px;text-align:center;top:1134.6px;font-size:13px;line-height:13px;color:#e6e6e6;font-weight:normal;white-space:pre;letter-spacing:0.4px;">45</div>
<div style="position:absolute;left:-130.4px;width:1200px;text-align:center;top:1134.6px;font-size:13px;line-height:13px;color:#e6e6e6;font-weight:normal;white-space:pre;letter-spacing:0.4px;">65</div>
<div style="position:absolute;left:-89.2px;width:1200px;text-align:center;top:1134.6px;font-size:13px;line-height:13px;color:#e6e6e6;font-weight:normal;white-space:pre;letter-spacing:0.4px;">85</div>
<div style="position:absolute;left:-47.9px;width:1200px;text-align:center;top:1134.6px;font-size:13px;line-height:13px;color:#e6e6e6;font-weight:normal;white-space:pre;letter-spacing:0.4px;">105</div>
<div style="position:absolute;left:-6.6px;width:1200px;text-align:center;top:1134.6px;font-size:13px;line-height:13px;color:#e6e6e6;font-weight:normal;white-space:pre;letter-spacing:0.4px;">125</div>
<div style="position:absolute;left:34.7px;width:1200px;text-align:center;top:1134.6px;font-size:13px;line-height:13px;color:#e6e6e6;font-weight:normal;white-space:pre;letter-spacing:0.4px;">145</div>
<div style="position:absolute;left:76.0px;width:1200px;text-align:center;top:1134.6px;font-size:13px;line-height:13px;color:#e6e6e6;font-weight:normal;white-space:pre;letter-spacing:0.4px;">165</div>
<div style="position:absolute;left:117.2px;width:1200px;text-align:center;top:1134.6px;font-size:13px;line-height:13px;color:#e6e6e6;font-weight:normal;white-space:pre;letter-spacing:0.4px;">185</div>
<div style="position:absolute;left:158.5px;width:1200px;text-align:center;top:1134.6px;font-size:13px;line-height:13px;color:#e6e6e6;font-weight:normal;white-space:pre;letter-spacing:0.4px;">205</div>
<div style="position:absolute;left:199.8px;width:1200px;text-align:center;top:1134.6px;font-size:13px;line-height:13px;color:#e6e6e6;font-weight:normal;white-space:pre;letter-spacing:0.4px;">225</div>
<div style="position:absolute;left:241.1px;width:1200px;text-align:center;top:1134.6px;font-size:13px;line-height:13px;color:#e6e6e6;font-weight:normal;white-space:pre;letter-spacing:0.4px;">245</div>
<div style="position:absolute;left:272.0px;width:1200px;text-align:center;top:1134.6px;font-size:13px;line-height:13px;color:#e6e6e6;font-weight:normal;white-space:pre;letter-spacing:0.4px;">260</div>
<div style="position:absolute;left:313.3px;width:1200px;text-align:center;top:1134.6px;font-size:13px;line-height:13px;color:#e6e6e6;font-weight:normal;white-space:pre;letter-spacing:0.4px;">280</div>
<div style="position:absolute;left:354.6px;width:1200px;text-align:center;top:1134.6px;font-size:13px;line-height:13px;color:#e6e6e6;font-weight:normal;white-space:pre;letter-spacing:0.4px;">300</div>
<div style="position:absolute;left:395.9px;width:1200px;text-align:center;top:1134.6px;font-size:13px;line-height:13px;color:#e6e6e6;font-weight:normal;white-space:pre;letter-spacing:0.4px;">320</div>
<div style="position:absolute;left:437.2px;width:1200px;text-align:center;top:1134.6px;font-size:13px;line-height:13px;color:#e6e6e6;font-weight:normal;white-space:pre;letter-spacing:0.4px;">340</div>
<div style="position:absolute;left:478.4px;width:1200px;text-align:center;top:1134.6px;font-size:13px;line-height:13px;color:#e6e6e6;font-weight:normal;white-space:pre;letter-spacing:0.4px;">360</div>
<div style="position:absolute;left:519.7px;width:1200px;text-align:center;top:1134.6px;font-size:13px;line-height:13px;color:#e6e6e6;font-weight:normal;white-space:pre;letter-spacing:0.4px;">380</div>
<div style="position:absolute;left:561.0px;width:1200px;text-align:center;top:1134.6px;font-size:13px;line-height:13px;color:#e6e6e6;font-weight:normal;white-space:pre;letter-spacing:0.4px;">400</div>
<div style="position:absolute;left:602.3px;width:1200px;text-align:center;top:1134.6px;font-size:13px;line-height:13px;color:#e6e6e6;font-weight:normal;white-space:pre;letter-spacing:0.4px;">420</div>
<div style="position:absolute;left:643.6px;width:1200px;text-align:center;top:1134.6px;font-size:13px;line-height:13px;color:#e6e6e6;font-weight:normal;white-space:pre;letter-spacing:0.4px;">440</div>
<div style="position:absolute;left:684.8px;width:1200px;text-align:center;top:1134.6px;font-size:13px;line-height:13px;color:#e6e6e6;font-weight:normal;white-space:pre;letter-spacing:0.4px;">460</div>
<div style="position:absolute;left:726.1px;width:1200px;text-align:center;top:1134.6px;font-size:13px;line-height:13px;color:#e6e6e6;font-weight:normal;white-space:pre;letter-spacing:0.4px;">480</div>
<div style="position:absolute;left:767.4px;width:1200px;text-align:center;top:1134.6px;font-size:13px;line-height:13px;color:#e6e6e6;font-weight:normal;white-space:pre;letter-spacing:0.4px;">500</div>
<div style="position:absolute;left:808.7px;width:1200px;text-align:center;top:1134.6px;font-size:13px;line-height:13px;color:#e6e6e6;font-weight:normal;white-space:pre;letter-spacing:0.4px;">520</div>
<div style="position:absolute;left:850.0px;width:1200px;text-align:center;top:1134.6px;font-size:13px;line-height:13px;color:#e6e6e6;font-weight:normal;white-space:pre;letter-spacing:0.4px;">540</div>
<div style="position:absolute;left:891.2px;width:1200px;text-align:center;top:1134.6px;font-size:13px;line-height:13px;color:#e6e6e6;font-weight:normal;white-space:pre;letter-spacing:0.4px;">560</div>
<div style="position:absolute;left:932.5px;width:1200px;text-align:center;top:1134.6px;font-size:13px;line-height:13px;color:#e6e6e6;font-weight:normal;white-space:pre;letter-spacing:0.4px;">580</div>
<div style="position:absolute;left:973.8px;width:1200px;text-align:center;top:1134.6px;font-size:13px;line-height:13px;color:#e6e6e6;font-weight:normal;white-space:pre;letter-spacing:0.4px;">600</div>
<div style="position:absolute;left:1015.1px;width:1200px;text-align:center;top:1134.6px;font-size:13px;line-height:13px;color:#e6e6e6;font-weight:normal;white-space:pre;letter-spacing:0.4px;">620</div>
<div style="position:absolute;left:1056.4px;width:1200px;text-align:center;top:1134.6px;font-size:13px;line-height:13px;color:#e6e6e6;font-weight:normal;white-space:pre;letter-spacing:0.4px;">640</div>
<div style="position:absolute;left:1097.6px;width:1200px;text-align:center;top:1134.6px;font-size:13px;line-height:13px;color:#e6e6e6;font-weight:normal;white-space:pre;letter-spacing:0.4px;">660</div>
<div style="position:absolute;left:1138.9px;width:1200px;text-align:center;top:1134.6px;font-size:13px;line-height:13px;color:#e6e6e6;font-weight:normal;white-space:pre;letter-spacing:0.4px;">680</div>
<div style="position:absolute;left:440.6px;width:1200px;text-align:center;top:1155.1px;font-size:16px;line-height:16px;color:#e6e6e6;font-weight:normal;white-space:pre;">Time (ms)</div>
<div style="position:absolute;left:288.4px;width:1200px;text-align:right;top:367.0px;font-size:16px;line-height:16px;color:#e8e8e8;font-weight:normal;white-space:pre;">D/R:</div>
<div style="position:absolute;left:390.0px;width:1200px;text-align:right;top:367.0px;font-size:16px;line-height:16px;color:#e8e8e8;font-weight:normal;white-space:pre;">9.55 dB</div>
<div style="position:absolute;left:288.4px;width:1200px;text-align:right;top:389.5px;font-size:16px;line-height:16px;color:#e8e8e8;font-weight:normal;white-space:pre;">EDT:</div>
<div style="position:absolute;left:390.0px;width:1200px;text-align:right;top:389.5px;font-size:16px;line-height:16px;color:#e8e8e8;font-weight:normal;white-space:pre;">0.033 sec</div>
<div style="position:absolute;left:288.4px;width:1200px;text-align:right;top:412.1px;font-size:16px;line-height:16px;color:#e8e8e8;font-weight:normal;white-space:pre;">RT60:</div>
<div style="position:absolute;left:390.0px;width:1200px;text-align:right;top:412.1px;font-size:16px;line-height:16px;color:#e8e8e8;font-weight:normal;white-space:pre;">0.272 sec</div>
<div style="position:absolute;left:511.4px;width:1200px;text-align:right;top:412.1px;font-size:16px;line-height:16px;color:#e8e8e8;font-weight:normal;white-space:pre;">-220.9 dB/sec</div>
<div style="position:absolute;left:288.4px;width:1200px;text-align:right;top:434.7px;font-size:16px;line-height:16px;color:#e8e8e8;font-weight:normal;white-space:pre;">Ld-Le:</div>
<div style="position:absolute;left:390.0px;width:1200px;text-align:right;top:434.7px;font-size:16px;line-height:16px;color:#e8e8e8;font-weight:normal;white-space:pre;">3.3 ms</div>
<div style="position:absolute;left:511.4px;width:1200px;text-align:right;top:434.7px;font-size:16px;line-height:16px;color:#e8e8e8;font-weight:normal;white-space:pre;">-10.01 dB</div>
<div style="position:absolute;left:288.4px;width:1200px;text-align:right;top:457.3px;font-size:16px;line-height:16px;color:#e8e8e8;font-weight:normal;white-space:pre;">Ld-Ln:</div>
<div style="position:absolute;left:390.0px;width:1200px;text-align:right;top:457.3px;font-size:16px;line-height:16px;color:#e8e8e8;font-weight:normal;white-space:pre;">128.0 ms</div>
<div style="position:absolute;left:511.4px;width:1200px;text-align:right;top:457.3px;font-size:16px;line-height:16px;color:#e8e8e8;font-weight:normal;white-space:pre;">-65.00 dB</div>
<div style="position:absolute;left:288.4px;width:1200px;text-align:right;top:479.9px;font-size:16px;line-height:16px;color:#e8e8e8;font-weight:normal;white-space:pre;">Lr1-Lr2:</div>
<div style="position:absolute;left:390.0px;width:1200px;text-align:right;top:479.9px;font-size:16px;line-height:16px;color:#e8e8e8;font-weight:normal;white-space:pre;">72.3 ms</div>
<div style="position:absolute;left:511.4px;width:1200px;text-align:right;top:479.9px;font-size:16px;line-height:16px;color:#e8e8e8;font-weight:normal;white-space:pre;">-19.99 dB</div>
<svg style="position:absolute;left:273px;top:1156px" width="20" height="20" viewBox="0 0 20 20"><rect x="1.5" y="1.5" width="17" height="17" rx="2" fill="none" stroke="#f0f0f0" stroke-width="2"/><path d="M5 10 H15 M10 5 V15" stroke="#f0f0f0" stroke-width="2.2"/></svg>
<svg style="position:absolute;left:1753px;top:1156px" width="20" height="20" viewBox="0 0 20 20"><rect x="8.4" y="0.5" width="3.2" height="5" fill="#e0e0e0" transform="rotate(0 10 10)"/><rect x="8.4" y="0.5" width="3.2" height="5" fill="#e0e0e0" transform="rotate(45 10 10)"/><rect x="8.4" y="0.5" width="3.2" height="5" fill="#e0e0e0" transform="rotate(90 10 10)"/><rect x="8.4" y="0.5" width="3.2" height="5" fill="#e0e0e0" transform="rotate(135 10 10)"/><rect x="8.4" y="0.5" width="3.2" height="5" fill="#e0e0e0" transform="rotate(180 10 10)"/><rect x="8.4" y="0.5" width="3.2" height="5" fill="#e0e0e0" transform="rotate(225 10 10)"/><rect x="8.4" y="0.5" width="3.2" height="5" fill="#e0e0e0" transform="rotate(270 10 10)"/><rect x="8.4" y="0.5" width="3.2" height="5" fill="#e0e0e0" transform="rotate(315 10 10)"/><circle cx="10" cy="10" r="6.3" fill="none" stroke="#e0e0e0" stroke-width="2.6"/></svg>
<div style="position:absolute;left:1785px;top:80px;width:97px;height:37.5px;background:linear-gradient(#6f7379,#62666c);border-radius:4px;"></div>
<div style="position:absolute;left:1891.5px;top:80px;width:78.5px;height:38px;background:linear-gradient(#9a9ea5,#868a91);border-radius:4px;"></div>
<div style="position:absolute;left:1978.5px;top:80px;width:60px;height:37.5px;background:linear-gradient(#6f7379,#62666c);border-radius:4px;"></div>
<div style="position:absolute;left:1233.5px;width:1200px;text-align:center;top:90.8px;font-size:16px;line-height:16px;color:#f0f0f0;font-weight:normal;white-space:pre;">Real Time</div>
<div style="position:absolute;left:1330.7px;width:1200px;text-align:center;top:90.8px;font-size:16px;line-height:16px;color:#f4f4f4;font-weight:normal;white-space:pre;">Impulse</div>
<div style="position:absolute;left:1408.5px;width:1200px;text-align:center;top:90.8px;font-size:16px;line-height:16px;color:#f0f0f0;font-weight:normal;white-space:pre;">SPL</div>
<div style="position:absolute;left:1784.5px;top:126px;width:1256px;height:99px;"></div>
<div style="position:absolute;left:1784.5px;top:126px;width:256px;height:99px;border:1.5px solid #55595d;border-radius:0 12px 12px 0;background:#0a0a0a;"></div>
<div style="position:absolute;left:686.0px;width:1200px;text-align:right;top:158.8px;font-size:36px;line-height:36px;color:#ffffff;font-weight:bold;white-space:pre;letter-spacing:-0.5px;">0.0</div>
<div style="position:absolute;left:802.0px;width:1200px;text-align:right;top:136.6px;font-size:17px;line-height:17px;color:#eaeaea;font-weight:normal;white-space:pre;">None</div>
<div style="position:absolute;left:802.0px;width:1200px;text-align:right;top:165.4px;font-size:17px;line-height:17px;color:#eaeaea;font-weight:normal;white-space:pre;">dB FS Peak</div>
<div style="position:absolute;left:799.5px;width:1200px;text-align:right;top:195.2px;font-size:16px;line-height:16px;color:#eaeaea;font-weight:normal;white-space:pre;">Max 0.0</div>
<svg style="position:absolute;left:2012px;top:140px" width="16" height="40"><path d="M3 5.5 H12 L7.5 10.5 Z M3 34 H12 L7.5 39 Z" fill="#eaeaea"/></svg>
<svg style="position:absolute;left:2012px;top:195px" width="16" height="16"><circle cx="8" cy="8" r="6.8" fill="#8a8a8a"/></svg>
<div style="position:absolute;left:1784.5px;top:232.5px;width:256px;height:787px;border:1.5px solid #55595d;border-radius:0 12px 0 0;background:#202326;"></div>
<div style="position:absolute;left:1310.6px;width:1200px;text-align:center;top:249.8px;font-size:18px;line-height:18px;color:#eeeeee;font-weight:normal;white-space:pre;">Impulse Response</div>
<div style="position:absolute;left:1797px;top:278px;width:230px;height:1.8px;background:#55595d;"></div>
<div style="position:absolute;left:646.5px;width:1200px;text-align:right;top:297.3px;font-size:17px;line-height:17px;color:#eeeeee;font-weight:normal;white-space:pre;">FFT:</div>
<div style="position:absolute;left:1860px;top:292.5px;width:160px;height:26px;background:linear-gradient(#d2d4d6,#c4c6c8);border-radius:5px;"></div>
<div style="position:absolute;left:1869.0px;top:297.3px;font-size:17px;line-height:17px;color:#141414;font-weight:normal;white-space:pre;">32k / 682 ms</div>
<svg style="position:absolute;left:2003px;top:303.5px" width="12" height="10"><path d="M1.5 2.5 H10 L5.75 7.5 Z" fill="#1a1a1a"/></svg>
<div style="position:absolute;left:646.5px;width:1200px;text-align:right;top:330.6px;font-size:17px;line-height:17px;color:#eeeeee;font-weight:normal;white-space:pre;">Avg:</div>
<div style="position:absolute;left:1860px;top:325.5px;width:160px;height:26px;background:linear-gradient(#d2d4d6,#c4c6c8);border-radius:5px;"></div>
<div style="position:absolute;left:1869.0px;top:330.3px;font-size:17px;line-height:17px;color:#141414;font-weight:normal;white-space:pre;">8</div>
<svg style="position:absolute;left:2003px;top:336.5px" width="12" height="10"><path d="M1.5 2.5 H10 L5.75 7.5 Z" fill="#1a1a1a"/></svg>
<div style="position:absolute;left:1798.5px;top:360.5px;width:227px;height:22.5px;background:#5b5f64;border-radius:4px;"></div>
<div style="position:absolute;left:1911px;top:360.5px;width:2px;height:22.5px;background:#3f4246;"></div>
<div style="position:absolute;left:1969px;top:360.5px;width:2px;height:22.5px;background:#3f4246;"></div>
<svg style="position:absolute;left:1840px;top:362px" width="24" height="19"><path d="M6 2.5 L18 9.5 L6 16.5 Z" fill="#f2f2f2"/></svg>
<svg style="position:absolute;left:1930px;top:362px" width="20" height="19"><circle cx="10" cy="9.5" r="6.5" fill="#f2f2f2"/></svg>
<div style="position:absolute;left:1397.0px;width:1200px;text-align:center;top:364.0px;font-size:16px;line-height:16px;color:#eeeeee;font-weight:normal;white-space:pre;">Cont</div>
<div style="position:absolute;left:1797px;top:391.5px;width:230px;height:23px;background:#000;"></div>
<div style="position:absolute;left:1311.5px;width:1200px;text-align:center;top:395.8px;font-size:15px;line-height:15px;color:#eeeeee;font-weight:normal;white-space:pre;">Ready</div>
<svg width="0" height="0" style="position:absolute"><defs><radialGradient id="gg2" cx="42%" cy="32%" r="68%"><stop offset="0" stop-color="#7ae070"/><stop offset="0.5" stop-color="#1aa01a"/><stop offset="1" stop-color="#0a600a"/></radialGradient><radialGradient id="gb2" cx="42%" cy="32%" r="68%"><stop offset="0" stop-color="#90a8ff"/><stop offset="0.5" stop-color="#3a60f0"/><stop offset="1" stop-color="#1a30a0"/></radialGradient><radialGradient id="gp2" cx="42%" cy="32%" r="68%"><stop offset="0" stop-color="#ff7aa0"/><stop offset="0.5" stop-color="#e0105a"/><stop offset="1" stop-color="#900a3a"/></radialGradient></defs></svg>
<div style="position:absolute;left:1797px;top:421px;width:227px;height:72px;border:2px solid #2b8f34;border-radius:5px;background:#25282b;"></div>
<svg style="position:absolute;left:1803px;top:428px" width="28" height="28"><circle cx="14" cy="14" r="12.5" fill="url(#gg2)"/></svg>
<div style="position:absolute;left:1841.6px;top:432.6px;font-size:18px;line-height:18px;color:#f2f2f2;font-weight:normal;white-space:pre;">TF 1</div>
<div style="position:absolute;left:1996px;top:433px;width:17.5px;height:17.5px;background:#fff;border:1px solid #222;"></div>
<svg style="position:absolute;left:1996px;top:432px" width="18" height="18"><path d="M3.5 9.5 L7.5 14 L15 3.5" fill="none" stroke="#000" stroke-width="2.6"/></svg>
<div style="position:absolute;left:1810.5px;top:460.0px;font-size:10px;line-height:10px;color:#f0f0f0;font-weight:bold;white-space:pre;">M</div>
<div style="position:absolute;left:1810.5px;top:474.0px;font-size:10px;line-height:10px;color:#f0f0f0;font-weight:bold;white-space:pre;">R</div>
<div style="position:absolute;left:1819.5px;top:461px;width:101px;height:7.5px;background:#000;"></div>
<div style="position:absolute;left:1819.5px;top:475px;width:101px;height:7.5px;background:#000;"></div>
<div style="position:absolute;left:1880.0px;top:461px;width:1.6px;height:7.5px;background:#3a3d40;"></div>
<div style="position:absolute;left:1880.0px;top:475px;width:1.6px;height:7.5px;background:#3a3d40;"></div>
<div style="position:absolute;left:1909.0px;top:461px;width:1.6px;height:7.5px;background:#3a3d40;"></div>
<div style="position:absolute;left:1909.0px;top:475px;width:1.6px;height:7.5px;background:#3a3d40;"></div>
<div style="position:absolute;left:1819.5px;top:461.5px;width:29.5px;height:6.5px;background:#22a82a;"></div>
<div style="position:absolute;left:1926.5px;top:459px;width:64px;height:23px;background:linear-gradient(#d0d2d4,#c2c4c6);border-radius:0px;"></div>
<div style="position:absolute;left:1933.5px;top:464.1px;font-size:17px;line-height:17px;color:#111111;font-weight:normal;white-space:pre;">2.06</div>
<svg style="position:absolute;left:1997px;top:462px" width="16" height="16"><circle cx="8" cy="8" r="6.8" fill="#6a6d70"/></svg>
<div style="position:absolute;left:1797px;top:500px;width:227px;height:72px;border:2px solid #3a5cc0;border-radius:5px;background:#25282b;"></div>
<svg style="position:absolute;left:1803px;top:507px" width="28" height="28"><circle cx="14" cy="14" r="12.5" fill="url(#gb2)"/></svg>
<div style="position:absolute;left:1841.6px;top:511.6px;font-size:18px;line-height:18px;color:#f2f2f2;font-weight:normal;white-space:pre;">TF 2</div>
<div style="position:absolute;left:1996px;top:512px;width:17.5px;height:17.5px;background:#fff;border:1px solid #222;"></div>
<svg style="position:absolute;left:1996px;top:511px" width="18" height="18"><path d="M3.5 9.5 L7.5 14 L15 3.5" fill="none" stroke="#000" stroke-width="2.6"/></svg>
<div style="position:absolute;left:1810.5px;top:539.0px;font-size:10px;line-height:10px;color:#f0f0f0;font-weight:bold;white-space:pre;">M</div>
<div style="position:absolute;left:1810.5px;top:553.0px;font-size:10px;line-height:10px;color:#f0f0f0;font-weight:bold;white-space:pre;">R</div>
<div style="position:absolute;left:1819.5px;top:540px;width:101px;height:7.5px;background:#000;"></div>
<div style="position:absolute;left:1819.5px;top:554px;width:101px;height:7.5px;background:#000;"></div>
<div style="position:absolute;left:1880.0px;top:540px;width:1.6px;height:7.5px;background:#3a3d40;"></div>
<div style="position:absolute;left:1880.0px;top:554px;width:1.6px;height:7.5px;background:#3a3d40;"></div>
<div style="position:absolute;left:1909.0px;top:540px;width:1.6px;height:7.5px;background:#3a3d40;"></div>
<div style="position:absolute;left:1909.0px;top:554px;width:1.6px;height:7.5px;background:#3a3d40;"></div>
<div style="position:absolute;left:1819.5px;top:540.5px;width:31px;height:6.5px;background:#22a82a;"></div>
<div style="position:absolute;left:1926.5px;top:538px;width:64px;height:23px;background:linear-gradient(#d0d2d4,#c2c4c6);border-radius:0px;"></div>
<div style="position:absolute;left:1933.5px;top:543.1px;font-size:17px;line-height:17px;color:#111111;font-weight:normal;white-space:pre;">1.62</div>
<svg style="position:absolute;left:1997px;top:541px" width="16" height="16"><circle cx="8" cy="8" r="6.8" fill="#6a6d70"/></svg>
<div style="position:absolute;left:1797px;top:579px;width:227px;height:72px;border:2px solid #e0306e;border-radius:5px;background:#5e6166;box-shadow:inset 0 0 0 2px #f07aa0;"></div>
<svg style="position:absolute;left:1803px;top:586px" width="28" height="28"><circle cx="14" cy="14" r="12.5" fill="url(#gp2)"/></svg>
<div style="position:absolute;left:1841.6px;top:590.6px;font-size:18px;line-height:18px;color:#f2f2f2;font-weight:normal;white-space:pre;">TF 3</div>
<div style="position:absolute;left:1996px;top:591px;width:17.5px;height:17.5px;background:#fff;border:1px solid #222;"></div>
<svg style="position:absolute;left:1996px;top:590px" width="18" height="18"><path d="M3.5 9.5 L7.5 14 L15 3.5" fill="none" stroke="#000" stroke-width="2.6"/></svg>
<div style="position:absolute;left:1810.5px;top:618.0px;font-size:10px;line-height:10px;color:#f0f0f0;font-weight:bold;white-space:pre;">M</div>
<div style="position:absolute;left:1810.5px;top:632.0px;font-size:10px;line-height:10px;color:#f0f0f0;font-weight:bold;white-space:pre;">R</div>
<div style="position:absolute;left:1819.5px;top:619px;width:101px;height:7.5px;background:#000;"></div>
<div style="position:absolute;left:1819.5px;top:633px;width:101px;height:7.5px;background:#000;"></div>
<div style="position:absolute;left:1880.0px;top:619px;width:1.6px;height:7.5px;background:#3a3d40;"></div>
<div style="position:absolute;left:1880.0px;top:633px;width:1.6px;height:7.5px;background:#3a3d40;"></div>
<div style="position:absolute;left:1909.0px;top:619px;width:1.6px;height:7.5px;background:#3a3d40;"></div>
<div style="position:absolute;left:1909.0px;top:633px;width:1.6px;height:7.5px;background:#3a3d40;"></div>
<div style="position:absolute;left:1819.5px;top:619.5px;width:33px;height:6.5px;background:#22a82a;"></div>
<div style="position:absolute;left:1926.5px;top:617px;width:64px;height:23px;background:linear-gradient(#d0d2d4,#c2c4c6);border-radius:0px;"></div>
<div style="position:absolute;left:1933.5px;top:622.1px;font-size:17px;line-height:17px;color:#111111;font-weight:normal;white-space:pre;">2.06</div>
<div style="position:absolute;left:1798.5px;top:658px;width:224.5px;height:35px;border:1.5px solid #4e5256;border-radius:5px;background:#26292c;"></div>
<div style="position:absolute;left:1310.5px;width:1200px;text-align:center;top:668.0px;font-size:16px;line-height:16px;color:#eeeeee;font-weight:normal;white-space:pre;">+ TF Engine</div>
<div style="position:absolute;left:652.0px;width:1200px;text-align:right;top:918.5px;font-size:16px;line-height:16px;color:#eeeeee;font-weight:normal;white-space:pre;">Filters:</div>
<div style="position:absolute;left:1860px;top:912.5px;width:160px;height:26.5px;background:linear-gradient(#d2d4d6,#c4c6c8);border-radius:5px;"></div>
<div style="position:absolute;left:1869.0px;top:917.6px;font-size:17px;line-height:17px;color:#141414;font-weight:normal;white-space:pre;">Octave</div>
<svg style="position:absolute;left:2003px;top:923.75px" width="12" height="10"><path d="M1.5 2.5 H10 L5.75 7.5 Z" fill="#1a1a1a"/></svg>
<div style="position:absolute;left:652.0px;width:1200px;text-align:right;top:952.0px;font-size:16px;line-height:16px;color:#eeeeee;font-weight:normal;white-space:pre;">Band:</div>
<div style="position:absolute;left:1860px;top:946px;width:160px;height:26.5px;background:linear-gradient(#d2d4d6,#c4c6c8);border-radius:5px;"></div>
<div style="position:absolute;left:1869.0px;top:950.2px;font-size:18px;line-height:18px;color:#141414;font-weight:normal;white-space:pre;">Broadband</div>
<svg style="position:absolute;left:2003px;top:957.25px" width="12" height="10"><path d="M1.5 2.5 H10 L5.75 7.5 Z" fill="#1a1a1a"/></svg>
<div style="position:absolute;left:1791px;top:980px;width:242px;height:2px;background:#55595d;"></div>
<div style="position:absolute;left:1792px;top:989.5px;width:237px;height:23.5px;background:#5f6368;border-radius:4px;"></div>
<div style="position:absolute;left:1871px;top:989.5px;width:79.5px;height:23.5px;background:#7c8086;"></div>
<div style="position:absolute;left:1231.5px;width:1200px;text-align:center;top:994.1px;font-size:15px;line-height:15px;color:#f0f0f0;font-weight:normal;white-space:pre;">All Bands</div>
<div style="position:absolute;left:1310.7px;width:1200px;text-align:center;top:994.1px;font-size:15px;line-height:15px;color:#f0f0f0;font-weight:normal;white-space:pre;">T60</div>
<div style="position:absolute;left:1389.8px;width:1200px;text-align:center;top:994.1px;font-size:15px;line-height:15px;color:#f0f0f0;font-weight:normal;white-space:pre;">Schroeder</div>
<div style="position:absolute;left:1785px;top:1028.5px;width:253px;height:22px;background:#5f6368;border-radius:4px;"></div>
<div style="position:absolute;left:1911px;top:1028.5px;width:1.6px;height:22px;background:#3f4246;"></div>
<div style="position:absolute;left:1248.5px;width:1200px;text-align:center;top:1032.0px;font-size:16px;line-height:16px;color:#f0f0f0;font-weight:normal;white-space:pre;">View</div>
<div style="position:absolute;left:1374.5px;width:1200px;text-align:center;top:1032.0px;font-size:16px;line-height:16px;color:#f0f0f0;font-weight:normal;white-space:pre;">Timer</div>
<div style="position:absolute;left:1784.5px;top:1060px;width:254px;height:118px;border:1.5px solid #55595d;border-radius:0 0 12px 0;background:#202326;"></div>
<div style="position:absolute;left:1309.7px;width:1200px;text-align:center;top:1069.2px;font-size:18px;line-height:18px;color:#eeeeee;font-weight:normal;white-space:pre;">Signal Generator</div>
<div style="position:absolute;left:1791px;top:1097px;width:236px;height:1.8px;background:#55595d;"></div>
<div style="position:absolute;left:1790.5px;top:1114px;width:110.5px;height:25px;background:linear-gradient(#d2d4d6,#c4c6c8);border-radius:5px;"></div>
<div style="position:absolute;left:1799.5px;top:1119.2px;font-size:16px;line-height:16px;color:#141414;font-weight:normal;white-space:pre;">Pink Noise</div>
<svg style="position:absolute;left:1884.0px;top:1124.5px" width="12" height="10"><path d="M1.5 2.5 H10 L5.75 7.5 Z" fill="#1a1a1a"/></svg>
<div style="position:absolute;left:1909px;top:1115.3px;width:58.5px;height:21.5px;background:#cfd1d3;border-radius:0px;"></div>
<div style="position:absolute;left:1338.3px;width:1200px;text-align:center;top:1118.3px;font-size:16px;line-height:16px;color:#141414;font-weight:normal;white-space:pre;">-12 dB</div>
<div style="position:absolute;left:1976px;top:1114px;width:56px;height:23.5px;background:#5f6368;border-radius:4px;"></div>
<div style="position:absolute;left:1404.0px;width:1200px;text-align:center;top:1117.1px;font-size:17px;line-height:17px;color:#f0f0f0;font-weight:normal;white-space:pre;">On</div>
<div style="position:absolute;left:1790.5px;top:1145px;width:110.5px;height:25px;background:linear-gradient(#d2d4d6,#c4c6c8);border-radius:5px;"></div>
<div style="position:absolute;left:1799.5px;top:1149.3px;font-size:17px;line-height:17px;color:#141414;font-weight:normal;white-space:pre;">Output</div>
<svg style="position:absolute;left:1884.0px;top:1155.5px" width="12" height="10"><path d="M1.5 2.5 H10 L5.75 7.5 Z" fill="#1a1a1a"/></svg>
<div style="position:absolute;left:1909px;top:1146px;width:58.5px;height:22.5px;background:#56595e;border-radius:4px;"></div>
<div style="position:absolute;left:1976px;top:1146px;width:56px;height:22.5px;background:#56595e;border-radius:4px;"></div>
<div style="position:absolute;left:1338.3px;width:1200px;text-align:center;top:1149.5px;font-size:16px;line-height:16px;color:#e0e0e0;font-weight:normal;white-space:pre;">-</div>
<div style="position:absolute;left:1403.5px;width:1200px;text-align:center;top:1150.5px;font-size:16px;line-height:16px;color:#e0e0e0;font-weight:normal;white-space:pre;">+</div>
<div style="position:absolute;left:687px;top:303px;width:708px;height:550px;background:#1c1c1f;box-shadow:0 0 6px rgba(0,0,0,0.6);"></div>
<div style="position:absolute;left:687px;top:303px;width:708px;height:29px;background:linear-gradient(#4e4e4e 0%,#404040 40%,#2e2e2e 100%);"></div>
<div style="position:absolute;left:687px;top:332px;width:708px;height:4px;background:linear-gradient(#202022,#1c1c1f);"></div>
<svg style="position:absolute;left:695.6px;top:307.8px" width="20" height="20" viewBox="0 0 20 20"><circle cx="10" cy="10" r="9.3" fill="#606060"/><path d="M6.3 6.3L13.7 13.7M13.7 6.3L6.3 13.7" stroke="#3a3a3a" stroke-width="2.6"/></svg>
<div style="position:absolute;left:442.0px;width:1200px;text-align:center;top:310.0px;font-size:16px;line-height:16px;color:#ffffff;font-weight:bold;white-space:pre;">All Bands</div>
<div style="position:absolute;left:700.5px;top:345.2px;width:679.8px;height:318.8px;background:#ffffff;"></div>
<div style="position:absolute;left:700.5px;top:345.2px;width:679.8px;height:35.3px;background:linear-gradient(#dcdcdc 0%,#cfcfcf 45%,#a8a8a8 100%);border-bottom:1px solid #8a8a8a;"></div>
<div style="position:absolute;left:700.5px;top:345.2px;width:3px;height:318.8px;background:linear-gradient(90deg,#8a8a8a,#d8d8d8);"></div>
<div style="position:absolute;left:771.8px;top:346.2px;width:1.4px;height:34px;background:#9a9a9a;"></div>
<div style="position:absolute;left:844.5999999999999px;top:346.2px;width:1.4px;height:34px;background:#9a9a9a;"></div>
<div style="position:absolute;left:916.5px;top:346.2px;width:1.4px;height:34px;background:#9a9a9a;"></div>
<div style="position:absolute;left:988.5999999999999px;top:346.2px;width:1.4px;height:34px;background:#9a9a9a;"></div>
<div style="position:absolute;left:1060.6px;top:346.2px;width:1.4px;height:34px;background:#9a9a9a;"></div>
<div style="position:absolute;left:1132.5px;top:346.2px;width:1.4px;height:34px;background:#9a9a9a;"></div>
<div style="position:absolute;left:1204.3999999999999px;top:346.2px;width:1.4px;height:34px;background:#9a9a9a;"></div>
<div style="position:absolute;left:1276.3px;top:346.2px;width:1.4px;height:34px;background:#9a9a9a;"></div>
<div style="position:absolute;left:1348.7px;top:346.2px;width:1.4px;height:34px;background:#9a9a9a;"></div>
<div style="position:absolute;left:707.6px;top:357.4px;font-size:14px;line-height:14px;color:#111111;font-weight:bold;white-space:pre;">Filter</div>
<div style="position:absolute;left:780.0px;top:357.4px;font-size:14px;line-height:14px;color:#111111;font-weight:bold;white-space:pre;">Band</div>
<div style="position:absolute;left:851.0px;top:357.4px;font-size:14px;line-height:14px;color:#111111;font-weight:bold;white-space:pre;">RT60</div>
<div style="position:absolute;left:923.0px;top:357.4px;font-size:14px;line-height:14px;color:#111111;font-weight:bold;white-space:pre;">EDT</div>
<div style="position:absolute;left:996.0px;top:357.4px;font-size:14px;line-height:14px;color:#111111;font-weight:bold;white-space:pre;">D/R</div>
<div style="position:absolute;left:1067.0px;top:357.4px;font-size:14px;line-height:14px;color:#111111;font-weight:bold;white-space:pre;">C10</div>
<div style="position:absolute;left:1139.0px;top:357.4px;font-size:14px;line-height:14px;color:#111111;font-weight:bold;white-space:pre;">C35</div>
<div style="position:absolute;left:1211.0px;top:357.4px;font-size:14px;line-height:14px;color:#111111;font-weight:bold;white-space:pre;">C50</div>
<div style="position:absolute;left:1283.0px;top:357.4px;font-size:14px;line-height:14px;color:#111111;font-weight:bold;white-space:pre;">C80</div>
<div style="position:absolute;left:703.5px;top:380.5px;width:651.5px;height:283.5px;overflow:hidden;">
<div style="position:absolute;left:1.5px;top:-2.3px;font-size:16px;line-height:16px;color:#141414;font-weight:normal;white-space:pre;">1/3</div>
<div style="position:absolute;left:73.0px;top:-2.3px;font-size:16px;line-height:16px;color:#141414;font-weight:normal;white-space:pre;">2.5 kHz</div>
<div style="position:absolute;left:145.0px;top:-2.3px;font-size:16px;line-height:16px;color:#141414;font-weight:normal;white-space:pre;">0.17</div>
<div style="position:absolute;left:216.5px;top:-2.3px;font-size:16px;line-height:16px;color:#141414;font-weight:normal;white-space:pre;">0.02</div>
<div style="position:absolute;left:288.5px;top:-2.3px;font-size:16px;line-height:16px;color:#141414;font-weight:normal;white-space:pre;">9.54</div>
<div style="position:absolute;left:361.5px;top:-2.3px;font-size:16px;line-height:16px;color:#141414;font-weight:normal;white-space:pre;">13.25</div>
<div style="position:absolute;left:433.3px;top:-2.3px;font-size:16px;line-height:16px;color:#141414;font-weight:normal;white-space:pre;">22.43</div>
<div style="position:absolute;left:505.5px;top:-2.3px;font-size:16px;line-height:16px;color:#141414;font-weight:normal;white-space:pre;">27.39</div>
<div style="position:absolute;left:577.5px;top:-2.3px;font-size:16px;line-height:16px;color:#141414;font-weight:normal;white-space:pre;">38.94</div>
<div style="position:absolute;left:1.5px;top:27.0px;font-size:16px;line-height:16px;color:#141414;font-weight:normal;white-space:pre;">1/3</div>
<div style="position:absolute;left:73.0px;top:27.0px;font-size:16px;line-height:16px;color:#141414;font-weight:normal;white-space:pre;">3.2 kHz</div>
<div style="position:absolute;left:145.0px;top:27.0px;font-size:16px;line-height:16px;color:#141414;font-weight:normal;white-space:pre;">0.21</div>
<div style="position:absolute;left:216.5px;top:27.0px;font-size:16px;line-height:16px;color:#141414;font-weight:normal;white-space:pre;">0.01</div>
<div style="position:absolute;left:288.5px;top:27.0px;font-size:16px;line-height:16px;color:#141414;font-weight:normal;white-space:pre;">9.64</div>
<div style="position:absolute;left:361.5px;top:27.0px;font-size:16px;line-height:16px;color:#141414;font-weight:normal;white-space:pre;">16.06</div>
<div style="position:absolute;left:433.3px;top:27.0px;font-size:16px;line-height:16px;color:#141414;font-weight:normal;white-space:pre;">23.26</div>
<div style="position:absolute;left:505.5px;top:27.0px;font-size:16px;line-height:16px;color:#141414;font-weight:normal;white-space:pre;">27.21</div>
<div style="position:absolute;left:577.5px;top:27.0px;font-size:16px;line-height:16px;color:#141414;font-weight:normal;white-space:pre;">35.16</div>
<div style="position:absolute;left:1.5px;top:56.2px;font-size:16px;line-height:16px;color:#141414;font-weight:normal;white-space:pre;">1/3</div>
<div style="position:absolute;left:73.0px;top:56.2px;font-size:16px;line-height:16px;color:#141414;font-weight:normal;white-space:pre;">4 kHz</div>
<div style="position:absolute;left:145.0px;top:56.2px;font-size:16px;line-height:16px;color:#141414;font-weight:normal;white-space:pre;">0.19</div>
<div style="position:absolute;left:216.5px;top:56.2px;font-size:16px;line-height:16px;color:#141414;font-weight:normal;white-space:pre;">0.01</div>
<div style="position:absolute;left:288.5px;top:56.2px;font-size:16px;line-height:16px;color:#141414;font-weight:normal;white-space:pre;">9.59</div>
<div style="position:absolute;left:361.5px;top:56.2px;font-size:16px;line-height:16px;color:#141414;font-weight:normal;white-space:pre;">15.49</div>
<div style="position:absolute;left:433.3px;top:56.2px;font-size:16px;line-height:16px;color:#141414;font-weight:normal;white-space:pre;">24.08</div>
<div style="position:absolute;left:505.5px;top:56.2px;font-size:16px;line-height:16px;color:#141414;font-weight:normal;white-space:pre;">28.77</div>
<div style="position:absolute;left:577.5px;top:56.2px;font-size:16px;line-height:16px;color:#141414;font-weight:normal;white-space:pre;">36.89</div>
<div style="position:absolute;left:1.5px;top:85.5px;font-size:16px;line-height:16px;color:#141414;font-weight:normal;white-space:pre;">1/3</div>
<div style="position:absolute;left:73.0px;top:85.5px;font-size:16px;line-height:16px;color:#141414;font-weight:normal;white-space:pre;">5 kHz</div>
<div style="position:absolute;left:145.0px;top:85.5px;font-size:16px;line-height:16px;color:#141414;font-weight:normal;white-space:pre;">0.21</div>
<div style="position:absolute;left:216.5px;top:85.5px;font-size:16px;line-height:16px;color:#141414;font-weight:normal;white-space:pre;">0.00</div>
<div style="position:absolute;left:288.5px;top:85.5px;font-size:16px;line-height:16px;color:#141414;font-weight:normal;white-space:pre;">9.58</div>
<div style="position:absolute;left:361.5px;top:85.5px;font-size:16px;line-height:16px;color:#141414;font-weight:normal;white-space:pre;">14.80</div>
<div style="position:absolute;left:433.3px;top:85.5px;font-size:16px;line-height:16px;color:#141414;font-weight:normal;white-space:pre;">23.96</div>
<div style="position:absolute;left:505.5px;top:85.5px;font-size:16px;line-height:16px;color:#141414;font-weight:normal;white-space:pre;">27.60</div>
<div style="position:absolute;left:577.5px;top:85.5px;font-size:16px;line-height:16px;color:#141414;font-weight:normal;white-space:pre;">34.68</div>
<div style="position:absolute;left:1.5px;top:114.7px;font-size:16px;line-height:16px;color:#141414;font-weight:normal;white-space:pre;">1/3</div>
<div style="position:absolute;left:73.0px;top:114.7px;font-size:16px;line-height:16px;color:#141414;font-weight:normal;white-space:pre;">6.3 kHz</div>
<div style="position:absolute;left:145.0px;top:114.7px;font-size:16px;line-height:16px;color:#141414;font-weight:normal;white-space:pre;">0.22</div>
<div style="position:absolute;left:216.5px;top:114.7px;font-size:16px;line-height:16px;color:#141414;font-weight:normal;white-space:pre;">0.01</div>
<div style="position:absolute;left:288.5px;top:114.7px;font-size:16px;line-height:16px;color:#141414;font-weight:normal;white-space:pre;">9.78</div>
<div style="position:absolute;left:361.5px;top:114.7px;font-size:16px;line-height:16px;color:#141414;font-weight:normal;white-space:pre;">15.80</div>
<div style="position:absolute;left:433.3px;top:114.7px;font-size:16px;line-height:16px;color:#141414;font-weight:normal;white-space:pre;">23.90</div>
<div style="position:absolute;left:505.5px;top:114.7px;font-size:16px;line-height:16px;color:#141414;font-weight:normal;white-space:pre;">28.52</div>
<div style="position:absolute;left:577.5px;top:114.7px;font-size:16px;line-height:16px;color:#141414;font-weight:normal;white-space:pre;">34.26</div>
<div style="position:absolute;left:1.5px;top:144.0px;font-size:16px;line-height:16px;color:#141414;font-weight:normal;white-space:pre;">1/3</div>
<div style="position:absolute;left:73.0px;top:144.0px;font-size:16px;line-height:16px;color:#141414;font-weight:normal;white-space:pre;">8 kHz</div>
<div style="position:absolute;left:145.0px;top:144.0px;font-size:16px;line-height:16px;color:#141414;font-weight:normal;white-space:pre;">0.20</div>
<div style="position:absolute;left:216.5px;top:144.0px;font-size:16px;line-height:16px;color:#141414;font-weight:normal;white-space:pre;">0.01</div>
<div style="position:absolute;left:288.5px;top:144.0px;font-size:16px;line-height:16px;color:#141414;font-weight:normal;white-space:pre;">9.60</div>
<div style="position:absolute;left:361.5px;top:144.0px;font-size:16px;line-height:16px;color:#141414;font-weight:normal;white-space:pre;">15.31</div>
<div style="position:absolute;left:433.3px;top:144.0px;font-size:16px;line-height:16px;color:#141414;font-weight:normal;white-space:pre;">25.79</div>
<div style="position:absolute;left:505.5px;top:144.0px;font-size:16px;line-height:16px;color:#141414;font-weight:normal;white-space:pre;">29.38</div>
<div style="position:absolute;left:577.5px;top:144.0px;font-size:16px;line-height:16px;color:#141414;font-weight:normal;white-space:pre;">35.76</div>
<div style="position:absolute;left:1.5px;top:173.2px;font-size:16px;line-height:16px;color:#141414;font-weight:normal;white-space:pre;">1/3</div>
<div style="position:absolute;left:73.0px;top:173.2px;font-size:16px;line-height:16px;color:#141414;font-weight:normal;white-space:pre;">10 kHz</div>
<div style="position:absolute;left:145.0px;top:173.2px;font-size:16px;line-height:16px;color:#141414;font-weight:normal;white-space:pre;">0.20</div>
<div style="position:absolute;left:216.5px;top:173.2px;font-size:16px;line-height:16px;color:#141414;font-weight:normal;white-space:pre;">0.01</div>
<div style="position:absolute;left:288.5px;top:173.2px;font-size:16px;line-height:16px;color:#141414;font-weight:normal;white-space:pre;">9.70</div>
<div style="position:absolute;left:361.5px;top:173.2px;font-size:16px;line-height:16px;color:#141414;font-weight:normal;white-space:pre;">14.61</div>
<div style="position:absolute;left:433.3px;top:173.2px;font-size:16px;line-height:16px;color:#141414;font-weight:normal;white-space:pre;">24.04</div>
<div style="position:absolute;left:505.5px;top:173.2px;font-size:16px;line-height:16px;color:#141414;font-weight:normal;white-space:pre;">28.91</div>
<div style="position:absolute;left:577.5px;top:173.2px;font-size:16px;line-height:16px;color:#141414;font-weight:normal;white-space:pre;">35.29</div>
<div style="position:absolute;left:1.5px;top:202.5px;font-size:16px;line-height:16px;color:#141414;font-weight:normal;white-space:pre;">1/3</div>
<div style="position:absolute;left:73.0px;top:202.5px;font-size:16px;line-height:16px;color:#141414;font-weight:normal;white-space:pre;">12.5 kHz</div>
<div style="position:absolute;left:145.0px;top:202.5px;font-size:16px;line-height:16px;color:#141414;font-weight:normal;white-space:pre;">0.17</div>
<div style="position:absolute;left:216.5px;top:202.5px;font-size:16px;line-height:16px;color:#141414;font-weight:normal;white-space:pre;">0.00</div>
<div style="position:absolute;left:288.5px;top:202.5px;font-size:16px;line-height:16px;color:#141414;font-weight:normal;white-space:pre;">9.55</div>
<div style="position:absolute;left:361.5px;top:202.5px;font-size:16px;line-height:16px;color:#141414;font-weight:normal;white-space:pre;">18.52</div>
<div style="position:absolute;left:433.3px;top:202.5px;font-size:16px;line-height:16px;color:#141414;font-weight:normal;white-space:pre;">28.76</div>
<div style="position:absolute;left:505.5px;top:202.5px;font-size:16px;line-height:16px;color:#141414;font-weight:normal;white-space:pre;">32.42</div>
<div style="position:absolute;left:577.5px;top:202.5px;font-size:16px;line-height:16px;color:#141414;font-weight:normal;white-space:pre;">40.38</div>
<div style="position:absolute;left:1.5px;top:231.7px;font-size:16px;line-height:16px;color:#141414;font-weight:normal;white-space:pre;">1/3</div>
<div style="position:absolute;left:73.0px;top:231.7px;font-size:16px;line-height:16px;color:#141414;font-weight:normal;white-space:pre;">16 kHz</div>
<div style="position:absolute;left:145.0px;top:231.7px;font-size:16px;line-height:16px;color:#141414;font-weight:normal;white-space:pre;">0.20</div>
<div style="position:absolute;left:216.5px;top:231.7px;font-size:16px;line-height:16px;color:#141414;font-weight:normal;white-space:pre;">0.00</div>
<div style="position:absolute;left:288.5px;top:231.7px;font-size:16px;line-height:16px;color:#141414;font-weight:normal;white-space:pre;">10.21</div>
<div style="position:absolute;left:361.5px;top:231.7px;font-size:16px;line-height:16px;color:#141414;font-weight:normal;white-space:pre;">20.24</div>
<div style="position:absolute;left:433.3px;top:231.7px;font-size:16px;line-height:16px;color:#141414;font-weight:normal;white-space:pre;">28.44</div>
<div style="position:absolute;left:505.5px;top:231.7px;font-size:16px;line-height:16px;color:#141414;font-weight:normal;white-space:pre;">32.04</div>
<div style="position:absolute;left:577.5px;top:231.7px;font-size:16px;line-height:16px;color:#141414;font-weight:normal;white-space:pre;">40.15</div>
<div style="position:absolute;left:1.5px;top:261.0px;font-size:16px;line-height:16px;color:#141414;font-weight:normal;white-space:pre;">1/3</div>
<div style="position:absolute;left:73.0px;top:261.0px;font-size:16px;line-height:16px;color:#141414;font-weight:normal;white-space:pre;">20 kHz</div>
<div style="position:absolute;left:145.0px;top:261.0px;font-size:16px;line-height:16px;color:#141414;font-weight:normal;white-space:pre;">0.17</div>
<div style="position:absolute;left:216.5px;top:261.0px;font-size:16px;line-height:16px;color:#141414;font-weight:normal;white-space:pre;">0.00</div>
<div style="position:absolute;left:288.5px;top:261.0px;font-size:16px;line-height:16px;color:#141414;font-weight:normal;white-space:pre;">9.74</div>
<div style="position:absolute;left:361.5px;top:261.0px;font-size:16px;line-height:16px;color:#141414;font-weight:normal;white-space:pre;">17.89</div>
<div style="position:absolute;left:433.3px;top:261.0px;font-size:16px;line-height:16px;color:#141414;font-weight:normal;white-space:pre;">26.30</div>
<div style="position:absolute;left:505.5px;top:261.0px;font-size:16px;line-height:16px;color:#141414;font-weight:normal;white-space:pre;">28.71</div>
<div style="position:absolute;left:577.5px;top:261.0px;font-size:16px;line-height:16px;color:#141414;font-weight:normal;white-space:pre;">0.00</div>
</div>
<svg style="position:absolute;left:1354px;top:385px" width="28" height="280"><path d="M13.7 4.5 L23.5 18 H4 Z" fill="#3a3d40"/><rect x="3.3" y="27.5" width="21" height="224" rx="10.5" fill="#3d4144"/><rect x="5" y="180" width="17.5" height="70" rx="8.7" fill="#454a4d"/><path d="M13.7 274.5 L23.5 260 H4 Z" fill="#3a3d40"/></svg>
<div style="position:absolute;left:702px;top:680px;width:131px;height:23.5px;background:linear-gradient(#6e7277,#5f6368);border-radius:4px;"></div>
<div style="position:absolute;left:167.0px;width:1200px;text-align:center;top:684.0px;font-size:16px;line-height:16px;color:#eeeeee;font-weight:normal;white-space:pre;">Calculate STI</div>
<div style="position:absolute;left:-440.0px;width:1200px;text-align:right;top:724.5px;font-size:16px;line-height:16px;color:#eeeeee;font-weight:normal;white-space:pre;">STI:</div>
<div style="position:absolute;left:767.2px;top:719px;width:66.8px;height:26.7px;background:linear-gradient(#c0c2c4,#cacccf);border:1px solid #9a9c9e;"></div>
<div style="position:absolute;left:-440.0px;width:1200px;text-align:right;top:764.5px;font-size:16px;line-height:16px;color:#eeeeee;font-weight:normal;white-space:pre;letter-spacing:-0.7px;">STIPA(IR):</div>
<div style="position:absolute;left:767.2px;top:759px;width:66.8px;height:26.7px;background:linear-gradient(#c0c2c4,#cacccf);border:1px solid #9a9c9e;"></div>
<div style="position:absolute;left:-440.0px;width:1200px;text-align:right;top:804.5px;font-size:16px;line-height:16px;color:#eeeeee;font-weight:normal;white-space:pre;">CIS:</div>
<div style="position:absolute;left:767.2px;top:799px;width:66.8px;height:26.7px;background:linear-gradient(#c0c2c4,#cacccf);border:1px solid #9a9c9e;"></div>
<div style="position:absolute;left:-186.4px;width:1200px;text-align:right;top:684.5px;font-size:16px;line-height:16px;color:#eeeeee;font-weight:normal;white-space:pre;">Bass Ratio:</div>
<div style="position:absolute;left:1020.8px;top:679px;width:66.4px;height:26.8px;background:linear-gradient(#c0c2c4,#cacccf);border:1px solid #9a9c9e;"></div>
<div style="position:absolute;left:1027.8px;top:687.4px;font-size:16px;line-height:16px;color:#141414;font-weight:normal;white-space:pre;">1.35</div>
<div style="position:absolute;left:-186.4px;width:1200px;text-align:right;top:724.5px;font-size:16px;line-height:16px;color:#eeeeee;font-weight:normal;white-space:pre;">T Low:</div>
<div style="position:absolute;left:1020.8px;top:719px;width:66.4px;height:26.8px;background:linear-gradient(#c0c2c4,#cacccf);border:1px solid #9a9c9e;"></div>
<div style="position:absolute;left:1027.8px;top:727.4px;font-size:16px;line-height:16px;color:#141414;font-weight:normal;white-space:pre;">0.31</div>
<div style="position:absolute;left:-186.4px;width:1200px;text-align:right;top:764.5px;font-size:16px;line-height:16px;color:#eeeeee;font-weight:normal;white-space:pre;">T Mid:</div>
<div style="position:absolute;left:1020.8px;top:759px;width:66.4px;height:26.8px;background:linear-gradient(#c0c2c4,#cacccf);border:1px solid #9a9c9e;"></div>
<div style="position:absolute;left:1027.8px;top:767.4px;font-size:16px;line-height:16px;color:#141414;font-weight:normal;white-space:pre;">0.23</div>
<div style="position:absolute;left:66.5px;width:1200px;text-align:right;top:684.5px;font-size:16px;line-height:16px;color:#eeeeee;font-weight:normal;white-space:pre;">%Alcons (S):</div>
<div style="position:absolute;left:1273.7px;top:679px;width:67.3px;height:26.8px;background:linear-gradient(#c0c2c4,#cacccf);border:1px solid #9a9c9e;"></div>
<div style="position:absolute;left:1280.7px;top:687.4px;font-size:16px;line-height:16px;color:#141414;font-weight:normal;white-space:pre;">2.12</div>
<div style="position:absolute;left:66.5px;width:1200px;text-align:right;top:724.5px;font-size:16px;line-height:16px;color:#eeeeee;font-weight:normal;white-space:pre;">%Alcons (L):</div>
<div style="position:absolute;left:1273.7px;top:719px;width:67.3px;height:26.8px;background:linear-gradient(#c0c2c4,#cacccf);border:1px solid #9a9c9e;"></div>
<div style="position:absolute;left:1280.7px;top:727.4px;font-size:16px;line-height:16px;color:#141414;font-weight:normal;white-space:pre;">2.58</div>
<div style="position:absolute;left:1128.8px;top:814.3px;width:76.90000000000009px;height:23.1px;background:linear-gradient(#6e7277,#5f6368);border-radius:4px;"></div>
<div style="position:absolute;left:567.2px;width:1200px;text-align:center;top:818.5px;font-size:16px;line-height:16px;color:#eeeeee;font-weight:normal;white-space:pre;">Export</div>
<div style="position:absolute;left:1215.2px;top:814.3px;width:77.79999999999995px;height:23.1px;background:linear-gradient(#6e7277,#5f6368);border-radius:4px;"></div>
<div style="position:absolute;left:654.1px;width:1200px;text-align:center;top:818.5px;font-size:16px;line-height:16px;color:#eeeeee;font-weight:normal;white-space:pre;">Copy</div>
<div style="position:absolute;left:1302px;top:814.3px;width:77.5px;height:23.1px;background:linear-gradient(#6e7277,#5f6368);border-radius:4px;"></div>
<div style="position:absolute;left:740.8px;width:1200px;text-align:center;top:818.5px;font-size:16px;line-height:16px;color:#eeeeee;font-weight:normal;white-space:pre;">OK</div>
</div></body></html>
